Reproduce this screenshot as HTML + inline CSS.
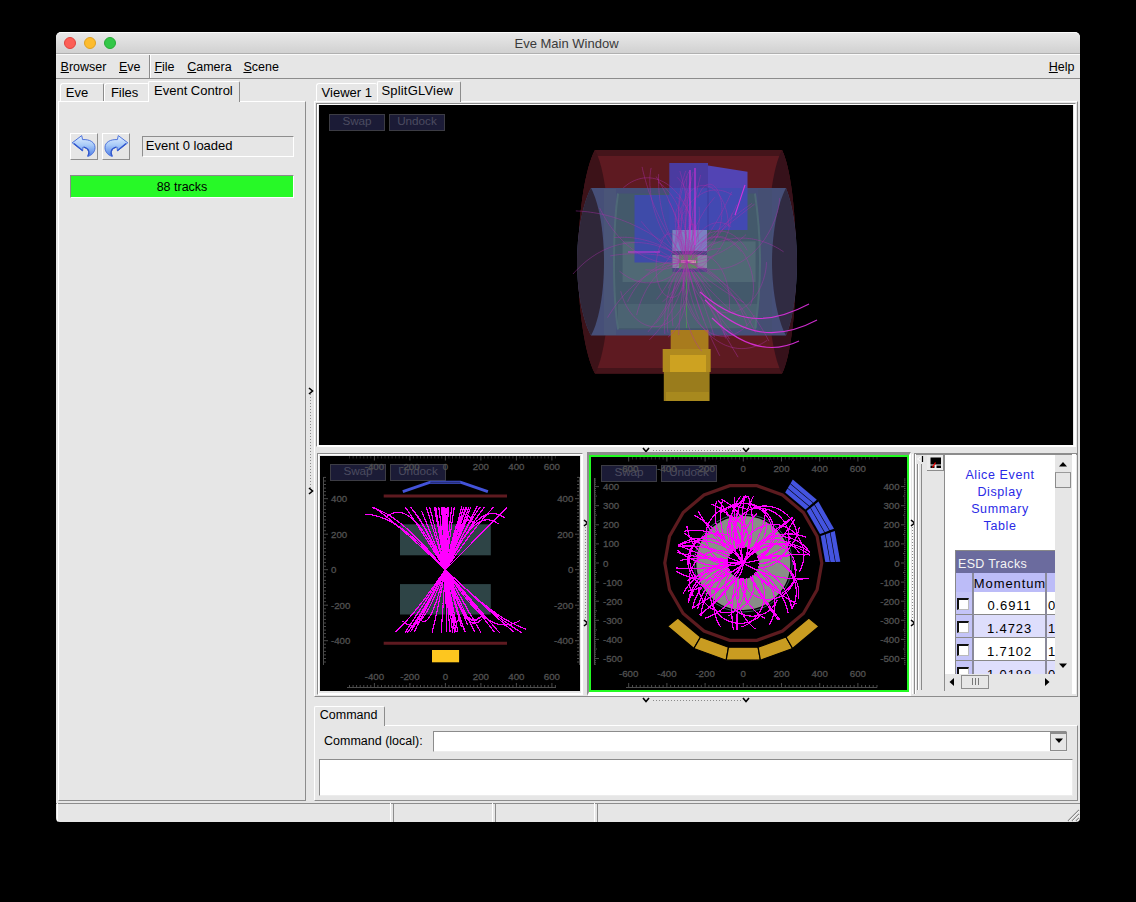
<!DOCTYPE html>
<html><head><meta charset="utf-8">
<style>
*{margin:0;padding:0;box-sizing:border-box}
html,body{width:1136px;height:902px;background:#000;overflow:hidden}
body{position:relative;font-family:"Liberation Sans",sans-serif;font-size:12.5px;color:#000}
.a{position:absolute}
#win{left:56px;top:32px;width:1024px;height:790px;background:#e6e6e6;border-radius:5px 5px 4px 4px;overflow:hidden}
#title{left:0;top:0;width:1024px;height:22px;background:linear-gradient(#e8e8e8,#d1d1d1);border-top:1px solid #fbfbfb;border-bottom:1px solid #b0b0b0;border-radius:5px 5px 0 0}
.dot{width:12px;height:12px;border-radius:50%;top:5px}
.t{white-space:pre;line-height:1}
.u{text-decoration:underline;text-decoration-thickness:1px;text-underline-offset:1px}
.tab{background:#e6e6e6;border-top:1px solid #fff;border-left:1px solid #fff;border-right:1px solid #8c8c8c}
.sunk{border-top:1px solid #8e8e8e;border-left:1px solid #8e8e8e;border-bottom:1px solid #fff;border-right:1px solid #fff}
.raised{border-top:1px solid #fff;border-left:1px solid #fff;border-bottom:1px solid #8e8e8e;border-right:1px solid #8e8e8e}
.blk{background:#000}
.btn{background:#1b1b36;border:1px solid #3c3c44;color:#4b4b60;font-size:11.7px;text-align:center;line-height:12px}
</style></head><body>
<div id="win" class="a">
  <div id="title" class="a"></div>
  <div class="a dot" style="left:8px;background:#fc5f57;border:1px solid #e0443e"></div>
  <div class="a dot" style="left:28px;background:#fdbc2e;border:1px solid #dea123"></div>
  <div class="a dot" style="left:48px;background:#33c748;border:1px solid #27aa35"></div>
  <div class="a t" style="left:458.5px;top:5.3px;font-size:13px;color:#3a3a3a">Eve Main Window</div>

  <!-- menubar -->
  <div class="a" style="left:0;top:22px;width:1024px;height:1px;background:#fafafa"></div>
  <div class="a" style="left:0;top:46px;width:1024px;height:1px;background:#8c8c8c"></div>
  <div class="a" style="left:93px;top:23px;width:1px;height:23px;background:#8c8c8c"></div>
  <div class="a" style="left:94px;top:23px;width:1px;height:23px;background:#fff"></div>
  <div class="a t" style="left:4.6px;top:28.8px"><span class="u">B</span>rowser</div>
  <div class="a t" style="left:63px;top:28.8px"><span class="u">E</span>ve</div>
  <div class="a t" style="left:98.4px;top:28.8px"><span class="u">F</span>ile</div>
  <div class="a t" style="left:131.2px;top:28.8px"><span class="u">C</span>amera</div>
  <div class="a t" style="left:187.4px;top:28.8px"><span class="u">S</span>cene</div>
  <div class="a t" style="left:992.8px;top:29px"><span class="u">H</span>elp</div>

  <!-- left panel -->
  <div class="a" style="left:2px;top:69px;width:248px;height:700px;border-top:1px solid #fff;border-left:1px solid #fff;border-right:1px solid #8c8c8c;border-bottom:1px solid #8c8c8c"></div>
  <div class="a tab" style="left:4px;top:51px;width:44px;height:18px;border-radius:3px 2px 0 0"></div>
  <div class="a tab" style="left:48px;top:51px;width:45px;height:18px;border-radius:3px 2px 0 0;border-right:0"></div>
  <div class="a tab" style="left:92px;top:49px;width:92px;height:21px;border-radius:2px 2px 0 0;border-right:1px solid #8c8c8c"></div>
  <div class="a t" style="left:9.8px;top:54px;font-size:13px">Eve</div>
  <div class="a t" style="left:54.9px;top:54px;font-size:13px">Files</div>
  <div class="a t" style="left:98px;top:52.2px;font-size:13px">Event Control</div>
  <!-- undo/redo -->
  <div class="a raised" style="left:14px;top:101px;width:28px;height:27px"></div>
  <div class="a raised" style="left:46px;top:101px;width:28px;height:27px"></div>
  <svg class="a" style="left:14px;top:101px" width="60" height="27" viewBox="0 0 60 27">
    <defs><linearGradient id="ag" x1="0" y1="0" x2="0" y2="1"><stop offset="0" stop-color="#e4f0ff"/><stop offset="0.45" stop-color="#a9cbf8"/><stop offset="1" stop-color="#4d7ee6"/></linearGradient></defs>
    <g id="undo"><path d="M2.2,9.8 L11.7,2.6 L12.6,6.6 C19.5,6.2 25,9 25,14.6 C25,19.2 21.5,22.6 17.6,23.4 C19.6,20.6 19.6,15.6 13,14 L12.6,18 Z" fill="url(#ag)" stroke="#3f66d8" stroke-width="0.9" stroke-linejoin="round"/>
    <path d="M4,10.5 L12.6,17.6 M14,14.2 C19.6,15.6 19.8,20.5 17.8,23" fill="none" stroke="#2f55cc" stroke-width="1.2"/></g>
    <g transform="translate(60,0) scale(-1,1)"><path d="M2.2,9.8 L11.7,2.6 L12.6,6.6 C19.5,6.2 25,9 25,14.6 C25,19.2 21.5,22.6 17.6,23.4 C19.6,20.6 19.6,15.6 13,14 L12.6,18 Z" fill="url(#ag)" stroke="#3f66d8" stroke-width="0.9" stroke-linejoin="round"/>
    <path d="M4,10.5 L12.6,17.6 M14,14.2 C19.6,15.6 19.8,20.5 17.8,23" fill="none" stroke="#2f55cc" stroke-width="1.2"/></g>
  </svg>
  <div class="a sunk" style="left:86px;top:104px;width:152px;height:21px;background:#e6e6e6"></div>
  <div class="a t" style="left:89.8px;top:107.2px;font-size:13px">Event 0 loaded</div>
  <div class="a" style="left:14px;top:143px;width:224px;height:23px;background:#27f927;border-top:1px solid #8a8a8a;border-left:1px solid #8a8a8a;border-bottom:1px solid #fff;border-right:1px solid #fff"></div>
  <div class="a t" style="left:14px;top:148.6px;width:224px;text-align:center">88 tracks</div>
  <!-- dotted splitter -->
  <!-- right tabs -->
  <div class="a" style="left:258px;top:69px;width:764px;height:596px;border-top:1px solid #fff;border-left:1px solid #fff;border-right:1px solid #8c8c8c;border-bottom:1px solid #8c8c8c"></div>
  <div class="a tab" style="left:260px;top:51px;width:61px;height:18px;border-radius:3px 2px 0 0;border-right:0"></div>
  <div class="a tab" style="left:321px;top:49px;width:84px;height:21px;border-radius:2px 2px 0 0"></div>
  <div class="a t" style="left:265.6px;top:54.2px;font-size:13px">Viewer 1</div>
  <div class="a t" style="left:325.4px;top:52.2px;font-size:13px;letter-spacing:0.2px">SplitGLView</div>

  <!-- splitters (page coords via window offset) -->
  <div class="a" style="left:254px;top:362px;width:1px;height:94px;background:repeating-linear-gradient(#8c8c8c 0 1px,transparent 1px 3px)"></div>
  <svg class="a" style="left:251px;top:355px" width="8" height="8" viewBox="0 0 8 8"><path d="M2,1 L5.5,4 L2,7" fill="none" stroke="#000" stroke-width="1.6"/></svg>
  <svg class="a" style="left:251px;top:455px" width="8" height="8" viewBox="0 0 8 8"><path d="M2,1 L5.5,4 L2,7" fill="none" stroke="#000" stroke-width="1.6"/></svg>
  <!-- upper GL frame -->
  <div class="a" style="left:260px;top:71px;width:760px;height:344px;border-top:1px solid #8c8c8c;border-left:1px solid #8c8c8c;border-bottom:1px solid #fff;border-right:1px solid #fff"></div>
  <div class="a" style="left:261px;top:72px;width:758px;height:342px;border:1px solid #fff"></div>
  <div class="a blk" id="gl1" style="left:263px;top:73px;width:754px;height:340px;overflow:hidden"><div class="a btn" style="left:10px;top:9px;width:56px;height:17px">Swap</div><div class="a btn" style="left:70px;top:9px;width:56px;height:17px">Undock</div><svg width="754" height="340" viewBox="319 105 754 340" style="position:absolute;left:0;top:0">
<path d="M595,150 L782,150 C791,168 796,215 796,262 C796,309 791,356 782,373.5 L595,373.5 C585,356 578,309 578,262 C578,215 585,168 595,150 Z" fill="#5e1a21"/>
<path d="M595,150 L782,150 L784,156 L593,156 Z" fill="#44141a"/>
<path d="M593,368 L784,368 L782,373.5 L595,373.5 Z" fill="#44141a"/>
<path d="M595,150 C585,168 578,215 578,262 C578,309 585,356 595,373.5 C605,356 610,309 610,262 C610,215 605,168 595,150 Z" fill="#3c1218"/>
<path d="M782,150 C772,168 767,215 767,262 C767,309 772,356 782,373.5 C791,356 796,309 796,262 C796,215 791,168 782,150 Z" fill="#36111a"/>
<path d="M591,188 L786,188 C793,205 797,235 797,262 C797,289 793,319 786,335.5 L591,335.5 C582,319 577,289 577,262 C577,235 582,205 591,188 Z" fill="#464f78"/>
<path d="M591,188 C582,205 577,235 577,262 C577,289 582,319 591,335.5 C600,319 604,289 604,262 C604,235 600,205 591,188 Z" fill="#2f2739"/>
<path d="M786,188 C777,205 772,235 772,262 C772,289 777,319 786,335.5 C793,319 797,289 797,262 C797,235 793,205 786,188 Z" fill="#302b42"/>
<rect x="604" y="189" width="12" height="146" fill="#4a5578"/>
<rect x="758" y="189" width="14" height="146" fill="#454f73"/>
<path d="M618,193.5 L755,193.5 C759,210 761,240 761,262 C761,284 759,314 755,329.5 L618,329.5 C615,314 613,284 613,262 C613,240 615,210 618,193.5 Z" fill="#43596b"/>
<rect x="622.6" y="241.4" width="133" height="40.6" fill="#506975"/>
<rect x="618" y="304" width="139" height="24" fill="#4b6372"/>
<path d="M618,193.5 C615,214 614,240 614,262 C614,284 615,310 618,329.5" fill="none" stroke="#52707a" stroke-width="2" opacity="0.7"/>
<path d="M755,193.5 C758,214 760,240 760,262 C760,284 758,310 755,329.5" fill="none" stroke="#52707a" stroke-width="2" opacity="0.7"/>
<path d="M634.5,195 H746 V230 H672.4 V262.5 H634.5 Z" fill="#3e4ba9"/>
<path d="M669.3,163 L708,163 L708,188 L669.3,188 Z" fill="#4a3ba0"/>
<path d="M708,165.6 L747.5,171.8 L747.5,188 L708,188 Z" fill="#5244b4"/>
<path d="M669.3,188 H747.5 V230 H669.3 Z" fill="#4249b2"/>
<path d="M708,188 V230" stroke="#3a3a9a" stroke-width="1"/>
<rect x="672.4" y="230" width="34.6" height="21" fill="#7a80c2"/>
<rect x="672.4" y="251" width="34.6" height="21" fill="#4a4a82"/>
<rect x="672.4" y="255" width="34.6" height="13" fill="#8484a4"/>
<rect x="679" y="254.6" width="18.4" height="14" fill="#5b8c5e"/>
<rect x="681" y="260" width="15" height="3" fill="#c8a0a0"/>
<rect x="670.7" y="330" width="37.8" height="19" fill="#a87b1d"/>
<rect x="662.7" y="349" width="48" height="23" fill="#b08a1e"/>
<rect x="670" y="355" width="36" height="17" fill="#cda221"/>
<rect x="663.8" y="372" width="45.8" height="29" fill="#9a7c1c"/>
<rect x="666" y="392" width="43" height="9" fill="#a8891e"/>
<path d="M686.5,266 V328" stroke="#4c8a5a" stroke-width="1"/>
<path d="M687,262 L687.2,260.3 L687.5,258.6 L687.6,256.9 L687.8,255.2 L687.9,253.6 L688,252.1 L688,250.6 L688,249.1 L688,247.7 L688,246.3 L687.9,245 L687.8,243.7 L687.7,242.5 L687.5,241.3 L687.3,240.2 L687.1,239.2 L686.9,238.2 L686.7,237.3 L686.4,236.4 L686.2,235.6 L685.9,234.8 L685.6,234.2 L685.2,233.5 L684.9,233 L684.6,232.5 L684.2,232.1 L683.8,231.7 L683.5,231.5 L683.1,231.2 L682.7,231.1 L682.3,231 L681.9,231 L681.5,231.1 L681.1,231.2 L680.7,231.4 L680.3,231.7 L680,232 L679.6,232.4 L679.2,232.9 L678.9,233.5 L678.5,234.1 L678.2,234.8 L677.8,235.5 L677.5,236.3 L677.2,237.2 L676.9,238.1 L676.7,239.1 L676.4,240.2 L676.2,241.3 L676,242.5 M695.7,266.1 L697.9,266.9 L700.1,267.6 L702.4,268.2 L704.7,268.6 L707,269 L709.3,269.3 L711.6,269.5 L713.9,269.5 L716.1,269.5 L718.4,269.3 L720.7,269.1 L723,268.7 L725.2,268.2 L727.4,267.7 L729.7,267 L731.8,266.3 L734,265.4 L736.1,264.5 L738.2,263.4 L740.3,262.3 L742.3,261.1 L744.3,259.8 L746.2,258.5 L748.1,257 L750,255.5 L751.8,254 L753.5,252.4 L755.2,250.7 L756.8,249 L758.4,247.2 L760,245.4 L761.4,243.5 L762.8,241.7 L764.2,239.8 L765.5,237.9 L766.7,235.9 L767.9,234 L769,232 L770,230.1 L771,228.2 L772,226.3 L772.8,224.4 L773.6,222.5 L774.4,220.6 L775.1,218.8 L775.7,217 L776.3,215.3 L776.8,213.6 L777.3,212 L777.7,210.4 L778.1,208.9 L778.4,207.5 L778.7,206.1 L778.9,204.8 L779.1,203.6 L779.3,202.5 L779.4,201.5 L779.5,200.5 L779.6,199.7 L779.6,198.9 L779.6,198.2 M685.6,257.7 L685.3,256.8 L685,256 L684.8,255.3 L684.5,254.6 L684.3,254.1 L684.1,253.7 L683.8,253.3 L683.6,253.1 L683.4,252.9 L683.2,252.8 L683,252.8 L682.7,252.9 L682.5,253.1 L682.3,253.4 L682,253.8 L681.8,254.2 L681.5,254.8 L681.2,255.4 L680.9,256.1 L680.5,256.9 L680.1,257.8 L679.7,258.8 L679.3,259.8 L678.9,260.9 L678.4,262.1 L677.8,263.3 L677.3,264.6 L676.7,266 L676,267.4 L675.4,268.9 L674.6,270.5 L673.9,272.1 L673.1,273.7 L672.2,275.4 L671.3,277.1 L670.3,278.9 L669.3,280.7 L668.3,282.5 L667.2,284.3 L666,286.2 L664.8,288.1 L663.6,290 L662.3,291.9 L660.9,293.8 L659.5,295.7 L658,297.6 L656.5,299.5 M687,262 L686.9,260.8 L686.7,259.6 L686.6,258.5 L686.5,257.2 L686.4,256 L686.3,254.8 L686.2,253.5 L686.1,252.2 L686,251 L685.9,249.7 L685.8,248.4 L685.8,247 L685.7,245.7 L685.7,244.3 L685.6,243 L685.6,241.6 L685.6,240.2 L685.6,238.8 L685.6,237.4 L685.6,235.9 L685.6,234.5 L685.6,233 L685.6,231.6 L685.6,230.1 L685.7,228.6 L685.7,227.1 L685.8,225.6 L685.8,224.1 L685.9,222.5 L686,221 L686.1,219.4 L686.2,217.8 L686.3,216.3 L686.4,214.7 L686.5,213.1 L686.7,211.4 L686.8,209.8 L687,208.2 L687.1,206.5 L687.3,204.9 L687.5,203.2 L687.7,201.5 L687.9,199.8 L688.1,198.2 L688.3,196.4 M692.4,255.9 L693.8,254.3 L695.2,252.8 L696.5,251.3 L697.9,249.9 L699.3,248.4 L700.7,246.9 L702.1,245.5 L703.6,244 L705,242.6 L706.4,241.2 L707.8,239.7 L709.3,238.3 L710.7,236.9 L712.2,235.6 L713.6,234.2 L715.1,232.8 L716.6,231.5 L718.1,230.1 L719.5,228.8 L721,227.5 L722.5,226.2 L724,224.9 L725.5,223.6 L727,222.3 L728.6,221.1 L730.1,219.8 L731.6,218.6 L733.1,217.3 L734.7,216.1 L736.2,214.9 L737.8,213.7 L739.3,212.5 L740.9,211.4 L742.4,210.2 L744,209.1 L745.6,207.9 L747.2,206.8 L748.8,205.7 L750.3,204.6 L751.9,203.5 M684.6,263.8 L684,264 L683.3,264.1 L682.7,264 L682.1,263.9 L681.5,263.6 L680.9,263.3 L680.3,262.8 L679.7,262.2 L679.2,261.5 L678.6,260.8 L678.1,259.9 L677.7,258.9 L677.2,257.9 L676.8,256.7 L676.5,255.5 L676.2,254.2 L675.9,252.8 L675.6,251.3 L675.5,249.7 L675.3,248.1 L675.3,246.5 L675.2,244.7 L675.3,242.9 L675.3,241.1 L675.5,239.3 L675.7,237.4 L676,235.4 L676.3,233.5 L676.7,231.5 L677.1,229.5 L677.6,227.5 L678.2,225.5 L678.8,223.5 L679.6,221.5 L680.3,219.6 L681.1,217.6 L682,215.7 L683,213.8 L684,212 L685.1,210.2 L686.2,208.4 L687.3,206.7 L688.6,205.1 L689.9,203.5 L691.2,202 L692.6,200.6 L694,199.2 L695.4,197.9 L696.9,196.7 L698.5,195.6 L700.1,194.6 L701.7,193.7 L703.3,192.9 L705,192.1 L706.6,191.5 L708.3,191 L710.1,190.6 L711.8,190.3 L713.5,190.1 L715.3,190 L717,190 L718.8,190.1 L720.5,190.4 L722.3,190.7 L724,191.2 L725.7,191.7 L727.4,192.4 L729.1,193.1 L730.7,194 L732.3,195 M687,262 L686.1,262.4 L685.1,262.8 L684.2,263.2 L683.3,263.6 L682.3,264 L681.4,264.4 L680.5,264.7 L679.5,265.1 L678.6,265.4 L677.7,265.7 L676.7,266 L675.8,266.3 L674.8,266.6 L673.9,266.9 L672.9,267.2 L672,267.4 L671.1,267.7 L670.1,267.9 L669.2,268.1 L668.2,268.3 L667.3,268.5 L666.3,268.7 L665.4,268.9 L664.4,269 L663.5,269.2 L662.5,269.3 L661.6,269.4 L660.6,269.5 L659.7,269.6 L658.7,269.7 L657.8,269.8 L656.8,269.9 L655.9,269.9 L654.9,270 L654,270 L653,270 L652.1,270 L651.1,270 L650.2,270 L649.2,270 L648.3,269.9 L647.3,269.9 L646.4,269.8 L645.4,269.8 M682.4,269.6 L681.4,271.5 L680.4,273.5 L679.4,275.4 L678.4,277.4 L677.5,279.4 L676.7,281.3 L675.9,283.3 L675.1,285.3 L674.4,287.2 L673.7,289.2 L673,291.1 L672.4,293.1 L671.8,295 L671.2,296.9 L670.7,298.8 L670.3,300.6 L669.8,302.5 L669.4,304.3 L669.1,306.1 L668.7,307.8 L668.4,309.6 L668.2,311.3 L667.9,312.9 L667.8,314.6 L667.6,316.2 L667.5,317.7 L667.4,319.2 L667.3,320.7 L667.3,322.1 L667.2,323.5 L667.3,324.8 L667.3,326.1 L667.4,327.3 L667.5,328.5 L667.6,329.6 L667.7,330.7 L667.9,331.7 L668.1,332.6 M688.1,254.1 L688.5,252.1 L688.9,250.1 L689.3,248.1 L689.8,246.1 L690.3,244.1 L690.8,242.1 L691.4,240.1 L692,238.1 L692.6,236.1 L693.3,234.2 L694,232.2 L694.7,230.2 L695.5,228.3 L696.3,226.4 L697.1,224.4 L698,222.6 L698.9,220.7 L699.9,218.8 L700.8,217 L701.8,215.2 L702.9,213.4 L703.9,211.7 L705,209.9 L706.1,208.2 L707.3,206.6 L708.5,205 L709.7,203.4 L710.9,201.8 L712.2,200.3 L713.4,198.8 L714.7,197.4 M687,262 L688.2,262.5 L689.4,262.8 L690.6,263.2 L691.8,263.4 L693,263.6 L694.2,263.7 L695.4,263.8 L696.7,263.7 L697.9,263.7 L699.1,263.5 L700.3,263.3 L701.5,263 L702.7,262.6 L703.9,262.2 L705.1,261.7 L706.3,261.2 L707.4,260.5 L708.6,259.8 L709.7,259.1 L710.8,258.3 L711.9,257.4 L713,256.5 L714.1,255.5 L715.1,254.4 L716.2,253.3 L717.2,252.1 L718.1,250.9 L719.1,249.6 L720,248.3 L720.9,246.9 L721.8,245.5 L722.7,244 L723.5,242.4 L724.3,240.9 L725,239.3 L725.8,237.6 L726.5,235.9 L727.1,234.2 L727.8,232.4 L728.4,230.6 L728.9,228.8 L729.4,226.9 L729.9,225 L730.4,223.1 L730.8,221.2 L731.2,219.2 L731.5,217.2 L731.8,215.2 L732.1,213.2 M677.7,255.3 L675.3,253.8 L672.8,252.4 L670.3,251.1 L667.8,249.8 L665.2,248.7 L662.6,247.6 L660,246.7 L657.3,245.8 L654.7,245 L652,244.4 L649.3,243.8 L646.6,243.3 L643.9,243 L641.1,242.7 L638.4,242.6 L635.7,242.6 L633,242.6 L630.3,242.8 L627.6,243 L624.9,243.4 L622.2,243.9 L619.6,244.5 L617,245.1 L614.4,245.9 L611.8,246.7 L609.3,247.7 L606.8,248.7 L604.3,249.8 L601.9,251 L599.5,252.3 L597.1,253.6 L594.8,255.1 L592.6,256.5 L590.4,258.1 L588.2,259.7 L586.1,261.3 L584.1,263 L582.1,264.8 L580.2,266.6 L578.3,268.4 L576.5,270.2 L574.7,272.1 L573,274 M685.3,269.3 L684.9,271.2 L684.6,273.1 L684.3,275.1 L684,277 L683.8,279 L683.6,281 L683.5,283 L683.4,285.1 L683.3,287.1 L683.2,289.1 L683.2,291.2 L683.2,293.2 L683.3,295.3 L683.4,297.4 L683.5,299.4 L683.7,301.5 L683.9,303.6 L684.1,305.6 L684.4,307.6 L684.7,309.7 L685.1,311.7 L685.4,313.7 L685.8,315.7 L686.3,317.7 L686.8,319.7 L687.3,321.6 L687.8,323.5 L688.4,325.4 L689,327.3 L689.7,329.1 L690.4,330.9 L691.1,332.7 L691.8,334.5 L692.6,336.2 L693.4,337.9 L694.2,339.5 L695.1,341.1 L695.9,342.7 L696.8,344.2 L697.8,345.7 L698.7,347.2 L699.7,348.6 L700.7,349.9 L701.8,351.2 M687,262 L686.1,260.6 L685.3,259.2 L684.5,257.6 L683.7,256.1 L683,254.4 L682.3,252.7 L681.7,251 L681.1,249.2 L680.6,247.3 L680.1,245.4 L679.7,243.5 L679.3,241.6 L679,239.6 L678.8,237.6 L678.6,235.5 L678.4,233.5 L678.3,231.5 L678.3,229.4 L678.3,227.4 L678.4,225.3 L678.5,223.3 L678.7,221.2 L678.9,219.2 L679.2,217.3 L679.5,215.3 L679.9,213.4 L680.4,211.5 L680.9,209.6 L681.4,207.8 L682,206 L682.7,204.3 L683.4,202.6 L684.1,201 L684.9,199.5 L685.7,198 L686.6,196.6 L687.5,195.3 L688.4,194 L689.4,192.8 L690.4,191.7 L691.4,190.7 L692.5,189.8 L693.5,188.9 L694.6,188.2 L695.8,187.5 L696.9,186.9 L698,186.4 L699.2,186 L700.4,185.7 L701.6,185.5 L702.7,185.4 L703.9,185.4 L705.1,185.5 L706.3,185.7 L707.5,186 L708.6,186.3 L709.8,186.8 L710.9,187.4 L712,188 L713.1,188.8 L714.2,189.6 L715.3,190.5 L716.3,191.5 L717.3,192.6 L718.3,193.8 L719.2,195 L720.1,196.4 L721,197.8 L721.8,199.2 L722.6,200.8 L723.4,202.4 L724.1,204 L724.7,205.7 L725.3,207.5 L725.9,209.3 L726.4,211.1 L726.9,213 L727.3,214.9 L727.6,216.9 L727.9,218.9 L728.2,220.9 L728.4,222.9 L728.5,224.9 L728.6,227 M687.4,253.9 L687.4,251.8 L687.4,249.7 L687.3,247.7 L687.2,245.6 L687.1,243.6 L686.9,241.5 L686.7,239.5 L686.5,237.4 L686.2,235.4 L685.9,233.4 L685.6,231.4 L685.2,229.4 L684.8,227.4 L684.4,225.4 L683.9,223.5 L683.4,221.6 L682.9,219.7 L682.3,217.8 L681.7,216 L681.1,214.2 L680.4,212.4 L679.7,210.6 L679,208.9 L678.3,207.2 L677.5,205.5 L676.7,203.9 L675.9,202.3 L675,200.8 L674.1,199.3 L673.2,197.8 L672.3,196.4 L671.3,195 L670.4,193.7 L669.4,192.4 L668.3,191.2 L667.3,190 L666.2,188.8 L665.2,187.8 L664.1,186.7 L662.9,185.7 L661.8,184.8 L660.7,183.9 L659.5,183.1 L658.3,182.4 M693.9,268.2 L695.7,269.7 L697.5,271.1 L699.2,272.6 L701,274.1 L702.8,275.5 L704.6,276.9 L706.4,278.3 L708.2,279.7 L710,281.1 L711.9,282.4 L713.7,283.8 L715.6,285.1 L717.4,286.4 L719.3,287.7 L721.2,288.9 L723,290.2 L724.9,291.4 L726.8,292.6 L728.7,293.8 L730.6,295 L732.5,296.1 L734.4,297.2 L736.4,298.4 L738.3,299.4 L740.2,300.5 L742.2,301.6 L744.1,302.6 M687,262 L686.5,261 L686,259.9 L685.6,258.8 L685.1,257.7 L684.7,256.5 L684.3,255.2 L683.9,254 L683.5,252.6 L683.2,251.3 L682.9,249.9 L682.6,248.4 L682.3,247 L682,245.4 L681.8,243.9 L681.6,242.3 L681.4,240.7 L681.3,239.1 L681.2,237.4 L681.1,235.7 L681,233.9 L681,232.2 L681,230.4 L681,228.6 L681,226.8 L681.1,224.9 L681.2,223 L681.3,221.1 L681.5,219.2 L681.7,217.3 L681.9,215.4 L682.2,213.4 L682.4,211.5 L682.8,209.5 L683.1,207.5 L683.5,205.5 L683.9,203.5 L684.4,201.5 L684.8,199.5 L685.3,197.5 L685.9,195.5 L686.4,193.5 L687.1,191.5 L687.7,189.6 L688.4,187.6 L689.1,185.6 L689.8,183.6 L690.5,181.7 M689.4,254.5 L690,252.6 L690.4,250.6 L690.9,248.6 L691.3,246.6 L691.7,244.6 L692,242.6 L692.3,240.6 L692.5,238.6 L692.7,236.6 L692.9,234.5 L693.1,232.5 L693.2,230.4 L693.2,228.4 L693.3,226.4 L693.2,224.4 L693.2,222.4 L693.1,220.4 L693,218.4 L692.8,216.4 L692.6,214.5 L692.4,212.5 L692.1,210.6 L691.8,208.8 L691.4,206.9 L691,205.1 L690.6,203.3 L690.2,201.5 L689.7,199.8 L689.2,198.1 L688.6,196.5 L688,194.9 L687.4,193.3 L686.8,191.8 L686.1,190.3 L685.4,188.9 L684.7,187.5 L684,186.2 L683.2,184.9 L682.4,183.6 L681.6,182.5 L680.7,181.3 L679.9,180.3 L679,179.3 L678.1,178.3 L677.2,177.4 M692.5,255.6 L693.9,254 L695.2,252.4 L696.6,250.7 L697.9,249 L699.2,247.3 L700.5,245.6 L701.7,243.9 L703,242.2 L704.3,240.5 L705.5,238.7 L706.7,236.9 L707.9,235.2 L709.1,233.4 L710.3,231.6 L711.5,229.8 L712.6,227.9 L713.7,226.1 L714.9,224.3 L716,222.4 L717.1,220.6 L718.1,218.7 L719.2,216.8 L720.3,214.9 L721.3,213 L722.3,211.1 L723.3,209.2 L724.3,207.3 L725.3,205.4 L726.2,203.4 L727.2,201.5 L728.1,199.6 L729,197.6 L729.9,195.7 L730.8,193.7 L731.7,191.8 M687,262 L685,262.1 L682.9,262.3 L680.9,262.6 L678.9,262.9 L676.9,263.2 L674.9,263.7 L672.9,264.1 L670.9,264.6 L668.9,265.2 L666.9,265.8 L665,266.5 L663,267.2 L661.1,268 L659.2,268.8 L657.3,269.7 L655.4,270.6 L653.5,271.5 L651.6,272.5 L649.8,273.6 L648,274.7 L646.2,275.8 L644.4,277 L642.6,278.2 L640.9,279.5 L639.1,280.8 L637.4,282.2 L635.8,283.6 L634.1,285 L632.5,286.4 L630.9,287.9 L629.3,289.5 L627.7,291 L626.2,292.6 L624.7,294.3 L623.2,295.9 L621.7,297.6 L620.3,299.3 L618.9,301 L617.5,302.8 L616.2,304.6 L614.8,306.4 L613.6,308.2 L612.3,310.1 L611.1,311.9 L609.9,313.8 L608.7,315.7 L607.6,317.6 M680.4,256.2 L678.9,254.6 L677.4,252.9 L675.9,251.2 L674.4,249.5 L673,247.7 L671.6,245.9 L670.3,244 L669,242.1 L667.7,240.2 L666.5,238.2 L665.3,236.2 L664.1,234.2 L663.1,232.1 L662,230.1 L661,228 L660,225.9 L659.1,223.8 L658.2,221.7 L657.4,219.5 L656.6,217.4 L655.9,215.3 L655.2,213.2 L654.5,211 L653.9,208.9 L653.3,206.8 L652.8,204.7 L652.4,202.7 L651.9,200.6 L651.5,198.6 L651.2,196.6 L650.9,194.6 L650.6,192.7 L650.4,190.8 L650.2,188.9 L650.1,187.1 L649.9,185.3 L649.9,183.6 L649.8,181.9 L649.8,180.2 L649.9,178.6 L649.9,177.1 L650,175.6 L650.2,174.2 L650.3,172.8 L650.5,171.5 L650.7,170.2 L650.9,169 L651.2,167.9 M690.6,254.6 L691.7,252.8 L692.8,251.1 L694,249.5 L695.2,248 L696.5,246.5 L697.8,245.2 L699.2,243.9 L700.6,242.7 L702.1,241.6 L703.6,240.5 L705.1,239.6 L706.6,238.8 L708.2,238.1 L709.8,237.6 L711.4,237.1 L713.1,236.7 L714.7,236.5 L716.4,236.4 L718.1,236.4 L719.7,236.5 L721.4,236.7 L723,237 L724.7,237.5 L726.3,238.1 L727.9,238.8 L729.5,239.6 L731,240.5 L732.5,241.5 L734,242.6 L735.5,243.8 L736.9,245.1 L738.3,246.5 L739.6,248 L740.9,249.5 L742.1,251.2 L743.3,252.9 L744.4,254.6 L745.4,256.5 L746.4,258.4 L747.4,260.3 L748.2,262.3 L749,264.3 L749.8,266.4 L750.5,268.4 L751.1,270.5 L751.6,272.6 L752.1,274.7 L752.5,276.8 L752.8,278.9 L753.1,280.9 L753.3,283 L753.4,285 L753.5,287 L753.5,288.9 L753.4,290.8 L753.3,292.6 L753.2,294.4 L752.9,296.1 L752.7,297.7 L752.3,299.3 L751.9,300.8 L751.5,302.2 L751.1,303.5 L750.5,304.7 L750,305.8 M687,262 L688.9,262.7 L690.7,263.5 L692.5,264.4 L694.4,265.2 L696.2,266.1 L698,267.1 L699.8,268.1 L701.6,269.1 L703.3,270.2 L705.1,271.3 L706.8,272.5 L708.6,273.7 L710.3,274.9 L712,276.2 L713.6,277.5 L715.3,278.9 L717,280.2 L718.6,281.7 L720.2,283.1 L721.8,284.6 L723.4,286.1 L724.9,287.7 L726.4,289.3 L728,290.9 L729.5,292.5 L730.9,294.2 L732.4,295.9 L733.8,297.7 L735.2,299.4 L736.6,301.2 L738,303 L739.3,304.8 L740.6,306.7 L741.9,308.6 L743.2,310.5 L744.4,312.4 L745.7,314.3 L746.9,316.3 L748,318.3 L749.2,320.3 L750.3,322.3 L751.4,324.3 L752.5,326.4 L753.5,328.4 L754.5,330.5 L755.5,332.5 M689.7,255 L690.3,253.1 L690.8,251.2 L691.2,249.3 L691.6,247.3 L691.9,245.3 L692.2,243.3 L692.4,241.3 L692.5,239.2 L692.6,237.2 L692.7,235.1 L692.7,233.1 L692.6,231.1 L692.4,229 L692.2,227.1 L692,225.1 L691.7,223.2 L691.3,221.2 L690.9,219.4 L690.4,217.6 L689.9,215.8 L689.3,214.1 L688.7,212.4 L688,210.8 L687.3,209.3 L686.6,207.8 L685.8,206.4 L684.9,205.1 L684.1,203.9 L683.2,202.7 L682.2,201.6 L681.3,200.6 L680.3,199.7 L679.2,198.9 L678.2,198.2 L677.1,197.6 L676.1,197.1 M685.7,262.3 L685.4,262.7 L685.1,263.1 L684.8,263.7 L684.5,264.3 L684.3,265.1 L684,265.9 L683.8,266.8 L683.6,267.9 L683.5,269 L683.4,270.2 L683.3,271.5 L683.2,272.9 L683.2,274.3 L683.2,275.9 L683.3,277.5 L683.4,279.1 L683.5,280.9 L683.8,282.7 L684,284.5 L684.3,286.4 L684.7,288.4 L685.1,290.4 L685.6,292.4 L686.1,294.4 L686.7,296.5 L687.4,298.6 L688.1,300.7 L688.8,302.9 L689.7,305 L690.6,307.1 L691.5,309.3 L692.5,311.4 L693.6,313.5 L694.7,315.6 L695.9,317.7 L697.1,319.7 L698.4,321.7 L699.8,323.6 L701.2,325.6 L702.7,327.4 L704.2,329.2 L705.7,331 L707.3,332.7 L709,334.3 L710.7,335.8 L712.4,337.3 L714.2,338.7 L716,340 L717.9,341.2 L719.8,342.4 L721.7,343.4 L723.6,344.4 L725.6,345.3 L727.6,346 L729.6,346.7 L731.6,347.3 L733.6,347.7 L735.7,348.1 L737.7,348.4 L739.8,348.5 L741.8,348.6 L743.9,348.5 L745.9,348.4 L748,348.1 L750,347.8 L752,347.3 L754,346.8 L756,346.1 L757.9,345.4 L759.9,344.5 L761.8,343.6 L763.6,342.6 L765.5,341.4 L767.2,340.3 M687,262 L685.6,261.7 L684.1,261.5 L682.6,261.3 L681.2,261.2 L679.7,261.1 L678.3,261.1 L676.8,261.2 L675.4,261.3 L673.9,261.4 L672.5,261.6 L671,261.9 L669.6,262.2 L668.2,262.5 L666.7,262.9 L665.3,263.4 L663.9,263.9 L662.5,264.5 L661.1,265.1 L659.7,265.7 L658.3,266.4 L657,267.2 L655.6,268 L654.3,268.9 L652.9,269.8 L651.6,270.7 L650.3,271.7 L649,272.7 L647.8,273.8 L646.5,275 L645.3,276.1 L644.1,277.3 L642.9,278.6 L641.7,279.9 L640.5,281.2 L639.4,282.6 L638.3,284 L637.2,285.5 L636.1,287 L635.1,288.5 L634.1,290 L633.1,291.6 L632.1,293.2 L631.1,294.9 L630.2,296.6 L629.3,298.3 L628.4,300 L627.6,301.8 M678.9,263.3 L676.8,263.5 L674.8,263.6 L672.7,263.6 L670.7,263.5 L668.6,263.4 L666.6,263.2 L664.5,262.9 L662.5,262.6 L660.4,262.2 L658.4,261.7 L656.4,261.2 L654.3,260.6 L652.3,259.9 L650.3,259.2 L648.4,258.4 L646.4,257.5 L644.4,256.6 L642.5,255.6 L640.6,254.5 L638.7,253.4 L636.8,252.2 L635,251 L633.1,249.7 L631.3,248.3 L629.6,246.9 L627.8,245.5 L626.1,244 L624.4,242.4 L622.7,240.8 L621.1,239.1 L619.5,237.4 L617.9,235.7 L616.4,233.9 L614.9,232.1 L613.4,230.2 L612,228.4 L610.6,226.4 L609.2,224.5 L607.9,222.5 L606.6,220.5 L605.3,218.5 L604.1,216.4 L603,214.4 L601.8,212.3 L600.7,210.2 L599.7,208.1 M685.5,253.7 L685.1,251.7 L684.7,249.6 L684.3,247.6 L683.8,245.5 L683.4,243.5 L682.9,241.5 L682.4,239.4 L681.9,237.4 L681.3,235.4 L680.8,233.4 L680.2,231.4 L679.6,229.4 L679,227.4 L678.4,225.4 L677.8,223.4 L677.1,221.5 L676.5,219.5 L675.8,217.6 L675.1,215.7 L674.4,213.8 L673.7,211.9 L672.9,210 L672.2,208.1 L671.4,206.2 L670.6,204.3 L669.8,202.5 L669,200.7 L668.2,198.9 L667.4,197 L666.5,195.3 L665.7,193.5 L664.8,191.7 L663.9,190 L663,188.3 L662,186.5 L661.1,184.8 L660.2,183.2 L659.2,181.5 L658.2,179.9 L657.2,178.2 L656.2,176.6 M687,262 L686.5,263.4 L686.1,264.7 L685.6,266.1 L685.1,267.4 L684.6,268.7 L684.1,270 L683.6,271.2 L683.1,272.5 L682.6,273.7 L682.1,274.9 L681.5,276.1 L681,277.3 L680.4,278.4 L679.9,279.5 L679.3,280.6 L678.7,281.7 L678.2,282.8 L677.6,283.8 L677,284.8 L676.4,285.8 L675.8,286.8 L675.1,287.8 L674.5,288.7 L673.9,289.6 L673.3,290.5 L672.6,291.4 L672,292.2 L671.3,293 L670.7,293.8 L670,294.6 L669.4,295.4 L668.7,296.1 L668,296.8 L667.3,297.5 L666.7,298.2 L666,298.8 L665.3,299.4 L664.6,300 L663.9,300.6 L663.2,301.2 L662.5,301.7 M687.1,270.2 L686.9,272.1 L686.7,274.1 L686.5,276 L686.2,277.8 L685.8,279.6 L685.3,281.3 L684.9,283 L684.3,284.6 L683.7,286.1 L683.1,287.6 L682.4,288.9 L681.7,290.2 L680.9,291.4 L680.1,292.4 L679.3,293.4 L678.5,294.3 L677.6,295.1 L676.7,295.8 L675.8,296.3 L674.8,296.8 L673.9,297.1 L672.9,297.4 L672,297.5 L671,297.5 L670,297.4 L669.1,297.1 L668.1,296.8 L667.2,296.4 L666.3,295.8 L665.4,295.2 L664.5,294.4 L663.7,293.5 L662.8,292.6 L662.1,291.5 L661.3,290.3 L660.6,289.1 L659.9,287.8 L659.3,286.3 L658.8,284.8 L658.2,283.3 L657.8,281.6 L657.3,279.9 L657,278.2 L656.7,276.3 L656.4,274.5 L656.2,272.6 L656.1,270.6 L656.1,268.7 L656.1,266.7 L656.1,264.7 L656.3,262.6 L656.5,260.6 L656.7,258.6 L657.1,256.6 L657.5,254.5 L657.9,252.6 L658.4,250.6 L659,248.7 L659.7,246.8 L660.4,244.9 L661.2,243.1 L662,241.4 L662.9,239.7 L663.8,238.1 L664.8,236.5 L665.8,235 L666.9,233.6 L668,232.3 M686.8,261.5 L686.7,261.6 L686.6,261.7 L686.6,261.9 L686.5,262.1 L686.5,262.5 L686.4,262.8 L686.4,263.3 L686.3,263.8 L686.3,264.4 L686.3,265 L686.2,265.7 L686.2,266.5 L686.3,267.3 L686.3,268.2 L686.3,269.1 L686.4,270.1 L686.4,271.2 L686.5,272.3 L686.6,273.5 L686.8,274.7 L686.9,276 L687.1,277.4 L687.3,278.8 L687.5,280.2 L687.8,281.7 L688,283.3 L688.3,284.8 L688.7,286.5 L689,288.2 L689.4,289.9 L689.8,291.6 L690.3,293.4 L690.8,295.3 L691.3,297.2 L691.8,299.1 L692.4,301 L693,303 L693.7,304.9 L694.3,307 L695.1,309 L695.8,311.1 L696.6,313.1 L697.4,315.2 L698.3,317.4 L699.2,319.5 M687,262 L689.8,263 L692.6,264.1 L695.3,265.3 L698,266.5 L700.7,267.8 L703.4,269.2 L706,270.7 L708.6,272.2 L711.2,273.8 L713.7,275.5 L716.2,277.2 L718.6,279 L721,280.8 L723.4,282.7 L725.7,284.7 L727.9,286.7 L730.2,288.7 L732.3,290.7 L734.5,292.8 L736.5,295 L738.5,297.1 L740.5,299.3 L742.4,301.5 L744.3,303.7 L746.1,305.9 L747.8,308.1 L749.6,310.3 L751.2,312.6 L752.8,314.8 L754.3,317 L755.8,319.1 L757.3,321.3 L758.7,323.5 L760,325.6 L761.3,327.7 L762.5,329.7 L763.7,331.7 L764.9,333.7 L766,335.6 L767,337.5 L768,339.4 L769,341.1 M684.4,254.8 L683.9,252.9 L683.3,251 L682.8,249.1 L682.3,247.2 L681.8,245.2 L681.4,243.3 L681,241.3 L680.6,239.3 L680.3,237.3 L680,235.3 L679.7,233.3 L679.4,231.3 L679.2,229.2 L679,227.2 L678.8,225.1 L678.7,223.1 L678.5,221 L678.5,218.9 L678.4,216.9 L678.4,214.8 L678.4,212.8 L678.4,210.7 L678.5,208.7 L678.6,206.6 L678.7,204.6 L678.9,202.6 L679.1,200.6 L679.3,198.6 L679.5,196.6 L679.8,194.6 L680.1,192.7 L680.4,190.7 L680.8,188.8 L681.2,186.9 L681.6,185 L682,183.2 L682.5,181.3 L683,179.5 L683.5,177.7 L684.1,176 L684.6,174.2 L685.2,172.5 L685.9,170.8 M684.9,268.7 L684.4,270.3 L683.9,272 L683.3,273.6 L682.7,275.2 L682.1,276.8 L681.6,278.4 L681,279.9 L680.4,281.5 L679.7,283 L679.1,284.5 L678.5,286 L677.8,287.5 L677.2,289 L676.5,290.4 L675.8,291.9 L675.2,293.3 L674.5,294.7 L673.8,296.1 L673.1,297.5 L672.4,298.8 L671.6,300.2 L670.9,301.5 L670.2,302.8 L669.4,304.1 L668.7,305.4 L667.9,306.6 L667.2,307.9 L666.4,309.1 L665.6,310.3 L664.8,311.5 L664,312.7 L663.2,313.8 L662.4,315 L661.6,316.1 L660.8,317.2 L659.9,318.3 L659.1,319.3 L658.2,320.4 L657.4,321.4 L656.5,322.4 L655.7,323.4 M687,262 L687.3,260.1 L687.5,258.2 L687.7,256.3 L687.9,254.4 L688.1,252.5 L688.3,250.5 L688.5,248.6 L688.6,246.6 L688.7,244.6 L688.8,242.6 L688.9,240.6 L688.9,238.6 L689,236.6 L689,234.6 L689,232.5 L689,230.5 L688.9,228.5 L688.9,226.4 L688.8,224.3 L688.7,222.3 L688.6,220.2 L688.4,218.2 L688.3,216.1 L688.1,214 L687.9,211.9 L687.7,209.9 L687.5,207.8 L687.2,205.7 L686.9,203.6 L686.6,201.6 L686.3,199.5 L686,197.4 L685.6,195.3 L685.3,193.3 L684.9,191.2 L684.4,189.2 L684,187.1 L683.6,185.1 L683.1,183 L682.6,181 L682.1,179 L681.6,177 L681,175 L680.4,173 L679.9,171 M688.9,270.4 L689.4,272.5 L689.9,274.6 L690.4,276.7 L691,278.8 L691.5,280.9 L692.1,283 L692.6,285.1 L693.2,287.2 L693.8,289.3 L694.4,291.4 L695,293.5 L695.6,295.6 L696.3,297.7 L696.9,299.7 L697.6,301.8 L698.2,303.9 L698.9,306 L699.6,308.1 L700.3,310.1 L701,312.2 L701.7,314.3 L702.5,316.3 L703.2,318.4 L704,320.4 M690.5,269.4 L691.4,271.2 L692.3,273 L693.2,274.9 L694.1,276.7 L695.1,278.5 L696,280.3 L696.9,282.1 L697.8,283.9 L698.7,285.7 L699.7,287.5 L700.6,289.3 L701.6,291.1 L702.5,292.9 L703.4,294.7 L704.4,296.4 L705.4,298.2 L706.3,300 L707.3,301.7 L708.3,303.5 L709.2,305.2 L710.2,307 L711.2,308.7 L712.2,310.4 L713.2,312.2 L714.2,313.9 L715.2,315.6 L716.2,317.3 L717.2,319.1 L718.2,320.8 L719.2,322.5 L720.2,324.2 L721.3,325.8 L722.3,327.5 L723.3,329.2 L724.4,330.9 L725.4,332.6 L726.4,334.2 L727.5,335.9 L728.5,337.5 L729.6,339.2 M687,262 L687.6,262.8 L688.1,263.5 L688.7,264.2 L689.2,264.8 L689.8,265.4 L690.3,265.9 L690.9,266.4 L691.4,266.9 L691.9,267.3 L692.5,267.7 L693,268 L693.5,268.3 L694,268.5 L694.6,268.7 L695.1,268.8 L695.6,268.9 L696.1,269 L696.7,269 L697.2,269 L697.7,268.9 L698.2,268.8 L698.8,268.6 L699.3,268.4 L699.9,268.2 L700.4,267.9 L701,267.5 L701.5,267.2 L702.1,266.7 L702.7,266.3 L703.3,265.8 L703.9,265.2 L704.5,264.6 L705.1,264 L705.7,263.3 L706.4,262.6 L707,261.9 L707.7,261.1 L708.3,260.2 L709,259.4 L709.7,258.5 L710.4,257.5 L711.2,256.5 M691.4,268 L692.6,269.4 L693.7,270.9 L694.8,272.3 L696,273.7 L697.1,275.2 L698.3,276.6 L699.4,278 L700.6,279.4 L701.8,280.7 L703,282.1 L704.1,283.5 L705.3,284.8 L706.5,286.2 L707.7,287.5 L708.9,288.8 L710.1,290.1 L711.3,291.4 L712.6,292.7 L713.8,293.9 L715,295.2 L716.2,296.5 L717.5,297.7 L718.7,298.9 L720,300.1 L721.2,301.3 L722.5,302.5 L723.7,303.7 L725,304.9 L726.3,306 L727.5,307.2 L728.8,308.3 L730.1,309.4 L731.4,310.5 L732.7,311.6 L734,312.7 L735.3,313.8 L736.6,314.8 L737.9,315.9 L739.2,316.9 L740.5,317.9 M682.8,261.9 L681.8,261.9 L680.7,261.8 L679.7,261.6 L678.6,261.5 L677.6,261.3 L676.6,261.2 L675.5,260.9 L674.5,260.7 L673.5,260.5 L672.4,260.2 L671.4,259.9 L670.4,259.6 L669.3,259.2 L668.3,258.8 L667.3,258.5 L666.3,258 L665.3,257.6 L664.2,257.2 L663.2,256.7 L662.2,256.2 L661.2,255.6 L660.2,255.1 L659.2,254.5 L658.2,253.9 L657.2,253.3 L656.3,252.7 L655.3,252.1 L654.3,251.4 M687,262 L685.2,261.4 L683.4,260.8 L681.6,260.3 L679.8,259.8 L678,259.3 L676.1,258.8 L674.3,258.3 L672.5,257.9 L670.7,257.5 L668.9,257.1 L667,256.7 L665.2,256.4 L663.4,256 L661.5,255.7 L659.7,255.4 L657.9,255.2 L656,254.9 L654.2,254.7 L652.4,254.5 L650.5,254.3 L648.7,254.2 L646.9,254 L645,253.9 L643.2,253.8 L641.3,253.7 L639.5,253.7 L637.7,253.7 L635.8,253.7 L634,253.7 L632.1,253.7 L630.3,253.8 L628.5,253.9 L626.6,254 L624.8,254.1 L623,254.2 L621.1,254.4 L619.3,254.6 L617.5,254.8 L615.6,255 L613.8,255.3 L612,255.6 L610.2,255.9 M692.9,256.3 L694.4,254.9 L695.9,253.5 L697.3,252.1 L698.8,250.7 L700.3,249.3 L701.8,247.9 L703.3,246.5 L704.8,245.1 L706.3,243.8 L707.9,242.4 L709.4,241 L710.9,239.7 L712.4,238.3 L713.9,237 L715.5,235.7 L717,234.3 L718.5,233 L720,231.7 L721.6,230.4 L723.1,229.1 L724.7,227.8 L726.2,226.5 L727.8,225.2 L729.3,223.9 L730.9,222.6 L732.4,221.3 L734,220.1 L735.6,218.8 L737.1,217.6 L738.7,216.3 L740.3,215.1 L741.8,213.8 L743.4,212.6 L745,211.4 L746.6,210.1 L748.2,208.9 L749.8,207.7 L751.4,206.5 L753,205.3 L754.6,204.1 M693.7,256.1 L695.4,254.7 L697.2,253.3 L699,252.1 L700.8,250.8 L702.7,249.6 L704.5,248.5 L706.4,247.4 L708.3,246.4 L710.3,245.4 L712.2,244.5 L714.2,243.7 L716.2,242.9 L718.2,242.1 L720.2,241.4 L722.2,240.8 L724.2,240.3 L726.3,239.8 L728.4,239.3 L730.4,239 L732.5,238.7 L734.6,238.4 L736.7,238.2 L738.8,238.1 L740.9,238.1 L743,238.1 L745.1,238.2 L747.2,238.3 L749.3,238.6 L751.4,238.8 L753.5,239.2 L755.6,239.6 L757.6,240.1 L759.7,240.6 L761.8,241.2 L763.8,241.9 L765.9,242.6 L767.9,243.4 L769.9,244.2 L771.9,245.1 L773.9,246.1 L775.9,247.1 L777.8,248.2 L779.8,249.4 L781.7,250.6 L783.6,251.8 M687,262 L685.5,260.1 L684,258.1 L682.5,256.1 L681,254.2 L679.6,252.2 L678.2,250.1 L676.8,248.1 L675.4,246.1 L674.1,244 L672.7,241.9 L671.4,239.8 L670.2,237.7 L668.9,235.6 L667.7,233.5 L666.5,231.4 L665.4,229.3 L664.2,227.1 L663.1,225 L662,222.8 L660.9,220.7 L659.9,218.5 L658.9,216.4 L657.9,214.2 L656.9,212.1 L656,209.9 L655.1,207.8 L654.2,205.7 L653.3,203.5 L652.5,201.4 L651.7,199.3 L650.9,197.1 L650.2,195 L649.4,192.9 L648.7,190.9 L648,188.8 L647.4,186.7 L646.7,184.7 L646.1,182.6 L645.5,180.6 L645,178.6 L644.4,176.6 L643.9,174.6 L643.4,172.7 L642.9,170.7 L642.5,168.8 L642.1,166.9 M686.2,253.9 L686,251.8 L685.9,249.8 L685.7,247.7 L685.6,245.7 L685.5,243.6 L685.5,241.6 L685.4,239.5 L685.4,237.4 L685.3,235.4 L685.3,233.3 L685.3,231.3 L685.3,229.2 L685.4,227.2 L685.4,225.1 L685.5,223.1 L685.6,221 L685.7,219 L685.8,217 L686,214.9 L686.1,212.9 L686.3,210.9 L686.5,208.9 L686.7,206.8 L686.9,204.8 L687.2,202.8 L687.4,200.9 L687.7,198.9 L688,196.9 L688.3,194.9 L688.6,193 L688.9,191 L689.3,189.1 L689.7,187.1 L690,185.2 L690.4,183.3 L690.9,181.4 L691.3,179.5 L691.7,177.6 L692.2,175.8 L692.7,173.9 L693.2,172.1 M687,265.7 L687.1,266.5 L687.1,267.4 L687.1,268.2 L687.2,269 L687.2,269.7 L687.3,270.4 L687.4,271.1 L687.5,271.8 L687.5,272.5 L687.6,273.1 L687.7,273.7 L687.8,274.2 L687.9,274.8 L688.1,275.3 L688.2,275.8 L688.3,276.2 L688.4,276.7 L688.5,277.1 L688.7,277.4 L688.8,277.8 L689,278.1 L689.1,278.4 L689.3,278.6 L689.4,278.8 L689.6,279 L689.7,279.2 L689.9,279.4 L690,279.5 L690.2,279.6 L690.3,279.6 L690.5,279.6 L690.7,279.6 L690.8,279.6 L691,279.5 L691.2,279.5 L691.3,279.3 L691.5,279.2 L691.7,279 L691.8,278.8 L692,278.6 L692.2,278.3 M687,262 L686.3,262.5 L685.6,263 L685,263.7 L684.3,264.3 L683.7,265 L683,265.8 L682.4,266.6 L681.8,267.4 L681.2,268.3 L680.6,269.3 L680,270.3 L679.5,271.3 L678.9,272.4 L678.4,273.5 L677.9,274.7 L677.4,275.9 L676.9,277.2 L676.4,278.5 L676,279.8 L675.6,281.2 L675.2,282.7 L674.8,284.1 L674.4,285.6 L674.1,287.2 L673.8,288.8 L673.5,290.4 L673.2,292 L673,293.7 L672.8,295.4 L672.6,297.2 L672.4,298.9 L672.3,300.7 L672.1,302.6 L672.1,304.4 L672,306.3 L672,308.2 L672,310.1 L672,312 L672,314 L672.1,316 L672.2,318 L672.4,320 L672.5,322 L672.7,324.1 L673,326.1 M685.8,254.1 L685.6,252.2 L685.5,250.3 L685.4,248.5 L685.3,246.8 L685.3,245.1 L685.3,243.4 L685.3,241.8 L685.4,240.2 L685.5,238.7 L685.7,237.3 L685.9,235.9 L686.1,234.6 L686.3,233.4 L686.6,232.2 L686.9,231.1 L687.2,230.1 L687.5,229.2 L687.9,228.3 L688.3,227.5 L688.7,226.8 L689.1,226.2 L689.5,225.6 L689.9,225.1 L690.3,224.7 L690.8,224.4 L691.2,224.2 L691.7,224.1 L692.1,224 L692.6,224 L693,224.1 L693.5,224.3 L693.9,224.6 L694.3,225 L694.7,225.4 L695.1,225.9 L695.5,226.5 L695.9,227.2 L696.2,227.9 L696.6,228.8 L696.9,229.7 L697.2,230.6 L697.4,231.7 L697.6,232.8 L697.8,234 L698,235.2 L698.2,236.5 L698.3,237.9 L698.3,239.3 L698.4,240.8 L698.4,242.3 M690,254.4 L690.9,252.6 L691.8,250.8 L692.8,249.1 L693.8,247.5 L694.9,245.9 L696,244.3 L697.2,242.9 L698.4,241.5 L699.6,240.2 L700.9,238.9 L702.2,237.8 L703.6,236.7 L705,235.7 L706.4,234.8 L707.8,234 L709.3,233.3 L710.8,232.7 L712.3,232.2 L713.8,231.7 L715.3,231.4 L716.9,231.2 L718.4,231.1 L719.9,231 L721.5,231.1 L723,231.3 L724.6,231.6 L726.1,232 L727.6,232.4 L729.1,233 L730.6,233.7 L732.1,234.5 L733.5,235.3 L734.9,236.3 L736.3,237.3 L737.7,238.5 L739,239.7 L740.3,241 L741.5,242.4 L742.7,243.8 L743.9,245.3 L745.1,246.9 L746.1,248.6 L747.2,250.3 M687,262 L686.3,260.5 L685.6,258.9 L685,257.3 L684.3,255.6 L683.7,253.9 L683.2,252.2 L682.6,250.4 L682.1,248.7 L681.6,246.9 L681.2,245 L680.8,243.2 L680.4,241.3 L680,239.4 L679.7,237.4 L679.4,235.5 L679.2,233.5 L679,231.5 L678.8,229.5 L678.6,227.5 L678.5,225.5 L678.4,223.5 L678.4,221.4 L678.4,219.4 L678.4,217.4 L678.4,215.3 L678.5,213.3 L678.6,211.2 L678.8,209.2 L679,207.2 L679.2,205.1 L679.5,203.1 L679.8,201.1 L680.1,199.1 L680.5,197.1 L680.9,195.2 L681.3,193.2 L681.7,191.3 L682.2,189.4 L682.8,187.5 L683.3,185.6 L683.9,183.8 L684.5,182 L685.2,180.2 L685.9,178.4 L686.6,176.7 L687.3,175 L688.1,173.4 L688.9,171.7 M684.4,261.5 L683.7,261.3 L683.1,261.2 L682.4,261 L681.8,260.9 L681.1,260.7 L680.5,260.5 L679.8,260.3 L679.2,260.1 L678.5,259.9 L677.9,259.7 L677.2,259.5 L676.6,259.3 L675.9,259 L675.3,258.8 L674.7,258.5 L674,258.3 L673.4,258 L672.7,257.8 L672.1,257.5 L671.4,257.2 L670.8,256.9 L670.2,256.6 L669.5,256.3 L668.9,256 L668.2,255.7 L667.6,255.3 L667,255 L666.3,254.7 L665.7,254.3 L665.1,254 L664.4,253.6 L663.8,253.2 L663.2,252.8 L662.5,252.4 L661.9,252.1 L661.3,251.7 L660.6,251.2 L660,250.8 L659.4,250.4 L658.8,250 M689.2,261.2 L689.7,260.8 L690.3,260.2 L690.8,259.5 L691.3,258.8 L691.7,257.9 L692.2,257 L692.6,255.9 L693,254.8 L693.3,253.6 L693.6,252.3 L693.9,250.9 L694.1,249.4 L694.3,247.9 L694.5,246.3 L694.6,244.6 L694.6,242.8 L694.6,241 L694.6,239.2 L694.5,237.3 L694.3,235.3 L694.1,233.4 L693.8,231.3 L693.5,229.3 L693.1,227.2 L692.6,225.1 L692.1,223 L691.6,220.9 L690.9,218.8 L690.2,216.7 L689.5,214.6 L688.7,212.5 L687.8,210.4 L686.9,208.4 L685.9,206.4 L684.8,204.4 L683.7,202.4 L682.5,200.5 L681.3,198.7 L680.1,196.9 L678.8,195.1 L677.4,193.5 L676,191.9 L674.5,190.3 L673,188.8 L671.5,187.5 L669.9,186.2 L668.3,184.9 L666.7,183.8 L665,182.8 L663.3,181.8 L661.5,181 L659.8,180.2 L658,179.6 L656.2,179 L654.4,178.6 L652.6,178.2 L650.8,178 L649,177.8 L647.2,177.8 L645.4,177.9 L643.6,178 L641.8,178.3 L640,178.7 L638.2,179.2 L636.4,179.8 L634.7,180.5 L633,181.2 L631.3,182.1 L629.6,183.1 L628,184.1 L626.4,185.3 L624.9,186.5 L623.3,187.8 M687,262 L686.5,262.8 L686,263.7 L685.5,264.7 L685,265.8 L684.6,267 L684.2,268.3 L683.9,269.7 L683.6,271.1 L683.4,272.7 L683.2,274.3 L683,276 L683,277.8 L682.9,279.6 L683,281.5 L683,283.4 L683.2,285.4 L683.4,287.4 L683.7,289.4 L684,291.5 L684.4,293.6 L684.9,295.7 L685.4,297.8 L686,299.9 L686.7,302 L687.4,304.1 L688.2,306.2 L689.1,308.2 L690,310.2 L691,312.2 L692.1,314.1 L693.2,316 L694.4,317.8 L695.6,319.6 L696.9,321.3 L698.2,323 L699.6,324.5 L701,326 L702.5,327.4 L704,328.7 L705.6,329.9 L707.2,331 L708.8,332 L710.5,332.9 L712.1,333.7 L713.8,334.4 L715.6,335 L717.3,335.5 L719.1,335.8 L720.8,336.1 L722.6,336.2 L724.3,336.2 L726.1,336.1 L727.8,335.9 L729.6,335.6 L731.3,335.2 L733,334.6 L734.7,334 L736.4,333.2 L738,332.4 L739.6,331.4 L741.2,330.3 L742.7,329.2 L744.2,327.9 L745.6,326.6 L747,325.2 L748.4,323.7 L749.7,322.1 L751,320.5 L752.1,318.8 L753.3,317 L754.4,315.2 M687.6,254.3 L687.8,252.3 L688,250.4 L688.1,248.5 L688.3,246.5 L688.5,244.6 L688.8,242.6 L689,240.6 L689.2,238.7 L689.4,236.7 L689.7,234.7 L689.9,232.8 L690.2,230.8 L690.5,228.8 L690.7,226.9 L691,224.9 L691.3,222.9 L691.6,220.9 L691.9,218.9 L692.2,216.9 L692.5,215 L692.9,213 L693.2,211 L693.5,209 L693.9,207 L694.3,205 L694.6,203 L695,201 L695.4,199 L695.8,197 L696.2,195 L696.6,193 L697,191 L697.4,189 L697.9,187 L698.3,185 L698.7,183 L699.2,181 L699.7,179 L700.1,176.9 L700.6,174.9 M686.4,253.8 L686.2,251.8 L686.1,249.8 L686,247.7 L685.8,245.7 L685.7,243.6 L685.6,241.6 L685.5,239.5 L685.5,237.5 L685.4,235.4 L685.3,233.4 L685.3,231.3 L685.2,229.3 L685.2,227.2 L685.2,225.2 L685.1,223.1 L685.1,221.1 L685.1,219 L685.1,216.9 L685.1,214.9 L685.2,212.8 L685.2,210.8 L685.2,208.7 L685.3,206.7 L685.3,204.6 L685.4,202.6 L685.5,200.5 L685.6,198.5 L685.7,196.4 L685.8,194.4 L685.9,192.4 L686,190.3 L686.1,188.3 L686.2,186.2 L686.4,184.2 L686.5,182.2 L686.7,180.1 L686.9,178.1 L687,176.1 M687,262 L687.4,263.9 L687.8,265.9 L688.2,267.8 L688.6,269.8 L689,271.8 L689.5,273.8 L690,275.8 L690.4,277.8 L690.9,279.8 L691.5,281.8 L692,283.9 L692.5,285.9 L693.1,288 L693.7,290 L694.3,292.1 L694.9,294.2 L695.5,296.3 L696.2,298.4 L696.8,300.5 L697.5,302.6 L698.2,304.7 L698.9,306.8 L699.6,308.9 L700.4,311 L701.1,313.1 L701.9,315.3 L702.7,317.4 L703.5,319.5 L704.3,321.7 L705.2,323.8 L706,326 L706.9,328.1 L707.8,330.2 L708.7,332.4 L709.6,334.5 L710.6,336.7 L711.5,338.8 L712.5,340.9 L713.5,343.1 L714.5,345.2 L715.6,347.3 L716.6,349.5 L717.7,351.6 L718.7,353.7 L719.8,355.8 M690.1,257.1 L690.8,255.8 L691.5,254.4 L692.2,253 L692.8,251.5 L693.4,250 L694,248.4 L694.6,246.8 L695.1,245.2 L695.6,243.5 L696.1,241.8 L696.5,240 L696.9,238.3 L697.3,236.5 L697.7,234.6 L698,232.7 L698.3,230.8 L698.5,228.9 L698.8,227 L698.9,225 L699.1,223 L699.2,221 L699.3,219 L699.3,217 L699.4,215 L699.3,212.9 L699.3,210.9 L699.2,208.8 L699,206.7 M694.2,261.1 L696,260.8 L697.8,260.4 L699.6,260 L701.4,259.5 L703.2,259.1 L704.9,258.6 L706.7,258 L708.5,257.4 L710.2,256.8 L711.9,256.1 L713.7,255.5 L715.4,254.7 L717.1,254 L718.8,253.2 L720.5,252.3 L722.2,251.5 L723.9,250.5 L725.6,249.6 L727.2,248.6 L728.9,247.6 L730.5,246.6 L732.1,245.5 L733.7,244.4 L735.3,243.3 L736.9,242.1 L738.5,240.9 L740,239.7 L741.6,238.5 L743.1,237.2 L744.6,235.9 L746.1,234.5 M687,262 L686.8,260.3 L686.6,258.6 L686.3,257 L686.1,255.3 L685.8,253.7 L685.5,252 L685.3,250.4 L685,248.8 L684.7,247.2 L684.4,245.6 L684,244.1 L683.7,242.5 L683.4,241 L683,239.4 L682.7,237.9 L682.3,236.4 L681.9,234.9 L681.5,233.5 L681.1,232 L680.7,230.6 L680.3,229.2 L679.9,227.7 L679.5,226.4 L679,225 L678.6,223.6 L678.1,222.3 L677.7,220.9 L677.2,219.6 L676.7,218.3 L676.2,217 L675.7,215.8 L675.2,214.5 L674.7,213.3 L674.2,212.1 L673.6,210.9 L673.1,209.7 L672.6,208.5 L672,207.4 L671.5,206.2 L670.9,205.1 L670.3,204 L669.7,202.9 L669.2,201.9 L668.6,200.8 L668,199.8 M690,259.7 L690.7,259.2 L691.5,258.7 L692.2,258.2 L693,257.7 L693.7,257.2 L694.5,256.7 L695.3,256.3 L696,255.8 L696.8,255.4 L697.6,255 L698.3,254.6 L699.1,254.2 L699.9,253.8 L700.6,253.5 L701.4,253.1 L702.2,252.8 L702.9,252.4 L703.7,252.1 L704.5,251.8 L705.3,251.5 L706,251.3 L706.8,251 L707.6,250.8 L708.4,250.5 L709.2,250.3 L709.9,250.1 L710.7,249.9 L711.5,249.7 L712.3,249.6 L713.1,249.4 L713.8,249.3 L714.6,249.1 L715.4,249 L716.2,248.9 L717,248.8 L717.8,248.7 L718.5,248.7 L719.3,248.6 L720.1,248.6 L720.9,248.6 M678.1,253.9 L675.8,252 L673.5,250.1 L671.1,248.2 L668.7,246.3 L666.3,244.5 L663.9,242.7 L661.4,241 L658.9,239.3 L656.4,237.6 L653.8,236 L651.3,234.4 L648.7,232.8 L646.1,231.3 L643.4,229.9 L640.8,228.5 L638.1,227.1 L635.4,225.8 L632.7,224.6 L629.9,223.3 L627.2,222.2 L624.4,221.1 L621.6,220 L618.9,219 L616,218.1 L613.2,217.2 L610.4,216.4 L607.5,215.6 L604.7,214.9 L601.8,214.2 L599,213.6 L596.1,213.1 L593.2,212.6 L590.3,212.2 L587.4,211.8 L584.5,211.5 L581.6,211.2 L578.7,211.1 L575.8,210.9 M687,262 L686.3,263.8 L685.7,265.6 L685,267.4 L684.3,269.1 L683.6,270.9 L682.8,272.6 L682.1,274.4 L681.4,276.1 L680.6,277.8 L679.9,279.5 L679.1,281.2 L678.3,282.9 L677.5,284.6 L676.8,286.3 L676,287.9 L675.1,289.6 L674.3,291.2 L673.5,292.8 L672.7,294.4 L671.8,296 L671,297.6 L670.1,299.2 L669.2,300.7 L668.4,302.3 L667.5,303.8 L666.6,305.4 L665.7,306.9 L664.8,308.4 L663.8,309.9 L662.9,311.3 L662,312.8 L661,314.2 L660.1,315.7 L659.1,317.1 L658.2,318.5 L657.2,319.9 L656.2,321.3 L655.2,322.6 L654.2,324 L653.2,325.3 L652.2,326.6 L651.2,327.9 L650.2,329.2 L649.1,330.5 L648.1,331.8 M689.5,265.8 L690.1,266.9 L690.8,268.1 L691.5,269.3 L692.2,270.7 L692.9,272 L693.7,273.4 L694.5,274.9 L695.3,276.5 L696.2,278 L697.1,279.7 L698,281.4 L698.9,283.1 L699.9,284.9 L700.9,286.7 L702,288.6 L703,290.5 L704.2,292.5 L705.3,294.4 L706.5,296.5 L707.7,298.5 L709,300.6 L710.3,302.7 L711.7,304.8 L713,306.9 L714.5,309.1 L715.9,311.3 L717.5,313.5 L719,315.7 L720.6,317.9 L722.2,320.1 L723.9,322.3 L725.6,324.5 L727.4,326.8 L729.2,329 L731.1,331.2 L732.9,333.4 L734.9,335.6 L736.8,337.7 M685.8,269.1 L685.5,270.9 L685.2,272.6 L685,274.4 L684.7,276.1 L684.4,277.8 L684.2,279.6 L683.9,281.3 L683.7,283 L683.4,284.8 L683.2,286.5 L683,288.2 L682.7,289.9 L682.5,291.6 L682.3,293.3 L682.1,295 L681.9,296.6 L681.7,298.3 L681.5,300 L681.3,301.6 L681.1,303.3 L681,305 L680.8,306.6 L680.6,308.2 L680.5,309.9 L680.3,311.5 L680.2,313.1 L680,314.7 L679.9,316.3 L679.8,317.9 L679.6,319.5 L679.5,321.1 L679.4,322.7 L679.3,324.3 L679.2,325.9 L679.1,327.4 L679,329 L678.9,330.5 L678.8,332.1 L678.7,333.6 L678.7,335.1 M687,262 L688.7,262.3 L690.3,262.7 L692,263.1 L693.6,263.5 L695.2,264.1 L696.9,264.6 L698.5,265.3 L700.1,266 L701.7,266.7 L703.3,267.5 L704.8,268.3 L706.4,269.2 L707.9,270.2 L709.5,271.2 L711,272.2 L712.5,273.3 L714,274.5 L715.4,275.7 L716.9,276.9 L718.3,278.2 L719.7,279.5 L721.1,280.9 L722.5,282.3 L723.8,283.8 L725.1,285.3 L726.4,286.8 L727.7,288.4 L728.9,290 L730.2,291.7 L731.4,293.4 L732.5,295.1 L733.7,296.8 L734.8,298.6 L735.9,300.4 L736.9,302.3 L737.9,304.1 L738.9,306 L739.9,307.9 L740.9,309.9 L741.8,311.8 L742.6,313.8 L743.5,315.8 L744.3,317.8 L745.1,319.9 L745.8,321.9 L746.6,324 L747.2,326 M686,255.8 L685.7,254.3 L685.4,252.9 L685,251.5 L684.6,250.2 L684.2,248.9 L683.8,247.7 L683.3,246.5 L682.8,245.3 L682.3,244.2 L681.8,243.2 L681.3,242.2 L680.7,241.2 L680.2,240.3 L679.6,239.5 L679,238.7 L678.4,238 L677.8,237.3 L677.1,236.7 L676.5,236.2 L675.8,235.7 L675.2,235.2 L674.5,234.8 L673.8,234.5 L673.1,234.2 L672.4,234 L671.8,233.9 L671.1,233.8 L670.4,233.8 L669.7,233.8 L669,233.9 L668.3,234.1 L667.6,234.3 L666.9,234.6 L666.2,234.9 L665.5,235.3 L664.9,235.7 L664.2,236.2 L663.5,236.8 L662.9,237.4 L662.2,238.1 L661.6,238.9 L661,239.7 L660.4,240.5 L659.8,241.4 M692.3,259 L693.6,258.2 L694.9,257.4 L696.2,256.5 L697.5,255.6 L698.8,254.7 L700,253.7 L701.3,252.7 L702.6,251.7 L703.8,250.7 L705,249.6 L706.2,248.5 L707.5,247.4 L708.7,246.2 L709.8,245 L711,243.8 L712.2,242.6 L713.3,241.3 L714.5,240.1 L715.6,238.7 L716.7,237.4 L717.8,236 L718.9,234.7 L720,233.3 L721.1,231.8 L722.1,230.4 L723.1,228.9 L724.2,227.4 L725.2,225.9 L726.2,224.4 L727.2,222.8 L728.1,221.2 L729.1,219.6 L730,218 L730.9,216.3 L731.8,214.7 L732.7,213 L733.6,211.3 L734.5,209.6 L735.3,207.9 L736.1,206.1 L736.9,204.4 M687,262 L687.2,264 L687.5,266 L687.8,268.1 L688.2,270.2 L688.7,272.3 L689.2,274.4 L689.8,276.5 L690.5,278.6 L691.2,280.7 L692,282.8 L692.9,284.8 L693.8,286.8 L694.8,288.8 L695.9,290.8 L697,292.7 L698.2,294.5 L699.4,296.3 L700.7,298 L702.1,299.6 L703.5,301.2 L704.9,302.7 L706.4,304.1 L708,305.4 L709.5,306.6 L711.2,307.7 L712.8,308.7 L714.5,309.6 L716.2,310.4 L717.9,311.1 L719.6,311.6 L721.4,312.1 L723.2,312.4 L724.9,312.7 L726.7,312.8 L728.5,312.8 L730.3,312.6 L732,312.4 L733.8,312.1 L735.5,311.6 L737.2,311 L738.9,310.3 L740.6,309.5 L742.3,308.6 L743.9,307.6 L745.4,306.5 L747,305.3 L748.5,304 L749.9,302.7 L751.3,301.2 L752.6,299.7 L753.9,298.1 L755.2,296.4 L756.3,294.7 L757.5,292.9 L758.5,291.1 L759.5,289.2 L760.4,287.3 L761.3,285.4 L762.1,283.4 L762.8,281.4 L763.5,279.4 L764.1,277.4 L764.6,275.5 L765.1,273.5 L765.5,271.5 L765.8,269.6 L766.1,267.7 L766.3,265.8 L766.4,263.9 L766.5,262.1 M683.4,264.9 L682.6,265.7 L681.7,266.6 L680.9,267.5 L680.1,268.5 L679.3,269.6 L678.5,270.6 L677.7,271.7 L676.9,272.9 L676.2,274.1 L675.5,275.4 L674.8,276.7 L674.1,278 L673.4,279.4 L672.7,280.8 L672.1,282.2 L671.5,283.7 L670.9,285.2 L670.4,286.8 L669.8,288.4 L669.3,290 L668.8,291.6 L668.4,293.3 L667.9,295 L667.5,296.8 L667.1,298.6 L666.7,300.4 L666.4,302.2 L666.1,304 L665.8,305.9 L665.5,307.8 L665.3,309.7 L665.1,311.7 L664.9,313.6 L664.8,315.6 L664.7,317.6 L664.6,319.6 L664.5,321.6 L664.5,323.6 L664.5,325.6 L664.5,327.7 L664.6,329.7 L664.7,331.8 L664.8,333.9 M688.8,254.7 L689.4,253 L689.9,251.2 L690.5,249.6 L691.2,247.9 L691.8,246.3 L692.5,244.8 L693.2,243.3 L694,241.8 L694.7,240.4 L695.5,239 L696.4,237.6 L697.2,236.4 L698.1,235.1 L698.9,234 L699.8,232.8 L700.8,231.8 L701.7,230.7 L702.7,229.8 L703.6,228.9 L704.6,228 L705.6,227.2 L706.7,226.5 L707.7,225.8 L708.7,225.2 L709.8,224.7 L710.9,224.2 L711.9,223.8 L713,223.4 L714.1,223.1 L715.2,222.9 L716.3,222.7 L717.4,222.6 L718.5,222.5 L719.6,222.5 L720.7,222.6 L721.7,222.8 L722.8,223 L723.9,223.3 L725,223.6 L726.1,224 L727.1,224.4 L728.2,225 L729.2,225.5 L730.3,226.2 L731.3,226.9 M687,262 L688.6,261.9 L690.1,261.7 L691.7,261.4 L693.2,261.1 L694.7,260.6 L696.2,260 L697.7,259.3 L699.2,258.5 L700.6,257.6 L702,256.6 L703.4,255.6 L704.7,254.4 L706.1,253.2 L707.3,251.8 L708.5,250.4 L709.7,249 L710.9,247.4 L711.9,245.8 L713,244.2 L714,242.4 L714.9,240.7 L715.8,238.8 L716.6,237 L717.4,235.1 L718.1,233.1 L718.7,231.2 L719.3,229.2 L719.9,227.2 L720.3,225.2 L720.7,223.2 L721.1,221.2 L721.4,219.2 L721.6,217.2 L721.8,215.2 L721.9,213.2 L721.9,211.3 L721.9,209.4 L721.9,207.5 L721.7,205.7 L721.6,203.9 L721.3,202.2 L721,200.5 L720.7,198.9 L720.3,197.4 L719.9,195.9 L719.4,194.5 L718.9,193.1 L718.4,191.9 L717.8,190.7 L717.2,189.7 L716.5,188.7 L715.8,187.8 L715.1,187 L714.4,186.3 L713.6,185.7 L712.9,185.2 L712.1,184.8 L711.3,184.5 L710.5,184.3 L709.7,184.2 L708.9,184.2 L708.1,184.3 L707.2,184.5 L706.4,184.9 L705.7,185.3 L704.9,185.8 L704.1,186.5 L703.4,187.2 L702.7,188 L702,189 L701.3,190 L700.7,191.1 L700.1,192.3 L699.5,193.6 L699,195 L698.5,196.4 L698,197.9 M682.3,256.5 L681.2,255 L680.1,253.5 L679.1,252 L678,250.4 L677,248.8 L676,247.1 L675,245.5 L674.1,243.7 L673.1,242 L672.2,240.2 L671.4,238.5 L670.5,236.6 L669.7,234.8 L668.9,232.9 L668.1,231 L667.4,229.1 L666.7,227.2 L666,225.2 L665.3,223.3 L664.7,221.3 L664.1,219.3 L663.6,217.3 L663,215.2 L662.5,213.2 L662,211.2 L661.6,209.1 L661.2,207 L660.8,205 L660.4,202.9 L660.1,200.8 L659.8,198.7 L659.5,196.7 L659.3,194.6 L659.1,192.5 L658.9,190.4 L658.8,188.4 L658.7,186.3 L658.6,184.2 L658.5,182.2 L658.5,180.2 L658.5,178.1 L658.6,176.1 L658.6,174.1 M691.1,270.5 L692.2,272.7 L693.2,274.8 L694.3,277 L695.4,279.1 L696.4,281.3 L697.5,283.4 L698.6,285.6 L699.7,287.7 L700.8,289.9 L701.9,292 L703,294.2 L704.1,296.4 L705.3,298.5 L706.4,300.7 L707.5,302.8 L708.7,305 L709.8,307.2 L711,309.3 L712.1,311.5 L713.3,313.7 L714.5,315.9 L715.7,318 L716.9,320.2 L718.1,322.4 L719.3,324.6 L720.5,326.7 L721.7,328.9 L722.9,331.1 L724.1,333.3 L725.4,335.4 L726.6,337.6 L727.9,339.8 L729.1,342 L730.4,344.1 L731.6,346.3 L732.9,348.5 L734.2,350.7 L735.5,352.8 L736.8,355 L738.1,357.2 M687,262 L685.7,261.9 L684.3,261.9 L683,262 L681.6,262.1 L680.3,262.3 L678.9,262.5 L677.6,262.8 L676.3,263.1 L674.9,263.5 L673.6,263.9 L672.3,264.4 L671,265 L669.7,265.6 L668.5,266.3 L667.2,267 L665.9,267.8 L664.7,268.6 L663.5,269.4 L662.2,270.4 L661,271.3 L659.9,272.4 L658.7,273.4 L657.5,274.6 L656.4,275.7 L655.3,277 L654.2,278.2 L653.1,279.5 L652.1,280.9 L651.1,282.3 L650.1,283.7 L649.1,285.2 L648.1,286.7 L647.2,288.2 L646.3,289.8 L645.4,291.4 L644.6,293.1 L643.8,294.7 L643,296.5 L642.2,298.2 L641.4,300 L640.7,301.8 L640,303.6 L639.4,305.4 L638.8,307.3 L638.2,309.2 L637.6,311.1 L637.1,313.1 L636.6,315 M693.7,270.3 L695.2,272.4 L696.7,274.5 L698.2,276.7 L699.7,278.9 L701.1,281 L702.5,283.2 L703.8,285.4 L705.1,287.6 L706.3,289.7 L707.5,291.9 L708.7,294.1 L709.8,296.2 L710.9,298.4 L711.9,300.5 L712.9,302.6 L713.9,304.7 L714.8,306.8 L715.7,308.9 L716.6,310.9 L717.4,312.9 L718.1,314.9 L718.9,316.8 L719.6,318.8 L720.3,320.6 L720.9,322.5 L721.5,324.3 L722.1,326 L722.6,327.8 L723.1,329.4 L723.6,331.1 L724,332.6 L724.4,334.2 L724.8,335.6 L725.2,337 L725.5,338.4 M688.6,267.6 L688.9,269.2 L689.1,270.9 L689.3,272.6 L689.4,274.3 L689.5,276.2 L689.5,278 L689.4,279.9 L689.3,281.9 L689.1,283.8 L688.9,285.8 L688.6,287.8 L688.2,289.8 L687.8,291.8 L687.2,293.8 L686.7,295.8 L686,297.8 L685.3,299.8 L684.6,301.7 L683.7,303.6 L682.8,305.4 L681.9,307.2 L680.9,309 L679.8,310.7 L678.7,312.3 L677.5,313.9 L676.3,315.4 L675,316.8 L673.7,318.1 L672.4,319.4 L671,320.6 L669.6,321.6 L668.1,322.6 L666.6,323.5 L665.1,324.2 L663.5,324.9 L661.9,325.5 L660.4,325.9 L658.8,326.3 L657.1,326.5 L655.5,326.6 L653.9,326.6 L652.3,326.5 L650.7,326.3 L649.1,326 L647.5,325.5 L645.9,325 L644.3,324.3 L642.8,323.5 L641.2,322.7 L639.8,321.7 L638.3,320.6 L636.9,319.4 L635.5,318.2 L634.1,316.8 L632.8,315.4 L631.6,313.9 L630.4,312.3 L629.2,310.6 L628.1,308.9 L627,307.1 L626,305.3 L625.1,303.4 L624.2,301.4 L623.4,299.4 L622.6,297.4 L621.9,295.4 L621.3,293.3 L620.7,291.2 M687,262 L687,262.4 L687,263 L687,263.5 L687,264.2 L686.9,264.9 L686.9,265.7 L686.8,266.5 L686.7,267.5 L686.5,268.4 L686.4,269.5 L686.2,270.6 L686,271.8 L685.8,273 L685.5,274.2 L685.3,275.6 L684.9,277 L684.6,278.4 L684.2,279.9 L683.8,281.4 L683.3,283 L682.9,284.6 L682.3,286.2 L681.8,287.9 L681.2,289.6 L680.5,291.4 L679.9,293.2 L679.2,295 L678.4,296.8 L677.6,298.7 L676.8,300.5 L675.9,302.4 L675,304.3 L674,306.3 L673,308.2 L671.9,310.1 L670.8,312.1 L669.7,314 L668.5,315.9 L667.3,317.9 L666,319.8 L664.7,321.7 L663.4,323.6 L662,325.5 L660.6,327.4 L659.1,329.2 L657.6,331.1 L656,332.9 L654.4,334.7 L652.8,336.4 L651.1,338.1 L649.4,339.8 M682.2,267.4 L681,268.6 L679.7,269.8 L678.4,271 L677.1,272.1 L675.8,273.1 L674.4,274.1 L673.1,275 L671.7,275.9 L670.3,276.8 L668.9,277.6 L667.5,278.3 L666,279 L664.6,279.6 L663.1,280.2 L661.7,280.7 L660.2,281.2 L658.7,281.6 L657.2,281.9 L655.8,282.2 L654.3,282.5 L652.8,282.6 L651.3,282.8 L649.8,282.8 L648.2,282.8 L646.7,282.8 L645.2,282.7 L643.7,282.5 L642.2,282.3 L640.7,282 L639.2,281.6 L637.8,281.2 L636.3,280.8 L634.8,280.3 L633.3,279.7 L631.9,279.1 L630.4,278.4 L629,277.7 L627.6,276.9 L626.2,276 L624.8,275.1 L623.4,274.2 L622,273.2 L620.7,272.1 L619.4,271.1 M688.2,258.6 L688.5,257.9 L688.9,257.2 L689.2,256.5 L689.5,255.9 L689.9,255.3 L690.2,254.7 L690.6,254.1 L691,253.6 L691.3,253.2 L691.7,252.8 L692.1,252.4 L692.5,252 L692.8,251.7 L693.2,251.4 L693.6,251.2 L694,251 L694.4,250.8 L694.8,250.7 L695.2,250.6 L695.5,250.5 L695.9,250.5 L696.3,250.5 L696.7,250.6 L697.1,250.7 L697.5,250.8 L697.9,251 M687,262 L687.3,264.1 L687.5,266.1 L687.7,268.2 L687.8,270.3 L688,272.4 L688,274.4 L688.1,276.5 L688.1,278.5 L688.1,280.6 L688.1,282.6 L688,284.6 L687.9,286.6 L687.8,288.6 L687.6,290.5 L687.4,292.5 L687.2,294.4 L687,296.3 L686.7,298.2 L686.4,300 L686,301.9 L685.7,303.7 L685.3,305.4 L684.9,307.2 L684.4,308.9 L683.9,310.6 L683.4,312.2 L682.9,313.8 L682.3,315.4 L681.8,317 L681.2,318.5 L680.5,319.9 L679.9,321.3 L679.2,322.7 L678.5,324 L677.8,325.3 L677.1,326.6 L676.3,327.8 L675.6,328.9 L674.8,330 L674,331.1 L673.2,332.1 L672.3,333.1 L671.5,334 L670.6,334.8 L669.8,335.6 L668.9,336.4 L668,337.1 M690.5,270 L691.3,271.9 L692.1,273.9 L692.9,275.8 L693.7,277.7 L694.5,279.6 L695.2,281.5 L696,283.4 L696.7,285.3 L697.4,287.1 L698.1,289 L698.8,290.8 L699.5,292.6 L700.2,294.4 L700.9,296.2 L701.5,297.9 L702.1,299.7 L702.8,301.4 L703.4,303.1 L704,304.8 L704.6,306.5 L705.1,308.1 L705.7,309.8 L706.3,311.4 L706.8,313 L707.3,314.6 L707.8,316.2 L708.4,317.7 L708.9,319.2 L709.3,320.7 L709.8,322.2 L710.3,323.7 L710.8,325.1 L711.2,326.6 L711.6,328 L712.1,329.4 L712.5,330.7 L712.9,332.1 L713.3,333.4 L713.7,334.7 L714.1,336 L714.5,337.2 M690.3,255.8 L691.2,254.4 L692.1,253 L693.1,251.6 L694,250.4 L695,249.1 L696,248 L697.1,246.8 L698.1,245.8 L699.2,244.8 L700.3,243.8 L701.5,242.9 L702.6,242.1 L703.7,241.4 L704.9,240.7 L706.1,240 L707.3,239.5 L708.5,239 L709.7,238.5 L710.9,238.2 L712.1,237.9 L713.3,237.6 L714.6,237.5 L715.8,237.4 L717,237.3 L718.3,237.4 L719.5,237.5 L720.7,237.6 L722,237.9 L723.2,238.2 L724.4,238.6 L725.6,239 L726.8,239.5 L728,240.1 L729.2,240.7 L730.4,241.4 L731.5,242.2 L732.6,243 L733.8,243.9 L734.9,244.8 L736,245.8 L737,246.9 L738.1,248 L739.1,249.2 L740.1,250.4 L741.1,251.7 M687,262 L687.4,262 L687.8,261.9 L688.3,261.9 L688.7,261.8 L689.1,261.7 L689.5,261.5 L690,261.4 L690.4,261.3 L690.8,261.1 L691.3,260.9 L691.7,260.7 L692.1,260.5 L692.6,260.3 L693,260 L693.4,259.7 L693.9,259.5 L694.3,259.2 L694.8,258.8 L695.2,258.5 L695.7,258.2 L696.1,257.8 L696.6,257.4 L697.1,257 L697.5,256.6 L698,256.2 L698.5,255.7 L698.9,255.3 L699.4,254.8 L699.9,254.3 L700.4,253.8 L700.8,253.2 L701.3,252.7 L701.8,252.1 L702.3,251.6 L702.8,251 L703.3,250.4 L703.8,249.7 L704.3,249.1 L704.8,248.4 L705.4,247.8 L705.9,247.1 L706.4,246.4 L706.9,245.7 L707.5,244.9 M682.8,253.6 L681.9,251.4 L681.1,249.3 L680.3,247.2 L679.6,245 L678.9,242.9 L678.3,240.8 L677.8,238.8 L677.3,236.7 L676.9,234.7 L676.5,232.8 L676.2,230.9 L675.9,229 L675.7,227.2 L675.5,225.4 L675.4,223.7 L675.3,222.1 L675.3,220.5 L675.3,219 L675.3,217.6 L675.4,216.2 L675.5,214.9 L675.7,213.8 L675.8,212.7 L676,211.7 L676.3,210.8 L676.5,209.9 L676.8,209.2 L677.1,208.6 L677.4,208.1 L677.7,207.7 L678,207.3 L678.4,207.1 L678.7,207 L679,207 L679.4,207.1 L679.7,207.2 L680,207.5 L680.3,207.9 L680.6,208.4 L680.9,209 L681.1,209.6 L681.3,210.4 L681.5,211.3 L681.7,212.2 L681.8,213.3 L682,214.4 L682,215.6 L682.1,216.9 L682.1,218.2 L682,219.6 L681.9,221.1 L681.8,222.7 L681.6,224.3 L681.3,226 L681.1,227.7 L680.7,229.4 L680.3,231.2 L679.9,233.1 L679.4,235 L678.8,236.9 L678.2,238.8 L677.5,240.7 L676.8,242.7 L676,244.7 L675.1,246.6 L674.2,248.6 L673.2,250.6 L672.2,252.5 L671.1,254.4 L670,256.3 L668.8,258.2 L667.5,260.1 L666.2,261.9 L664.8,263.6 L663.4,265.4 L662,267 M691.2,258.4 L692.3,257.7 L693.4,257 L694.6,256.5 L695.7,256 L696.9,255.7 L698,255.4 L699.2,255.2 L700.4,255 L701.5,255 L702.7,255 L703.9,255.2 L705.1,255.4 L706.2,255.7 L707.4,256.1 L708.5,256.5 L709.6,257.1 L710.8,257.7 L711.9,258.4 L712.9,259.2 L714,260.1 L715,261 L716.1,262.1 L717.1,263.2 L718,264.3 L719,265.6 L719.9,266.9 L720.7,268.2 L721.6,269.7 L722.4,271.2 L723.1,272.7 L723.9,274.3 L724.6,276 L725.2,277.7 L725.8,279.4 L726.4,281.2 L726.9,283 L727.4,284.9 L727.8,286.8 L728.2,288.7 L728.5,290.7 L728.8,292.7 L729.1,294.7 L729.2,296.7 L729.4,298.7 L729.5,300.8 L729.5,302.8 L729.5,304.9 L729.5,306.9 L729.4,309 L729.2,311 M687,262 L685.9,261.4 L684.8,260.7 L683.7,260 L682.6,259.3 L681.5,258.6 L680.4,257.9 L679.3,257.2 L678.2,256.5 L677.1,255.7 L676,254.9 L674.9,254.2 L673.8,253.4 L672.8,252.6 L671.7,251.7 L670.6,250.9 L669.6,250.1 L668.5,249.2 L667.4,248.3 L666.4,247.5 L665.3,246.6 L664.3,245.7 L663.2,244.7 L662.2,243.8 L661.2,242.9 L660.1,241.9 L659.1,240.9 L658.1,239.9 L657,239 L656,237.9 L655,236.9 L654,235.9 L653,234.8 L652,233.8 L651,232.7 L650,231.6 L649,230.5 L648,229.4 L647.1,228.3 L646.1,227.2 L645.1,226.1 L644.1,224.9 L643.2,223.7 L642.2,222.6 L641.3,221.4 M684.9,263.6 L684.4,264.1 L683.9,264.5 L683.4,265 L682.8,265.5 L682.3,266 L681.8,266.5 L681.3,267.1 L680.8,267.6 L680.3,268.2 L679.8,268.8 L679.3,269.4 L678.8,270 L678.3,270.6 L677.8,271.3 L677.4,271.9 L676.9,272.6 L676.4,273.3 L675.9,274 L675.4,274.7 L675,275.5 L674.5,276.2 L674,277 L673.6,277.8 L673.1,278.6 L672.6,279.4 L672.2,280.2 L671.7,281 L671.3,281.9 L670.9,282.8 L670.4,283.7 L670,284.6 L669.5,285.5 L669.1,286.4 L668.7,287.4 L668.3,288.3 M690.5,254.2 L691.2,252.2 L691.8,250.3 L692.4,248.4 L692.9,246.5 L693.3,244.7 L693.7,242.9 L694,241.2 L694.3,239.5 L694.5,237.9 L694.6,236.3 L694.7,234.8 L694.8,233.5 L694.8,232.1 L694.7,230.9 L694.6,229.8 L694.5,228.7 L694.3,227.8 L694.1,227 L693.9,226.2 L693.7,225.6 L693.4,225.1 L693.1,224.7 L692.8,224.4 L692.5,224.3 L692.2,224.2 L691.8,224.3 L691.5,224.5 L691.2,224.8 L690.9,225.2 L690.6,225.7 L690.3,226.4 L690.1,227.1 L689.8,228 L689.6,228.9 L689.5,230 L689.3,231.2 L689.2,232.5 L689.1,233.8 L689.1,235.3 L689.2,236.8 L689.2,238.4 L689.4,240.1 L689.5,241.9 L689.8,243.7 L690.1,245.6 L690.4,247.5 L690.9,249.5 L691.3,251.5 L691.9,253.6 L692.5,255.7 L693.2,257.8 L693.9,259.9 L694.7,262.1 L695.6,264.2 L696.6,266.3 L697.6,268.5 L698.7,270.6 L699.8,272.6 L701,274.7 L702.3,276.7 L703.6,278.7 L705,280.6 L706.5,282.5 L708,284.3 L709.6,286 L711.2,287.6 M687,262 L685.5,260.8 L684,259.7 L682.5,258.5 L681,257.4 L679.5,256.3 L678,255.3 L676.5,254.3 L674.9,253.3 L673.4,252.3 L671.8,251.4 L670.3,250.5 L668.7,249.6 L667.1,248.7 L665.5,247.9 L663.9,247.1 L662.3,246.4 L660.7,245.6 L659.1,244.9 L657.5,244.3 L655.9,243.6 L654.2,243 L652.6,242.4 L651,241.9 L649.3,241.3 L647.7,240.9 L646,240.4 L644.4,240 L642.7,239.6 L641.1,239.2 L639.4,238.9 L637.7,238.6 L636.1,238.3 L634.4,238.1 L632.7,237.8 L631.1,237.7 L629.4,237.5 L627.7,237.4 L626,237.3 L624.4,237.3 L622.7,237.3 L621,237.3 L619.3,237.3 L617.7,237.4 L616,237.5 L614.3,237.6" fill="none" stroke="#b030b0" stroke-width="1" opacity="0.42"/>
<path d="M700,292 C730,318 760,330 809,304 M705,300 C735,330 770,345 817,320 M712,318 C740,345 770,355 799,341 M690,170 V240 M695,168 V245 M745,185 L735,215 M628,252 H660" fill="none" stroke="#e030e0" stroke-width="1.1" opacity="0.9"/>
</svg></div><!--/gl1-->
  <!-- horizontal splitter 1 -->
  <div class="a" style="left:597px;top:418px;width:88px;height:1px;background:repeating-linear-gradient(90deg,#8a8a8a 0 1px,transparent 1px 3px)"></div>
  <svg class="a" style="left:586px;top:415px" width="8" height="6" viewBox="0 0 8 6"><path d="M1,1 L4,4.5 L7,1" fill="none" stroke="#000" stroke-width="1.6"/></svg>
  <svg class="a" style="left:686px;top:415px" width="8" height="6" viewBox="0 0 8 6"><path d="M1,1 L4,4.5 L7,1" fill="none" stroke="#000" stroke-width="1.6"/></svg>
  <!-- lower-left GL frame -->
  <div class="a" style="left:261px;top:421px;width:266px;height:242px;border-top:1px solid #8c8c8c;border-left:1px solid #8c8c8c;border-bottom:1px solid #fff;border-right:1px solid #fff"></div>
  <div class="a" style="left:262px;top:422px;width:264px;height:240px;border:1px solid #fff"></div>
  <div class="a blk" id="gl2" style="left:264px;top:424px;width:260px;height:235px;overflow:hidden"><div class="a btn" style="left:10px;top:8px;width:56px;height:17px">Swap</div><div class="a btn" style="left:70px;top:8px;width:56px;height:17px">Undock</div><svg width="260" height="235" viewBox="320 456 260 235" style="position:absolute;left:0;top:0">
<g stroke="#4c4c4c" stroke-width="1" fill="none">
<path d="M323.5,662 h2.5 M579.5,662 h-2.5 M323.5,658.5 h2.5 M579.5,658.5 h-2.5 M323.5,654.9 h2.5 M579.5,654.9 h-2.5 M323.5,651.4 h2.5 M579.5,651.4 h-2.5 M323.5,647.8 h2.5 M579.5,647.8 h-2.5 M323.5,644.2 h2.5 M579.5,644.2 h-2.5 M323.5,640.7 h4.5 M579.5,640.7 h-4.5 M323.5,637.2 h2.5 M579.5,637.2 h-2.5 M323.5,633.6 h2.5 M579.5,633.6 h-2.5 M323.5,630.1 h2.5 M579.5,630.1 h-2.5 M323.5,626.5 h2.5 M579.5,626.5 h-2.5 M323.5,623 h2.5 M579.5,623 h-2.5 M323.5,619.4 h2.5 M579.5,619.4 h-2.5 M323.5,615.9 h2.5 M579.5,615.9 h-2.5 M323.5,612.3 h2.5 M579.5,612.3 h-2.5 M323.5,608.8 h2.5 M579.5,608.8 h-2.5 M323.5,605.2 h4.5 M579.5,605.2 h-4.5 M323.5,601.7 h2.5 M579.5,601.7 h-2.5 M323.5,598.1 h2.5 M579.5,598.1 h-2.5 M323.5,594.6 h2.5 M579.5,594.6 h-2.5 M323.5,591 h2.5 M579.5,591 h-2.5 M323.5,587.5 h2.5 M579.5,587.5 h-2.5 M323.5,583.9 h2.5 M579.5,583.9 h-2.5 M323.5,580.4 h2.5 M579.5,580.4 h-2.5 M323.5,576.8 h2.5 M579.5,576.8 h-2.5 M323.5,573.2 h2.5 M579.5,573.2 h-2.5 M323.5,569.7 h4.5 M579.5,569.7 h-4.5 M323.5,566.2 h2.5 M579.5,566.2 h-2.5 M323.5,562.6 h2.5 M579.5,562.6 h-2.5 M323.5,559.1 h2.5 M579.5,559.1 h-2.5 M323.5,555.5 h2.5 M579.5,555.5 h-2.5 M323.5,552 h2.5 M579.5,552 h-2.5 M323.5,548.4 h2.5 M579.5,548.4 h-2.5 M323.5,544.9 h2.5 M579.5,544.9 h-2.5 M323.5,541.3 h2.5 M579.5,541.3 h-2.5 M323.5,537.8 h2.5 M579.5,537.8 h-2.5 M323.5,534.2 h4.5 M579.5,534.2 h-4.5 M323.5,530.7 h2.5 M579.5,530.7 h-2.5 M323.5,527.1 h2.5 M579.5,527.1 h-2.5 M323.5,523.6 h2.5 M579.5,523.6 h-2.5 M323.5,520 h2.5 M579.5,520 h-2.5 M323.5,516.5 h2.5 M579.5,516.5 h-2.5 M323.5,512.9 h2.5 M579.5,512.9 h-2.5 M323.5,509.4 h2.5 M579.5,509.4 h-2.5 M323.5,505.8 h2.5 M579.5,505.8 h-2.5 M323.5,502.3 h2.5 M579.5,502.3 h-2.5 M323.5,498.7 h4.5 M579.5,498.7 h-4.5 M323.5,495.2 h2.5 M579.5,495.2 h-2.5 M323.5,491.6 h2.5 M579.5,491.6 h-2.5 M323.5,488.1 h2.5 M579.5,488.1 h-2.5 M323.5,484.5 h2.5 M579.5,484.5 h-2.5 M323.5,481 h2.5 M579.5,481 h-2.5 M323.5,477.4 h2.5 M579.5,477.4 h-2.5 M349.5,687.5 v-2.5 M353.1,687.5 v-2.5 M356.6,687.5 v-2.5 M360.2,687.5 v-2.5 M363.8,687.5 v-2.5 M367.3,687.5 v-2.5 M370.8,687.5 v-2.5 M374.4,687.5 v-4.5 M374.4,456 v4.5 M377.9,687.5 v-2.5 M381.5,687.5 v-2.5 M385,687.5 v-2.5 M388.6,687.5 v-2.5 M392.1,687.5 v-2.5 M395.7,687.5 v-2.5 M399.2,687.5 v-2.5 M402.8,687.5 v-2.5 M406.3,687.5 v-2.5 M409.9,687.5 v-4.5 M409.9,456 v4.5 M413.4,687.5 v-2.5 M417,687.5 v-2.5 M420.5,687.5 v-2.5 M424.1,687.5 v-2.5 M427.6,687.5 v-2.5 M431.2,687.5 v-2.5 M434.8,687.5 v-2.5 M438.3,687.5 v-2.5 M441.8,687.5 v-2.5 M445.4,687.5 v-4.5 M445.4,456 v4.5 M448.9,687.5 v-2.5 M452.5,687.5 v-2.5 M456,687.5 v-2.5 M459.6,687.5 v-2.5 M463.1,687.5 v-2.5 M466.7,687.5 v-2.5 M470.2,687.5 v-2.5 M473.8,687.5 v-2.5 M477.3,687.5 v-2.5 M480.9,687.5 v-4.5 M480.9,456 v4.5 M484.4,687.5 v-2.5 M488,687.5 v-2.5 M491.5,687.5 v-2.5 M495.1,687.5 v-2.5 M498.6,687.5 v-2.5 M502.2,687.5 v-2.5 M505.8,687.5 v-2.5 M509.3,687.5 v-2.5 M512.9,687.5 v-2.5 M516.4,687.5 v-4.5 M516.4,456 v4.5 M519.9,687.5 v-2.5 M523.5,687.5 v-2.5 M527,687.5 v-2.5 M530.6,687.5 v-2.5 M534.1,687.5 v-2.5 M537.7,687.5 v-2.5 M541.2,687.5 v-2.5 M544.8,687.5 v-2.5 M548.3,687.5 v-2.5 M551.9,687.5 v-4.5 M551.9,456 v4.5 M555.4,687.5 v-2.5"/>
<path d="M349.5,456 v2.5 M353.1,456 v2.5 M356.6,456 v2.5 M360.2,456 v2.5 M363.8,456 v2.5 M367.3,456 v2.5 M370.8,456 v2.5 M377.9,456 v2.5 M381.5,456 v2.5 M385,456 v2.5 M388.6,456 v2.5 M392.1,456 v2.5 M395.7,456 v2.5 M399.2,456 v2.5 M402.8,456 v2.5 M406.3,456 v2.5 M413.4,456 v2.5 M417,456 v2.5 M420.5,456 v2.5 M424.1,456 v2.5 M427.6,456 v2.5 M431.2,456 v2.5 M434.8,456 v2.5 M438.3,456 v2.5 M441.8,456 v2.5 M448.9,456 v2.5 M452.5,456 v2.5 M456,456 v2.5 M459.6,456 v2.5 M463.1,456 v2.5 M466.7,456 v2.5 M470.2,456 v2.5 M473.8,456 v2.5 M477.3,456 v2.5 M484.4,456 v2.5 M488,456 v2.5 M491.5,456 v2.5 M495.1,456 v2.5 M498.6,456 v2.5 M502.2,456 v2.5 M505.8,456 v2.5 M509.3,456 v2.5 M512.9,456 v2.5 M519.9,456 v2.5 M523.5,456 v2.5 M527,456 v2.5 M530.6,456 v2.5 M534.1,456 v2.5 M537.7,456 v2.5 M541.2,456 v2.5 M544.8,456 v2.5 M548.3,456 v2.5 M555.4,456 v2.5" stroke="#2e2e2e"/>
<path d="M323.5,477 V665 M347,687.5 H556 M579.5,477 V665"/>
</g>
<g font-family="Liberation Sans" font-size="9.7" fill="#525252" stroke="#525252" stroke-width="0.3">
<text x="374.4" y="469.5" text-anchor="middle">-400</text>
<text x="374.4" y="679.7" text-anchor="middle">-400</text>
<text x="409.9" y="469.5" text-anchor="middle">-200</text>
<text x="409.9" y="679.7" text-anchor="middle">-200</text>
<text x="445.4" y="469.5" text-anchor="middle">0</text>
<text x="445.4" y="679.7" text-anchor="middle">0</text>
<text x="480.9" y="469.5" text-anchor="middle">200</text>
<text x="480.9" y="679.7" text-anchor="middle">200</text>
<text x="516.4" y="469.5" text-anchor="middle">400</text>
<text x="516.4" y="679.7" text-anchor="middle">400</text>
<text x="551.9" y="469.5" text-anchor="middle">600</text>
<text x="551.9" y="679.7" text-anchor="middle">600</text>
<text x="331" y="644.2">-400</text>
<text x="573.4" y="644.2" text-anchor="end">-400</text>
<text x="331" y="608.7">-200</text>
<text x="573.4" y="608.7" text-anchor="end">-200</text>
<text x="331" y="573.2">0</text>
<text x="573.4" y="573.2" text-anchor="end">0</text>
<text x="331" y="537.7">200</text>
<text x="573.4" y="537.7" text-anchor="end">200</text>
<text x="331" y="502.2">400</text>
<text x="573.4" y="502.2" text-anchor="end">400</text>
</g>
<rect x="400" y="524.3" width="90.8" height="31" fill="#2e4446"/>
<rect x="400" y="584.1" width="90.8" height="30.4" fill="#2e4446"/>
<path d="M445.3,584 V615" stroke="#000" stroke-width="1"/>
<path d="M383.7,496.1 H507 M383.7,643.3 H507" stroke="#5e1a20" stroke-width="3"/>
<path d="M402.8,491.7 L430.3,482.2 H460.4 L487.9,491.7" fill="none" stroke="#4353d9" stroke-width="3"/>
<path d="M430.3,482.2 H460.4" stroke="#000" stroke-width="0.6"/>
<rect x="432" y="650" width="27.1" height="12.3" fill="#fdc61f"/>
<path d="M445.4,569.7 L446.1,568.3 L446.8,566.9 L447.5,565.4 L448.2,564 L448.9,562.6 L449.6,561.2 L450.3,559.8 L451,558.4 L451.7,557 L452.4,555.6 L453.1,554.2 L453.8,552.8 L454.5,551.4 L455.2,550 L455.9,548.6 L456.6,547.3 L457.3,545.9 L458,544.5 L458.7,543.2 L459.3,541.8 L460,540.5 L460.7,539.2 L461.4,537.9 L462.1,536.5 L462.8,535.2 L463.5,534 L464.2,532.7 L464.9,531.4 L465.6,530.2 L466.3,528.9 L467,527.7 L467.7,526.4 L468.4,525.2 L469.1,524 L469.8,522.9 L470.5,521.7 L471.2,520.5 L471.9,519.4 L472.6,518.3 L473.3,517.1 L474,516 L474.7,515 L475.4,513.9 L476.1,512.8 L476.8,511.8 L477.5,510.8 L478.2,509.8 L478.9,508.8 L479.6,507.8 L480.3,506.9 M445.4,569.7 L446.4,571.1 L447.3,572.5 L448.3,574 L449.3,575.4 L450.3,576.8 L451.2,578.2 L452.2,579.6 L453.2,581 L454.1,582.4 L455.1,583.7 L456.1,585.1 L457,586.5 L458,587.8 L459,589.2 L460,590.5 L460.9,591.8 L461.9,593.1 L462.9,594.4 L463.8,595.6 L464.8,596.9 L465.8,598.1 L466.8,599.3 L467.7,600.5 L468.7,601.7 L469.7,602.8 L470.6,603.9 L471.6,605 L472.6,606.1 L473.5,607.2 L474.5,608.2 L475.5,609.2 L476.5,610.2 L477.4,611.1 L478.4,612.1 L479.4,613 L480.3,613.8 L481.3,614.7 L482.3,615.5 L483.3,616.2 L484.2,617 L485.2,617.7 L486.2,618.4 L487.1,619 L488.1,619.7 L489.1,620.3 L490.1,620.8 L491,621.3 L492,621.8 L493,622.3 L493.9,622.7 L494.9,623.1 L495.9,623.4 L496.8,623.7 L497.8,624 L498.8,624.2 L499.8,624.4 L500.7,624.6 L501.7,624.7 L502.7,624.8 L503.6,624.9 L504.6,624.9 L505.6,624.9 L506.6,624.8 L507.5,624.7 L508.5,624.6 L509.5,624.4 L510.4,624.2 L511.4,624 L512.4,623.7 L513.3,623.4 L514.3,623.1 L515.3,622.7 L516.3,622.3 L517.2,621.9 L518.2,621.4 L519.2,620.9 L520.1,620.3 M445.4,569.7 L444.2,568.3 L442.9,566.9 L441.7,565.4 L440.5,564 L439.3,562.6 L438,561.2 L436.8,559.8 L435.6,558.4 L434.3,557 L433.1,555.6 L431.9,554.2 L430.7,552.9 L429.4,551.5 L428.2,550.1 L427,548.8 L425.7,547.5 L424.5,546.1 L423.3,544.8 L422,543.5 L420.8,542.2 L419.6,540.9 L418.4,539.7 L417.1,538.4 L415.9,537.2 L414.7,536 L413.4,534.8 L412.2,533.6 L411,532.5 L409.8,531.3 L408.5,530.2 L407.3,529.1 L406.1,528 L404.8,526.9 L403.6,525.9 L402.4,524.9 L401.2,523.9 L399.9,522.9 L398.7,521.9 L397.5,521 L396.2,520.1 L395,519.2 L393.8,518.3 L392.6,517.5 L391.3,516.7 L390.1,515.9 L388.9,515.2 L387.6,514.4 L386.4,513.7 L385.2,513.1 L383.9,512.4 L382.7,511.8 L381.5,511.2 L380.3,510.6 L379,510.1 L377.8,509.6 L376.6,509.1 L375.3,508.7 L374.1,508.3 L372.9,507.9 L371.7,507.6 M445.4,569.7 L446.1,568.3 L446.8,566.9 L447.5,565.4 L448.2,564 L448.9,562.6 L449.6,561.2 L450.3,559.8 L451,558.3 L451.7,556.9 L452.4,555.5 L453.1,554.1 L453.9,552.7 L454.6,551.3 L455.3,549.8 L456,548.4 L456.7,547 L457.4,545.6 L458.1,544.2 L458.8,542.8 L459.5,541.3 L460.2,539.9 L460.9,538.5 L461.6,537.1 L462.3,535.7 L463,534.3 L463.7,532.9 L464.4,531.5 L465.1,530 L465.8,528.6 L466.5,527.2 L467.2,525.8 L467.9,524.4 L468.6,523 L469.3,521.6 L470.1,520.2 L470.8,518.8 L471.5,517.4 L472.2,516 L472.9,514.6 L473.6,513.2 L474.3,511.8 L475,510.4 L475.7,509 L476.4,507.6 L477.1,506.2 M445.4,569.7 L445.9,568.3 L446.5,566.9 L447,565.4 L447.5,564 L448.1,562.6 L448.6,561.2 L449.1,559.8 L449.7,558.3 L450.2,556.9 L450.7,555.5 L451.3,554.1 L451.8,552.7 L452.3,551.2 L452.9,549.8 L453.4,548.4 L453.9,547 L454.5,545.6 L455,544.2 L455.5,542.7 L456.1,541.3 L456.6,539.9 L457.1,538.5 L457.7,537.1 L458.2,535.7 L458.7,534.2 L459.3,532.8 L459.8,531.4 L460.3,530 L460.9,528.6 L461.4,527.2 L461.9,525.8 L462.5,524.4 L463,523 L463.5,521.5 L464.1,520.1 L464.6,518.7 L465.1,517.3 L465.7,515.9 L466.2,514.5 L466.7,513.1 L467.3,511.7 L467.8,510.3 L468.3,508.9 L468.9,507.5 M445.4,569.7 L445.9,571.1 L446.4,572.5 L446.9,574 L447.4,575.4 L447.9,576.8 L448.3,578.2 L448.8,579.6 L449.3,581 L449.8,582.4 L450.3,583.7 L450.8,585.1 L451.3,586.5 L451.8,587.8 L452.3,589.1 L452.8,590.4 L453.3,591.7 L453.8,593 L454.2,594.3 L454.7,595.6 L455.2,596.8 L455.7,598 L456.2,599.2 L456.7,600.4 L457.2,601.5 L457.7,602.7 L458.2,603.8 L458.7,604.8 L459.2,605.9 L459.7,606.9 L460.1,607.9 L460.6,608.9 L461.1,609.9 L461.6,610.8 L462.1,611.7 L462.6,612.6 L463.1,613.4 L463.6,614.2 L464.1,615 L464.6,615.7 L465.1,616.4 L465.6,617.1 L466,617.7 L466.5,618.3 L467,618.9 L467.5,619.5 L468,620 L468.5,620.4 L469,620.9 L469.5,621.3 L470,621.6 L470.5,621.9 L471,622.2 L471.5,622.5 L471.9,622.7 L472.4,622.9 L472.9,623 L473.4,623.1 L473.9,623.2 L474.4,623.2 L474.9,623.2 L475.4,623.1 L475.9,623.1 L476.4,622.9 L476.9,622.8 L477.4,622.6 L477.8,622.3 L478.3,622.1 L478.8,621.8 L479.3,621.4 L479.8,621 L480.3,620.6 L480.8,620.1 L481.3,619.7 L481.8,619.1 M445.4,569.7 L445.6,571.1 L445.8,572.5 L446,574 L446.2,575.4 L446.4,576.8 L446.6,578.2 L446.8,579.6 L447.1,581.1 L447.3,582.5 L447.5,583.9 L447.7,585.3 L447.9,586.7 L448.1,588.2 L448.3,589.6 L448.5,591 L448.7,592.4 L448.9,593.8 L449.1,595.2 L449.3,596.7 L449.5,598.1 L449.7,599.5 L450,600.9 L450.2,602.3 L450.4,603.8 L450.6,605.2 L450.8,606.6 L451,608 L451.2,609.4 L451.4,610.8 L451.6,612.2 L451.8,613.7 L452,615.1 L452.2,616.5 L452.4,617.9 L452.6,619.3 L452.9,620.7 L453.1,622.1 L453.3,623.6 L453.5,625 L453.7,626.4 L453.9,627.8 L454.1,629.2 L454.3,630.6 L454.5,632 M445.4,569.7 L444.7,571.1 L443.9,572.5 L443.2,574 L442.4,575.4 L441.7,576.8 L440.9,578.2 L440.2,579.6 L439.5,581 L438.7,582.4 L438,583.8 L437.2,585.2 L436.5,586.6 L435.7,588 L435,589.4 L434.3,590.8 L433.5,592.2 L432.8,593.5 L432,594.9 L431.3,596.2 L430.6,597.6 L429.8,598.9 L429.1,600.3 L428.3,601.6 L427.6,602.9 L426.8,604.2 L426.1,605.5 L425.4,606.8 L424.6,608.1 L423.9,609.3 L423.1,610.6 L422.4,611.8 L421.6,613.1 L420.9,614.3 L420.2,615.5 L419.4,616.7 L418.7,617.9 L417.9,619.1 L417.2,620.2 L416.4,621.4 L415.7,622.5 L415,623.6 L414.2,624.7 M445.4,569.7 L445.8,568.3 L446.3,566.9 L446.7,565.4 L447.1,564 L447.6,562.6 L448,561.2 L448.4,559.8 L448.8,558.4 L449.3,557 L449.7,555.5 L450.1,554.1 L450.6,552.7 L451,551.3 L451.4,550 L451.9,548.6 L452.3,547.2 L452.7,545.8 L453.1,544.4 L453.6,543.1 L454,541.7 L454.4,540.3 L454.9,539 L455.3,537.6 L455.7,536.3 L456.2,535 L456.6,533.6 L457,532.3 L457.5,531 L457.9,529.7 L458.3,528.4 L458.7,527.1 L459.2,525.9 L459.6,524.6 L460,523.3 L460.5,522.1 M445.4,569.7 L445.4,571.1 L445.5,572.5 L445.5,574 L445.5,575.4 L445.5,576.8 L445.6,578.2 L445.6,579.6 L445.6,581 L445.6,582.4 L445.7,583.8 L445.7,585.2 L445.7,586.6 L445.7,588 L445.8,589.4 L445.8,590.8 L445.8,592.2 L445.9,593.5 L445.9,594.9 L445.9,596.2 L445.9,597.6 L446,598.9 L446,600.2 L446,601.6 L446,602.9 L446.1,604.2 L446.1,605.5 L446.1,606.8 L446.1,608 L446.2,609.3 L446.2,610.6 L446.2,611.8 L446.3,613 L446.3,614.2 L446.3,615.4 L446.3,616.6 L446.4,617.8 L446.4,619 L446.4,620.1 L446.4,621.3 L446.5,622.4 L446.5,623.5 L446.5,624.6 L446.6,625.7 L446.6,626.7 L446.6,627.8 L446.6,628.8 L446.7,629.8 L446.7,630.8 L446.7,631.8 M445.4,569.7 L444.1,568.3 L442.7,566.9 L441.4,565.4 L440,564 L438.7,562.6 L437.3,561.2 L436,559.8 L434.7,558.4 L433.3,557 L432,555.7 L430.6,554.3 L429.3,552.9 L427.9,551.6 L426.6,550.2 L425.3,548.9 L423.9,547.6 L422.6,546.3 L421.2,545 L419.9,543.8 L418.5,542.5 L417.2,541.3 L415.9,540.1 L414.5,538.9 L413.2,537.7 L411.8,536.6 L410.5,535.4 L409.1,534.3 L407.8,533.2 L406.5,532.2 L405.1,531.1 L403.8,530.1 L402.4,529.1 L401.1,528.2 L399.7,527.2 L398.4,526.3 L397,525.5 L395.7,524.6 L394.4,523.8 L393,523 L391.7,522.3 L390.3,521.5 L389,520.8 L387.6,520.2 L386.3,519.5 L385,518.9 L383.6,518.4 L382.3,517.8 L380.9,517.3 L379.6,516.9 L378.2,516.4 L376.9,516 L375.6,515.7 L374.2,515.4 L372.9,515.1 L371.5,514.8 L370.2,514.6 L368.8,514.4 L367.5,514.3 L366.2,514.1 L364.8,514.1 M445.4,569.7 L445.5,571.1 L445.6,572.5 L445.7,574 L445.8,575.4 L445.9,576.8 L446,578.2 L446.1,579.6 L446.2,581 L446.3,582.4 L446.4,583.8 L446.5,585.2 L446.6,586.6 L446.7,588 L446.8,589.4 L446.9,590.8 L447,592.2 L447.1,593.6 L447.2,594.9 L447.3,596.3 L447.4,597.7 L447.4,599 L447.5,600.4 L447.6,601.7 L447.7,603 L447.8,604.4 L447.9,605.7 L448,607 L448.1,608.3 L448.2,609.6 L448.3,610.9 L448.4,612.1 L448.5,613.4 L448.6,614.7 L448.7,615.9 L448.8,617.1 L448.9,618.4 L449,619.6 L449.1,620.8 L449.2,622 L449.3,623.1 L449.4,624.3 L449.5,625.5 L449.6,626.6 L449.7,627.7 L449.8,628.8 L449.9,629.9 L450,631 L450.1,632.1 M445.4,569.7 L445.4,568.3 L445.4,566.9 L445.4,565.4 L445.4,564 L445.4,562.6 L445.4,561.2 L445.4,559.8 L445.4,558.4 L445.4,557 L445.4,555.6 L445.4,554.3 L445.4,552.9 L445.4,551.5 L445.4,550.2 L445.4,548.8 L445.3,547.5 L445.3,546.2 L445.3,544.9 L445.3,543.6 L445.3,542.3 L445.3,541.1 L445.3,539.8 L445.3,538.6 L445.3,537.4 L445.3,536.2 L445.3,535 L445.3,533.9 L445.3,532.7 L445.3,531.6 L445.3,530.5 L445.3,529.5 L445.3,528.4 L445.3,527.4 L445.3,526.4 L445.3,525.4 L445.3,524.5 L445.3,523.5 L445.3,522.6 L445.3,521.8 L445.3,520.9 L445.3,520.1 L445.3,519.3 L445.3,518.5 L445.3,517.8 L445.3,517.1 L445.3,516.4 L445.2,515.7 L445.2,515.1 L445.2,514.5 L445.2,513.9 L445.2,513.4 L445.2,512.9 L445.2,512.4 L445.2,512 L445.2,511.6 L445.2,511.2 L445.2,510.9 L445.2,510.6 L445.2,510.3 L445.2,510 L445.2,509.8 L445.2,509.7 L445.2,509.5 L445.2,509.4 L445.2,509.3 L445.2,509.3 L445.2,509.3 L445.2,509.3 L445.2,509.3 L445.2,509.4 L445.2,509.5 L445.2,509.7 L445.2,509.9 L445.2,510.1 L445.2,510.4 L445.2,510.7 L445.2,511 L445.2,511.3 L445.1,511.7 L445.1,512.1 L445.1,512.6 L445.1,513 L445.1,513.6 L445.1,514.1 M445.4,569.7 L445.3,568.3 L445.3,566.9 L445.2,565.4 L445.2,564 L445.1,562.6 L445,561.2 L445,559.8 L444.9,558.4 L444.8,557 L444.8,555.6 L444.7,554.1 L444.7,552.7 L444.6,551.4 L444.5,550 L444.5,548.6 L444.4,547.2 L444.4,545.8 L444.3,544.4 L444.2,543.1 L444.2,541.7 L444.1,540.3 L444.1,539 L444,537.7 L443.9,536.3 L443.9,535 L443.8,533.7 L443.7,532.4 L443.7,531 L443.6,529.7 L443.6,528.5 L443.5,527.2 L443.4,525.9 L443.4,524.6 L443.3,523.4 L443.3,522.2 L443.2,520.9 L443.1,519.7 L443.1,518.5 L443,517.3 L442.9,516.1 L442.9,514.9 L442.8,513.8 L442.8,512.6 L442.7,511.5 L442.6,510.3 L442.6,509.2 L442.5,508.1 L442.5,507 M445.4,569.7 L446.2,571.1 L447,572.5 L447.8,574 L448.5,575.4 L449.3,576.8 L450.1,578.2 L450.9,579.6 L451.7,581.1 L452.5,582.5 L453.2,583.9 L454,585.3 L454.8,586.7 L455.6,588.1 L456.4,589.6 L457.2,591 L457.9,592.4 L458.7,593.8 L459.5,595.2 L460.3,596.6 L461.1,598 L461.9,599.5 L462.7,600.9 L463.4,602.3 L464.2,603.7 L465,605.1 L465.8,606.5 L466.6,607.9 L467.4,609.3 L468.1,610.7 L468.9,612.1 L469.7,613.5 M445.4,569.7 L445.9,568.3 L446.3,566.9 L446.8,565.4 L447.2,564 L447.7,562.6 L448.1,561.2 L448.6,559.8 L449,558.4 L449.5,557 L449.9,555.5 L450.4,554.1 L450.9,552.7 L451.3,551.3 L451.8,549.9 L452.2,548.5 L452.7,547.2 L453.1,545.8 L453.6,544.4 L454,543 L454.5,541.6 L454.9,540.3 L455.4,538.9 L455.9,537.6 L456.3,536.2 L456.8,534.9 L457.2,533.5 L457.7,532.2 L458.1,530.9 L458.6,529.5 L459,528.2 L459.5,526.9 L459.9,525.6 L460.4,524.3 L460.9,523.1 L461.3,521.8 L461.8,520.5 L462.2,519.3 L462.7,518 L463.1,516.8 L463.6,515.6 L464,514.4 L464.5,513.1 L464.9,511.9 L465.4,510.8 L465.9,509.6 L466.3,508.4 L466.8,507.3 M445.4,569.7 L445.5,568.3 L445.7,566.9 L445.8,565.4 L445.9,564 L446,562.6 L446.2,561.2 L446.3,559.8 L446.4,558.4 L446.6,557 L446.7,555.6 L446.8,554.2 L447,552.8 L447.1,551.4 L447.2,550 L447.3,548.6 L447.5,547.2 L447.6,545.9 L447.7,544.5 L447.9,543.1 L448,541.8 L448.1,540.5 L448.3,539.1 L448.4,537.8 L448.5,536.5 L448.6,535.2 L448.8,533.9 L448.9,532.6 L449,531.3 L449.2,530 L449.3,528.8 L449.4,527.5 L449.6,526.3 L449.7,525.1 L449.8,523.8 L449.9,522.6 L450.1,521.4 L450.2,520.3 L450.3,519.1 L450.5,518 L450.6,516.8 L450.7,515.7 L450.8,514.6 L451,513.5 L451.1,512.4 L451.2,511.3 L451.4,510.3 L451.5,509.3 L451.6,508.3 L451.8,507.2 M445.4,569.7 L446,568.3 L446.6,566.9 L447.2,565.4 L447.8,564 L448.4,562.6 L449,561.2 L449.6,559.8 L450.2,558.3 L450.8,556.9 L451.4,555.5 L452,554.1 L452.6,552.7 L453.2,551.3 L453.8,549.8 L454.4,548.4 L455,547 L455.6,545.6 L456.2,544.2 L456.8,542.8 L457.4,541.4 L458,540 L458.6,538.6 L459.2,537.2 L459.8,535.8 L460.4,534.4 L461.1,533 L461.7,531.6 L462.3,530.2 L462.9,528.8 L463.5,527.4 L464.1,526 L464.7,524.6 L465.3,523.2 L465.9,521.8 L466.5,520.4 L467.1,519 L467.7,517.7 L468.3,516.3 L468.9,514.9 M445.4,569.7 L444.7,571.1 L443.9,572.5 L443.2,574 L442.4,575.4 L441.7,576.8 L440.9,578.2 L440.2,579.6 L439.4,581 L438.7,582.4 L437.9,583.9 L437.2,585.3 L436.4,586.7 L435.7,588.1 L434.9,589.5 L434.2,590.9 L433.4,592.3 L432.7,593.6 L431.9,595 L431.2,596.4 L430.4,597.8 L429.7,599.1 L428.9,600.5 L428.2,601.9 L427.4,603.2 L426.7,604.6 L425.9,605.9 L425.2,607.2 L424.5,608.6 L423.7,609.9 L423,611.2 L422.2,612.5 L421.5,613.8 L420.7,615.1 L420,616.4 L419.2,617.6 L418.5,618.9 L417.7,620.2 L417,621.4 L416.2,622.6 L415.5,623.9 L414.7,625.1 L414,626.3 L413.2,627.5 L412.5,628.7 L411.7,629.9 L411,631.1 L410.2,632.2 M445.4,569.7 L444.7,568.3 L444.1,566.9 L443.4,565.4 L442.7,564 L442.1,562.6 L441.4,561.2 L440.7,559.8 L440,558.4 L439.4,557 L438.7,555.6 L438,554.2 L437.4,552.8 L436.7,551.4 L436,550.1 L435.4,548.7 L434.7,547.3 L434,546 L433.3,544.6 L432.7,543.3 L432,542 L431.3,540.7 L430.7,539.3 L430,538.1 L429.3,536.8 L428.7,535.5 L428,534.2 L427.3,533 L426.6,531.8 L426,530.5 L425.3,529.3 L424.6,528.1 L424,527 L423.3,525.8 L422.6,524.7 L422,523.5 L421.3,522.4 L420.6,521.3 L420,520.2 L419.3,519.2 L418.6,518.1 L417.9,517.1 L417.3,516.1 L416.6,515.1 L415.9,514.1 L415.3,513.2 L414.6,512.3 L413.9,511.4 L413.3,510.5 L412.6,509.6 L411.9,508.8 L411.2,507.9 L410.6,507.1 M445.4,569.7 L445.8,568.3 L446.2,566.9 L446.6,565.4 L447.1,564 L447.5,562.6 L447.9,561.2 L448.3,559.8 L448.7,558.4 L449.1,557.1 L449.6,555.7 L450,554.3 L450.4,553 L450.8,551.7 L451.2,550.3 L451.6,549 L452,547.8 L452.5,546.5 L452.9,545.3 L453.3,544 L453.7,542.8 L454.1,541.6 L454.5,540.5 L455,539.3 L455.4,538.2 L455.8,537.1 L456.2,536.1 L456.6,535 L457,534 L457.5,533.1 L457.9,532.1 L458.3,531.2 L458.7,530.3 L459.1,529.5 L459.5,528.7 L459.9,527.9 L460.4,527.1 L460.8,526.4 L461.2,525.7 L461.6,525.1 L462,524.5 L462.4,523.9 L462.9,523.4 L463.3,522.9 L463.7,522.4 L464.1,522 L464.5,521.6 L464.9,521.3 L465.3,521 L465.8,520.7 L466.2,520.5 L466.6,520.3 L467,520.2 L467.4,520.1 L467.8,520 L468.3,520 L468.7,520 L469.1,520.1 L469.5,520.2 L469.9,520.3 L470.3,520.5 L470.8,520.7 L471.2,521 L471.6,521.3 L472,521.6 L472.4,522 L472.8,522.4 L473.2,522.9 L473.7,523.4 L474.1,523.9 M445.4,569.7 L446,571.1 L446.7,572.5 L447.3,574 L448,575.4 L448.6,576.8 L449.3,578.2 L449.9,579.6 L450.5,581 L451.2,582.5 L451.8,583.9 L452.5,585.3 L453.1,586.7 L453.8,588.1 L454.4,589.5 L455,590.9 L455.7,592.3 L456.3,593.7 L457,595.1 L457.6,596.5 L458.3,597.9 L458.9,599.2 L459.5,600.6 L460.2,602 L460.8,603.4 L461.5,604.7 L462.1,606.1 L462.8,607.4 L463.4,608.8 L464,610.1 L464.7,611.5 L465.3,612.8 L466,614.2 L466.6,615.5 L467.2,616.8 L467.9,618.1 L468.5,619.4 L469.2,620.7 L469.8,622 L470.5,623.3 L471.1,624.6 L471.7,625.9 L472.4,627.1 L473,628.4 L473.7,629.6 L474.3,630.9 L475,632.1 M445.4,569.7 L445.5,568.3 L445.5,566.9 L445.6,565.4 L445.6,564 L445.7,562.6 L445.8,561.2 L445.8,559.8 L445.9,558.4 L446,557 L446,555.6 L446.1,554.3 L446.1,552.9 L446.2,551.6 L446.3,550.2 L446.3,548.9 L446.4,547.6 L446.4,546.3 L446.5,545 L446.6,543.7 L446.6,542.4 L446.7,541.2 L446.8,540 L446.8,538.8 L446.9,537.6 L446.9,536.4 L447,535.3 L447.1,534.1 L447.1,533 L447.2,531.9 L447.3,530.9 L447.3,529.8 L447.4,528.8 L447.4,527.8 L447.5,526.9 L447.6,526 L447.6,525 L447.7,524.2 L447.7,523.3 L447.8,522.5 L447.9,521.7 M445.4,569.7 L446.2,568.3 L446.9,566.9 L447.7,565.4 L448.4,564 L449.2,562.6 L450,561.2 L450.7,559.8 L451.5,558.4 L452.2,557 L453,555.7 L453.7,554.3 L454.5,552.9 L455.3,551.6 L456,550.2 L456.8,548.9 L457.5,547.6 L458.3,546.3 L459.1,545 L459.8,543.7 L460.6,542.5 L461.3,541.3 L462.1,540 L462.9,538.8 L463.6,537.7 L464.4,536.5 L465.1,535.4 L465.9,534.3 L466.7,533.2 L467.4,532.1 L468.2,531.1 L468.9,530 L469.7,529 L470.4,528.1 L471.2,527.1 L472,526.2 L472.7,525.3 L473.5,524.5 L474.2,523.6 L475,522.8 L475.8,522.1 L476.5,521.3 L477.3,520.6 L478,520 L478.8,519.3 L479.6,518.7 L480.3,518.1 L481.1,517.6 L481.8,517 L482.6,516.6 L483.4,516.1 L484.1,515.7 L484.9,515.3 L485.6,515 L486.4,514.7 L487.1,514.4 L487.9,514.2 L488.7,514 L489.4,513.8 L490.2,513.7 L490.9,513.6 L491.7,513.5 L492.5,513.5 L493.2,513.5 L494,513.5 L494.7,513.6 L495.5,513.7 L496.3,513.9 L497,514.1 L497.8,514.3 L498.5,514.6 L499.3,514.9 L500.1,515.2 L500.8,515.5 L501.6,515.9 L502.3,516.4 L503.1,516.8 L503.8,517.4 L504.6,517.9 M445.4,569.7 L445.2,568.3 L444.9,566.9 L444.7,565.4 L444.5,564 L444.2,562.6 L444,561.2 L443.8,559.8 L443.5,558.4 L443.3,556.9 L443.1,555.5 L442.8,554.1 L442.6,552.7 L442.3,551.3 L442.1,549.9 L441.9,548.5 L441.6,547.1 L441.4,545.8 L441.2,544.4 L440.9,543 L440.7,541.6 L440.5,540.2 L440.2,538.9 L440,537.5 L439.8,536.2 L439.5,534.8 L439.3,533.5 L439.1,532.1 L438.8,530.8 L438.6,529.5 L438.4,528.1 L438.1,526.8 L437.9,525.5 L437.7,524.2 L437.4,522.9 L437.2,521.7 L436.9,520.4 L436.7,519.1 L436.5,517.9 L436.2,516.6 L436,515.4 L435.8,514.1 L435.5,512.9 L435.3,511.7 L435.1,510.5 L434.8,509.3 L434.6,508.1 L434.4,506.9 M445.4,569.7 L444.6,571.1 L443.9,572.5 L443.1,574 L442.4,575.4 L441.6,576.8 L440.8,578.2 L440.1,579.6 L439.3,581 L438.6,582.4 L437.8,583.8 L437,585.2 L436.3,586.6 L435.5,588 L434.7,589.4 L434,590.8 L433.2,592.1 L432.5,593.5 L431.7,594.9 L430.9,596.2 L430.2,597.6 L429.4,598.9 L428.7,600.2 L427.9,601.5 L427.1,602.8 L426.4,604.1 L425.6,605.4 L424.9,606.7 L424.1,608 L423.3,609.2 L422.6,610.5 L421.8,611.7 L421,612.9 L420.3,614.1 L419.5,615.3 L418.8,616.5 L418,617.7 L417.2,618.8 L416.5,620 L415.7,621.1 L415,622.2 L414.2,623.3 L413.4,624.4 L412.7,625.5 L411.9,626.5 L411.2,627.5 L410.4,628.6 L409.6,629.5 L408.9,630.5 L408.1,631.5 L407.3,632.4 M445.4,569.7 L445.2,568.3 L445,566.9 L444.7,565.4 L444.5,564 L444.3,562.6 L444.1,561.2 L443.9,559.8 L443.7,558.3 L443.4,556.9 L443.2,555.5 L443,554.1 L442.8,552.7 L442.6,551.3 L442.4,549.9 L442.1,548.4 L441.9,547 L441.7,545.6 L441.5,544.2 L441.3,542.8 L441.1,541.4 L440.8,540 L440.6,538.6 L440.4,537.2 L440.2,535.8 L440,534.4 L439.8,533 L439.5,531.6 L439.3,530.2 L439.1,528.8 L438.9,527.4 L438.7,526 L438.5,524.6 L438.2,523.2 L438,521.9 L437.8,520.5 L437.6,519.1 L437.4,517.7 L437.1,516.4 L436.9,515 L436.7,513.6 L436.5,512.3 L436.3,510.9 L436.1,509.5 L435.8,508.2 L435.6,506.8 M445.4,569.7 L445.8,571.1 L446.2,572.5 L446.6,574 L447,575.4 L447.4,576.8 L447.8,578.2 L448.2,579.6 L448.6,581.1 L449,582.5 L449.3,583.9 L449.7,585.3 L450.1,586.7 L450.5,588.1 L450.9,589.6 L451.3,591 L451.7,592.4 L452.1,593.8 L452.5,595.2 L452.9,596.6 L453.3,598 L453.7,599.4 L454.1,600.9 L454.5,602.3 L454.9,603.7 L455.3,605.1 L455.7,606.5 L456.1,607.9 L456.5,609.3 L456.9,610.7 L457.2,612.1 L457.6,613.5 L458,614.9 L458.4,616.3 L458.8,617.7 L459.2,619.1 L459.6,620.4 L460,621.8 L460.4,623.2 L460.8,624.6 L461.2,626 L461.6,627.4 M445.4,569.7 L445.6,571.1 L445.8,572.5 L446,574 L446.2,575.4 L446.4,576.8 L446.6,578.2 L446.8,579.6 L447,581 L447.2,582.3 L447.4,583.7 L447.6,585.1 L447.8,586.4 L448,587.8 L448.2,589.1 L448.3,590.4 L448.5,591.7 L448.7,593 L448.9,594.2 L449.1,595.5 L449.3,596.7 L449.5,597.9 L449.7,599.1 L449.9,600.2 L450.1,601.4 L450.3,602.5 L450.5,603.5 L450.7,604.6 L450.9,605.6 L451.1,606.6 L451.3,607.6 L451.5,608.6 L451.7,609.5 L451.9,610.4 L452.1,611.2 L452.3,612.1 L452.5,612.8 L452.7,613.6 L452.9,614.3 L453.1,615 L453.3,615.7 L453.5,616.3 L453.7,616.9 L453.8,617.5 L454,618 L454.2,618.4 L454.4,618.9 L454.6,619.3 L454.8,619.7 L455,620 L455.2,620.3 L455.4,620.5 L455.6,620.8 L455.8,620.9 L456,621.1 L456.2,621.2 L456.4,621.2 L456.6,621.3 L456.8,621.2 L457,621.2 L457.2,621.1 L457.4,620.9 L457.6,620.8 L457.8,620.6 L458,620.3 L458.2,620 L458.4,619.7 L458.6,619.3 L458.8,618.9 L459,618.5 L459.2,618 L459.3,617.5 L459.5,616.9 M445.4,569.7 L446.4,568.3 L447.4,566.9 L448.4,565.4 L449.3,564 L450.3,562.6 L451.3,561.2 L452.3,559.8 L453.3,558.4 L454.3,557 L455.2,555.6 L456.2,554.2 L457.2,552.8 L458.2,551.4 L459.2,550 L460.2,548.6 L461.2,547.2 L462.1,545.9 L463.1,544.5 L464.1,543.1 L465.1,541.8 L466.1,540.4 L467.1,539.1 L468,537.8 L469,536.5 L470,535.1 L471,533.8 L472,532.6 L473,531.3 L474,530 L474.9,528.7 L475.9,527.5 L476.9,526.2 L477.9,525 L478.9,523.8 L479.9,522.6 L480.9,521.4 L481.8,520.2 L482.8,519 L483.8,517.9 L484.8,516.7 L485.8,515.6 L486.8,514.5 L487.7,513.4 L488.7,512.3 L489.7,511.2 L490.7,510.2 L491.7,509.1 L492.7,508.1 L493.7,507.1 M445.4,569.7 L446.9,571.1 L448.4,572.5 L449.9,574 L451.4,575.4 L452.9,576.8 L454.4,578.2 L455.9,579.6 L457.4,581 L458.9,582.4 L460.4,583.8 L461.9,585.2 L463.4,586.5 L464.9,587.9 L466.4,589.3 L467.9,590.6 L469.4,591.9 L470.9,593.3 L472.4,594.6 L473.9,595.9 L475.4,597.2 L476.9,598.4 L478.4,599.7 L479.9,601 L481.4,602.2 L482.9,603.4 L484.4,604.6 L485.9,605.8 L487.4,606.9 L488.9,608.1 L490.4,609.2 L491.9,610.3 L493.4,611.4 L494.9,612.5 L496.4,613.5 L497.9,614.5 L499.4,615.5 L500.8,616.5 L502.3,617.5 L503.8,618.4 L505.3,619.3 L506.8,620.2 L508.3,621 L509.8,621.9 L511.3,622.7 L512.8,623.4 L514.3,624.2 L515.8,624.9 L517.3,625.6 L518.8,626.3 L520.3,626.9 L521.8,627.5 L523.3,628.1 L524.8,628.7 L526.3,629.2 M445.4,569.7 L445.3,568.3 L445.3,566.9 L445.2,565.4 L445.2,564 L445.1,562.6 L445,561.2 L445,559.8 L444.9,558.4 L444.8,556.9 L444.8,555.5 L444.7,554.1 L444.7,552.7 L444.6,551.3 L444.5,549.9 L444.5,548.5 L444.4,547.1 L444.3,545.7 L444.3,544.4 L444.2,543 L444.2,541.6 L444.1,540.2 L444,538.9 L444,537.5 L443.9,536.1 L443.9,534.8 L443.8,533.4 L443.7,532.1 L443.7,530.8 L443.6,529.4 L443.5,528.1 L443.5,526.8 L443.4,525.5 L443.4,524.2 L443.3,522.9 L443.2,521.6 L443.2,520.3 L443.1,519 L443.1,517.8 L443,516.5 L442.9,515.3 L442.9,514 L442.8,512.8 L442.7,511.6 L442.7,510.4 L442.6,509.2 L442.6,508 L442.5,506.8 M445.4,569.7 L445.6,571.1 L445.7,572.5 L445.9,574 L446.1,575.4 L446.2,576.8 L446.4,578.2 L446.5,579.6 L446.7,581.1 L446.9,582.5 L447,583.9 L447.2,585.3 L447.4,586.7 L447.5,588.1 L447.7,589.6 L447.8,591 L448,592.4 L448.2,593.8 L448.3,595.2 L448.5,596.6 L448.7,598 L448.8,599.5 L449,600.9 L449.2,602.3 L449.3,603.7 L449.5,605.1 L449.6,606.5 L449.8,607.9 L450,609.3 L450.1,610.7 L450.3,612.1 L450.5,613.5 L450.6,614.9 L450.8,616.3 L450.9,617.7 L451.1,619.1 L451.3,620.5 L451.4,621.9 L451.6,623.3 L451.8,624.7 L451.9,626.1 L452.1,627.5 L452.2,628.9 L452.4,630.2 L452.6,631.6 L452.7,633 M445.4,569.7 L445.2,568.3 L445,566.9 L444.8,565.4 L444.5,564 L444.3,562.6 L444.1,561.2 L443.9,559.8 L443.7,558.3 L443.5,556.9 L443.3,555.5 L443,554.1 L442.8,552.7 L442.6,551.3 L442.4,549.9 L442.2,548.5 L442,547 L441.8,545.6 L441.5,544.2 L441.3,542.8 L441.1,541.4 L440.9,540 L440.7,538.6 L440.5,537.2 L440.3,535.8 L440,534.5 L439.8,533.1 L439.6,531.7 L439.4,530.3 L439.2,528.9 L439,527.5 L438.8,526.2 L438.5,524.8 L438.3,523.4 L438.1,522.1 L437.9,520.7 L437.7,519.3 L437.5,518 L437.3,516.6 L437,515.3 L436.8,513.9 L436.6,512.6 L436.4,511.3 L436.2,509.9 L436,508.6 L435.8,507.3 M445.4,569.7 L445.8,571.1 L446.3,572.5 L446.7,574 L447.1,575.4 L447.6,576.8 L448,578.2 L448.5,579.6 L448.9,581.1 L449.3,582.5 L449.8,583.9 L450.2,585.3 L450.6,586.7 L451.1,588.1 L451.5,589.6 L452,591 L452.4,592.4 L452.8,593.8 L453.3,595.2 L453.7,596.6 L454.1,598.1 L454.6,599.5 L455,600.9 L455.5,602.3 L455.9,603.7 L456.3,605.1 L456.8,606.5 L457.2,607.9 L457.6,609.3 M445.4,569.7 L445.7,571.1 L446,572.5 L446.3,574 L446.5,575.4 L446.8,576.8 L447.1,578.2 L447.4,579.6 L447.7,581.1 L448,582.5 L448.3,583.9 L448.5,585.3 L448.8,586.7 L449.1,588.2 L449.4,589.6 L449.7,591 L450,592.4 L450.2,593.8 L450.5,595.3 L450.8,596.7 L451.1,598.1 L451.4,599.5 L451.7,600.9 L452,602.3 L452.2,603.8 L452.5,605.2 L452.8,606.6 L453.1,608 L453.4,609.4 L453.7,610.9 L454,612.3 L454.2,613.7 L454.5,615.1 L454.8,616.5 L455.1,617.9 L455.4,619.4 L455.7,620.8 L456,622.2 L456.2,623.6 L456.5,625 L456.8,626.4 L457.1,627.8 L457.4,629.3 L457.7,630.7 L458,632.1 M445.4,569.7 L446.9,571.1 L448.4,572.5 L449.9,574 L451.4,575.4 L452.9,576.8 L454.4,578.2 L455.9,579.6 L457.4,581 L458.9,582.5 L460.4,583.9 L461.9,585.3 L463.4,586.7 L464.9,588.1 L466.4,589.5 L467.9,590.9 L469.4,592.3 L470.9,593.7 L472.4,595.1 L473.9,596.5 L475.4,597.9 L476.9,599.3 L478.4,600.6 L479.9,602 L481.4,603.4 L482.9,604.8 L484.4,606.1 L485.9,607.5 L487.4,608.9 L488.9,610.2 L490.4,611.6 L491.9,612.9 L493.4,614.2 L494.9,615.6 L496.4,616.9 L497.9,618.2 L499.4,619.5 L500.8,620.8 L502.3,622.1 L503.8,623.4 L505.3,624.7 L506.8,626 L508.3,627.3 L509.8,628.6 L511.3,629.8 L512.8,631.1 L514.3,632.4 M445.4,569.7 L445.6,571.1 L445.9,572.5 L446.1,574 L446.4,575.4 L446.6,576.8 L446.9,578.2 L447.1,579.6 L447.3,581.1 L447.6,582.5 L447.8,583.9 L448.1,585.3 L448.3,586.7 L448.6,588.2 L448.8,589.6 L449,591 L449.3,592.4 L449.5,593.8 L449.8,595.2 L450,596.7 L450.3,598.1 L450.5,599.5 L450.7,600.9 L451,602.3 L451.2,603.7 L451.5,605.2 L451.7,606.6 L452,608 L452.2,609.4 L452.4,610.8 L452.7,612.2 L452.9,613.6 L453.2,615 L453.4,616.5 L453.7,617.9 L453.9,619.3 L454.1,620.7 L454.4,622.1 L454.6,623.5 L454.9,624.9 L455.1,626.3 L455.4,627.7 L455.6,629.1 L455.8,630.5 L456.1,631.9 M445.4,569.7 L445.5,571.1 L445.7,572.5 L445.8,574 L445.9,575.4 L446,576.8 L446.2,578.2 L446.3,579.6 L446.4,581.1 L446.5,582.5 L446.7,583.9 L446.8,585.3 L446.9,586.7 L447,588.1 L447.2,589.6 L447.3,591 L447.4,592.4 L447.5,593.8 L447.7,595.2 L447.8,596.6 L447.9,598 L448,599.5 L448.2,600.9 L448.3,602.3 L448.4,603.7 L448.5,605.1 L448.7,606.5 L448.8,607.9 L448.9,609.3 L449,610.7 L449.2,612.1 L449.3,613.5 L449.4,614.9 M445.4,569.7 L444.8,568.3 L444.3,566.9 L443.7,565.4 L443.1,564 L442.5,562.6 L442,561.2 L441.4,559.8 L440.8,558.3 L440.3,556.9 L439.7,555.5 L439.1,554.1 L438.5,552.7 L438,551.3 L437.4,549.8 L436.8,548.4 L436.3,547 L435.7,545.6 L435.1,544.2 L434.5,542.8 L434,541.4 L433.4,539.9 L432.8,538.5 L432.2,537.1 L431.7,535.7 L431.1,534.3 L430.5,532.9 L430,531.5 L429.4,530.1 L428.8,528.7 L428.2,527.3 L427.7,525.9 L427.1,524.5 L426.5,523.1 L426,521.7 L425.4,520.3 L424.8,518.9 L424.2,517.5 L423.7,516.1 L423.1,514.7 L422.5,513.3 L422,511.9 L421.4,510.6 M445.4,569.7 L446,568.3 L446.6,566.9 L447.1,565.4 L447.7,564 L448.3,562.6 L448.9,561.2 L449.4,559.8 L450,558.3 L450.6,556.9 L451.2,555.5 L451.7,554.1 L452.3,552.7 L452.9,551.2 L453.5,549.8 L454.1,548.4 L454.6,547 L455.2,545.6 L455.8,544.1 L456.4,542.7 L456.9,541.3 L457.5,539.9 L458.1,538.5 L458.7,537.1 L459.2,535.6 L459.8,534.2 L460.4,532.8 L461,531.4 L461.5,530 L462.1,528.5 L462.7,527.1 L463.3,525.7 L463.9,524.3 L464.4,522.9 L465,521.5 L465.6,520 L466.2,518.6 L466.7,517.2 L467.3,515.8 L467.9,514.4 L468.5,513 L469,511.5 L469.6,510.1 L470.2,508.7 L470.8,507.3 M445.4,569.7 L446.2,568.3 L447,566.9 L447.8,565.4 L448.6,564 L449.4,562.6 L450.2,561.2 L451,559.8 L451.8,558.4 L452.6,557 L453.4,555.6 L454.2,554.2 L455,552.8 L455.8,551.4 L456.6,550 L457.4,548.6 L458.2,547.2 L459,545.9 L459.8,544.5 L460.6,543.1 L461.4,541.8 L462.2,540.4 L463,539.1 L463.8,537.8 L464.6,536.4 L465.4,535.1 L466.2,533.8 L467,532.5 L467.8,531.2 L468.6,530 L469.4,528.7 L470.2,527.4 L471,526.2 L471.8,525 L472.6,523.7 L473.4,522.5 L474.2,521.3 L475,520.1 L475.8,519 L476.6,517.8 L477.4,516.7 L478.2,515.5 L479,514.4 L479.8,513.3 L480.6,512.2 L481.4,511.1 L482.2,510.1 L483,509 L483.8,508 L484.6,507 M445.4,569.7 L444.5,568.3 L443.7,566.9 L442.8,565.4 L441.9,564 L441,562.6 L440.2,561.2 L439.3,559.8 L438.4,558.4 L437.5,556.9 L436.7,555.5 L435.8,554.1 L434.9,552.7 L434,551.3 L433.2,549.9 L432.3,548.5 L431.4,547.1 L430.5,545.7 L429.7,544.3 L428.8,542.9 L427.9,541.5 L427,540.1 L426.2,538.8 L425.3,537.4 L424.4,536 L423.5,534.6 L422.7,533.3 L421.8,531.9 L420.9,530.5 L420,529.2 L419.2,527.8 L418.3,526.5 L417.4,525.2 L416.5,523.8 L415.7,522.5 L414.8,521.2 L413.9,519.9 L413,518.5 L412.2,517.2 L411.3,515.9 L410.4,514.6 L409.5,513.4 L408.7,512.1 L407.8,510.8 L406.9,509.5 L406,508.3 L405.2,507 M445.4,569.7 L445.4,568.3 L445.3,566.9 L445.3,565.4 L445.3,564 L445.2,562.6 L445.2,561.2 L445.2,559.8 L445.1,558.3 L445.1,556.9 L445.1,555.5 L445,554.1 L445,552.7 L445,551.3 L444.9,549.9 L444.9,548.4 L444.9,547 L444.8,545.6 L444.8,544.2 L444.8,542.8 L444.7,541.4 L444.7,540 L444.7,538.6 L444.6,537.2 L444.6,535.8 L444.6,534.4 L444.5,533 L444.5,531.6 L444.5,530.2 L444.4,528.8 L444.4,527.4 L444.4,526 L444.3,524.6 L444.3,523.3 L444.3,521.9 L444.2,520.5 L444.2,519.1 L444.2,517.8 L444.1,516.4 L444.1,515 L444.1,513.7 L444,512.3 L444,510.9 L444,509.6 L443.9,508.2 L443.9,506.9 M445.4,569.7 L444.5,571.1 L443.6,572.5 L442.7,574 L441.8,575.4 L440.9,576.8 L440,578.2 L439.1,579.6 L438.2,581.1 L437.3,582.5 L436.4,583.9 L435.5,585.3 L434.6,586.7 L433.8,588.1 L432.9,589.5 L432,591 L431.1,592.4 L430.2,593.8 L429.3,595.2 L428.4,596.6 L427.5,598 L426.6,599.4 L425.7,600.8 L424.8,602.2 L423.9,603.6 L423,605 L422.1,606.4 L421.2,607.8 L420.3,609.2 L419.4,610.6 L418.5,612 L417.6,613.4 L416.7,614.8 L415.8,616.1 L414.9,617.5 L414,618.9 L413.1,620.3 L412.2,621.6 L411.4,623 L410.5,624.4 L409.6,625.7 L408.7,627.1 L407.8,628.5 L406.9,629.8 L406,631.2 L405.1,632.5 M445.4,569.7 L445.8,571.1 L446.2,572.5 L446.7,574 L447.1,575.4 L447.5,576.8 L447.9,578.2 L448.3,579.6 L448.7,581 L449.2,582.5 L449.6,583.9 L450,585.3 L450.4,586.7 L450.8,588.1 L451.3,589.5 L451.7,590.9 L452.1,592.3 L452.5,593.6 L452.9,595 L453.3,596.4 L453.8,597.8 L454.2,599.2 L454.6,600.5 L455,601.9 L455.4,603.2 L455.9,604.6 L456.3,605.9 L456.7,607.3 L457.1,608.6 L457.5,609.9 L457.9,611.2 L458.4,612.6 L458.8,613.9 L459.2,615.2 L459.6,616.4 L460,617.7 L460.5,619 L460.9,620.3 L461.3,621.5 L461.7,622.8 L462.1,624 L462.5,625.2 L463,626.5 L463.4,627.7 L463.8,628.9 L464.2,630.1 M445.4,569.7 L444.8,568.3 L444.1,566.9 L443.5,565.4 L442.8,564 L442.2,562.6 L441.5,561.2 L440.9,559.8 L440.2,558.4 L439.6,557 L438.9,555.6 L438.3,554.2 L437.6,552.8 L437,551.5 L436.3,550.1 L435.7,548.7 L435,547.4 L434.4,546 L433.8,544.7 L433.1,543.4 L432.5,542.1 L431.8,540.8 L431.2,539.5 L430.5,538.2 L429.9,537 L429.2,535.7 L428.6,534.5 L427.9,533.3 L427.3,532.1 L426.6,530.9 L426,529.7 L425.3,528.5 L424.7,527.4 L424.1,526.3 L423.4,525.2 L422.8,524.1 L422.1,523 L421.5,522 L420.8,520.9 L420.2,519.9 L419.5,518.9 L418.9,518 L418.2,517 L417.6,516.1 L416.9,515.2 L416.3,514.3 L415.6,513.5 L415,512.7 L414.3,511.8 L413.7,511.1 L413.1,510.3 L412.4,509.6 L411.8,508.9 L411.1,508.2 L410.5,507.5 M445.4,569.7 L445.7,568.3 L446,566.9 L446.3,565.4 L446.6,564 L447,562.6 L447.3,561.2 L447.6,559.8 L447.9,558.4 L448.2,557 L448.5,555.6 L448.8,554.3 L449.1,552.9 L449.5,551.6 L449.8,550.2 L450.1,548.9 L450.4,547.6 L450.7,546.3 L451,545 L451.3,543.7 L451.6,542.4 L452,541.2 L452.3,540 L452.6,538.8 L452.9,537.6 L453.2,536.4 L453.5,535.3 L453.8,534.1 L454.1,533 L454.5,531.9 L454.8,530.9 L455.1,529.9 L455.4,528.8 L455.7,527.9 L456,526.9 L456.3,526 L456.6,525 L456.9,524.2 L457.3,523.3 L457.6,522.5 L457.9,521.7 L458.2,520.9 L458.5,520.2 L458.8,519.5 L459.1,518.8 L459.4,518.2 L459.8,517.5 L460.1,517 M445.4,569.7 L445.5,568.3 L445.5,566.9 L445.6,565.4 L445.7,564 L445.7,562.6 L445.8,561.2 L445.8,559.8 L445.9,558.4 L446,557 L446,555.6 L446.1,554.1 L446.2,552.7 L446.2,551.4 L446.3,550 L446.4,548.6 L446.4,547.2 L446.5,545.8 L446.5,544.4 L446.6,543.1 L446.7,541.7 L446.7,540.3 L446.8,539 L446.9,537.6 L446.9,536.3 L447,535 L447.1,533.7 L447.1,532.3 L447.2,531 L447.2,529.7 L447.3,528.4 L447.4,527.2 L447.4,525.9 L447.5,524.6 L447.6,523.4 L447.6,522.1 L447.7,520.9 L447.7,519.7 L447.8,518.5 L447.9,517.3 L447.9,516.1 L448,514.9 L448.1,513.7 L448.1,512.6 L448.2,511.4 L448.3,510.3 L448.3,509.2 L448.4,508.1 L448.4,507 M445.4,569.7 L445.9,568.3 L446.3,566.9 L446.8,565.4 L447.3,564 L447.7,562.6 L448.2,561.2 L448.7,559.8 L449.1,558.3 L449.6,556.9 L450,555.5 L450.5,554.1 L451,552.7 L451.4,551.2 L451.9,549.8 L452.4,548.4 L452.8,547 L453.3,545.6 L453.8,544.1 L454.2,542.7 L454.7,541.3 L455.2,539.9 L455.6,538.5 L456.1,537 L456.6,535.6 L457,534.2 L457.5,532.8 L457.9,531.4 L458.4,530 L458.9,528.5 L459.3,527.1 L459.8,525.7 L460.3,524.3 L460.7,522.9 L461.2,521.5 L461.7,520 L462.1,518.6 L462.6,517.2 L463.1,515.8 L463.5,514.4 L464,512.9 L464.5,511.5 L464.9,510.1 L465.4,508.7 L465.8,507.3 M445.4,569.7 L444.8,571.1 L444.3,572.5 L443.7,574 L443.2,575.4 L442.6,576.8 L442.1,578.2 L441.5,579.6 L441,581 L440.4,582.4 L439.9,583.7 L439.3,585.1 L438.8,586.5 L438.2,587.8 L437.7,589.2 L437.1,590.5 L436.5,591.8 L436,593.1 L435.4,594.4 L434.9,595.6 L434.3,596.9 L433.8,598.1 L433.2,599.3 L432.7,600.5 L432.1,601.7 L431.6,602.8 L431,604 L430.5,605.1 L429.9,606.2 L429.4,607.2 L428.8,608.3 L428.3,609.3 L427.7,610.2 L427.1,611.2 L426.6,612.1 L426,613 L425.5,613.9 L424.9,614.8 L424.4,615.6 L423.8,616.4 L423.3,617.1 L422.7,617.8 L422.2,618.5 L421.6,619.2 L421.1,619.8 L420.5,620.4 L420,621 L419.4,621.5 L418.8,622 L418.3,622.5 L417.7,622.9 L417.2,623.3 L416.6,623.7 L416.1,624 L415.5,624.3 L415,624.5 L414.4,624.7 L413.9,624.9 L413.3,625.1 L412.8,625.2 L412.2,625.3 L411.7,625.3 L411.1,625.3 L410.6,625.3 L410,625.2 L409.4,625.1 L408.9,624.9 L408.3,624.7 L407.8,624.5 L407.2,624.3 L406.7,624 L406.1,623.7 L405.6,623.3 L405,622.9 L404.5,622.5 L403.9,622 L403.4,621.5 L402.8,621 M445.4,569.7 L445.9,571.1 L446.4,572.5 L446.9,574 L447.4,575.4 L447.9,576.8 L448.4,578.2 L448.9,579.6 L449.4,581 L449.9,582.3 L450.4,583.7 L450.9,585.1 L451.4,586.4 L451.9,587.8 L452.4,589.1 L452.9,590.4 L453.4,591.7 L453.9,592.9 L454.5,594.2 L455,595.4 L455.5,596.6 L456,597.8 L456.5,599 L457,600.2 L457.5,601.3 L458,602.4 L458.5,603.5 L459,604.5 L459.5,605.5 L460,606.5 L460.5,607.5 L461,608.4 L461.5,609.3 L462,610.2 L462.5,611 L463,611.9 L463.5,612.6 L464,613.4 L464.5,614.1 L465,614.8 L465.5,615.4 L466,616 L466.5,616.6 L467,617.1 L467.5,617.6 L468,618.1 L468.5,618.5 L469,618.9 L469.5,619.2 L470,619.5 L470.5,619.8 L471,620 L471.6,620.2 L472.1,620.3 L472.6,620.5 L473.1,620.5 L473.6,620.6 L474.1,620.5 L474.6,620.5 L475.1,620.4 L475.6,620.3 L476.1,620.1 L476.6,619.9 L477.1,619.7 L477.6,619.4 L478.1,619 L478.6,618.7 L479.1,618.3 L479.6,617.8 L480.1,617.4 L480.6,616.9 L481.1,616.3 M445.4,569.7 L445.8,568.3 L446.2,566.9 L446.6,565.4 L447.1,564 L447.5,562.6 L447.9,561.2 L448.3,559.8 L448.7,558.3 L449.1,556.9 L449.5,555.5 L449.9,554.1 L450.4,552.7 L450.8,551.2 L451.2,549.8 L451.6,548.4 L452,547 L452.4,545.6 L452.8,544.2 L453.3,542.7 L453.7,541.3 L454.1,539.9 L454.5,538.5 L454.9,537.1 L455.3,535.7 L455.7,534.2 L456.2,532.8 L456.6,531.4 L457,530 L457.4,528.6 L457.8,527.2 L458.2,525.8 L458.6,524.3 L459,522.9 L459.5,521.5 L459.9,520.1 L460.3,518.7 L460.7,517.3 L461.1,515.9 L461.5,514.5 L461.9,513.1 L462.4,511.7 L462.8,510.3 L463.2,508.9 L463.6,507.4 M445.4,569.7 L445.4,568.3 L445.4,566.9 L445.4,565.4 L445.3,564 L445.3,562.6 L445.3,561.2 L445.3,559.8 L445.3,558.3 L445.3,556.9 L445.3,555.5 L445.2,554.1 L445.2,552.7 L445.2,551.2 L445.2,549.8 L445.2,548.4 L445.2,547 L445.2,545.6 L445.2,544.2 L445.1,542.7 L445.1,541.3 L445.1,539.9 L445.1,538.5 L445.1,537.1 L445.1,535.7 L445.1,534.2 L445,532.8 L445,531.4 L445,530 L445,528.6 L445,527.2 L445,525.8 L445,524.4 L444.9,523 L444.9,521.5 L444.9,520.1 L444.9,518.7 L444.9,517.3 L444.9,515.9 L444.9,514.5 L444.8,513.1 L444.8,511.7 L444.8,510.3 M445.4,569.7 L446.2,571.1 L447,572.5 L447.8,574 L448.6,575.4 L449.4,576.8 L450.1,578.2 L450.9,579.6 L451.7,581.1 L452.5,582.5 L453.3,583.9 L454.1,585.3 L454.9,586.7 L455.7,588.1 L456.5,589.5 L457.3,591 L458,592.4 L458.8,593.8 L459.6,595.2 L460.4,596.6 L461.2,598 L462,599.4 L462.8,600.8 L463.6,602.2 L464.4,603.6 L465.2,605 L465.9,606.4 L466.7,607.8 L467.5,609.2 L468.3,610.6 L469.1,612 L469.9,613.4 L470.7,614.8 L471.5,616.1 L472.3,617.5 L473.1,618.9 L473.9,620.3 L474.6,621.6 L475.4,623 L476.2,624.4 L477,625.7 L477.8,627.1 L478.6,628.5 L479.4,629.8 L480.2,631.2 L481,632.5 M445.4,569.7 L445.2,568.3 L445.1,566.9 L444.9,565.4 L444.7,564 L444.5,562.6 L444.4,561.2 L444.2,559.8 L444,558.4 L443.9,557 L443.7,555.6 L443.5,554.2 L443.4,552.8 L443.2,551.4 L443,550 L442.8,548.6 L442.7,547.2 L442.5,545.8 L442.3,544.5 L442.2,543.1 L442,541.7 L441.8,540.4 L441.6,539 L441.5,537.7 L441.3,536.4 L441.1,535 L441,533.7 L440.8,532.4 L440.6,531.1 L440.5,529.8 L440.3,528.6 L440.1,527.3 L439.9,526 M445.4,569.7 L446,568.3 L446.5,566.9 L447.1,565.4 L447.6,564 L448.2,562.6 L448.7,561.2 L449.3,559.8 L449.8,558.4 L450.4,556.9 L450.9,555.5 L451.5,554.1 L452,552.7 L452.6,551.3 L453.1,549.9 L453.7,548.5 L454.2,547.1 L454.8,545.7 L455.3,544.3 L455.9,542.9 L456.4,541.5 L457,540.1 L457.6,538.7 L458.1,537.3 L458.7,535.9 L459.2,534.5 L459.8,533.1 L460.3,531.8 L460.9,530.4 L461.4,529 L462,527.7 L462.5,526.3 L463.1,524.9 L463.6,523.6 L464.2,522.2 L464.7,520.9 M445.4,569.7 L445.8,568.3 L446.1,566.9 L446.5,565.4 L446.9,564 L447.2,562.6 L447.6,561.2 L448,559.8 L448.3,558.3 L448.7,556.9 L449.1,555.5 L449.4,554.1 L449.8,552.7 L450.2,551.3 L450.5,549.8 L450.9,548.4 L451.3,547 L451.6,545.6 L452,544.2 L452.4,542.8 L452.7,541.4 L453.1,539.9 L453.5,538.5 L453.8,537.1 L454.2,535.7 L454.6,534.3 L454.9,532.9 L455.3,531.5 L455.7,530.1 L456,528.7 L456.4,527.3 L456.8,525.9 L457.1,524.5 L457.5,523.1 L457.9,521.7 L458.2,520.3 L458.6,518.9 L459,517.5 L459.3,516.1 L459.7,514.7 L460.1,513.3 L460.4,511.9 L460.8,510.5 L461.2,509.2 L461.5,507.8 L461.9,506.4 M445.4,569.7 L445,568.3 L444.7,566.9 L444.3,565.4 L444,564 L443.6,562.6 L443.3,561.2 L442.9,559.8 L442.6,558.3 L442.2,556.9 L441.9,555.5 L441.5,554.1 L441.2,552.7 L440.8,551.2 L440.4,549.8 L440.1,548.4 L439.7,547 L439.4,545.6 L439,544.2 L438.7,542.7 L438.3,541.3 L438,539.9 L437.6,538.5 L437.3,537.1 L436.9,535.7 L436.6,534.2 L436.2,532.8 L435.8,531.4 L435.5,530 L435.1,528.6 L434.8,527.2 L434.4,525.8 L434.1,524.3 L433.7,522.9 L433.4,521.5 L433,520.1 L432.7,518.7 L432.3,517.3 L432,515.9 L431.6,514.5 L431.2,513.1 L430.9,511.6 L430.5,510.2 L430.2,508.8 L429.8,507.4 M445.4,569.7 L443.9,568.3 L442.4,566.9 L440.9,565.4 L439.4,564 L437.9,562.6 L436.4,561.2 L434.9,559.8 L433.4,558.4 L431.9,557 L430.4,555.5 L428.9,554.1 L427.4,552.7 L425.9,551.3 L424.4,550 L422.9,548.6 L421.4,547.2 L419.9,545.8 L418.4,544.4 L416.9,543.1 L415.4,541.7 L413.9,540.3 L412.4,539 L410.9,537.6 L409.4,536.3 L407.9,535 L406.4,533.6 L404.9,532.3 L403.4,531 L401.9,529.7 L400.4,528.4 L398.9,527.1 L397.4,525.9 L395.9,524.6 L394.4,523.3 L392.9,522.1 L391.4,520.9 L390,519.6 L388.5,518.4 L387,517.2 L385.5,516 L384,514.8 L382.5,513.7 L381,512.5 L379.5,511.3 L378,510.2 L376.5,509.1 L375,508 L373.5,506.9 M445.4,569.7 L445.3,571.1 L445.2,572.5 L445.1,574 L445,575.4 L444.9,576.8 L444.8,578.2 L444.7,579.6 L444.6,581.1 L444.6,582.5 L444.5,583.9 L444.4,585.3 L444.3,586.7 L444.2,588.1 L444.1,589.6 L444,591 L443.9,592.4 L443.8,593.8 L443.7,595.2 L443.6,596.6 L443.5,598.1 L443.4,599.5 L443.3,600.9 L443.2,602.3 L443.1,603.7 L443.1,605.1 L443,606.5 L442.9,607.9 L442.8,609.3 L442.7,610.8 L442.6,612.2 L442.5,613.6 L442.4,615 L442.3,616.4 L442.2,617.8 L442.1,619.2 L442,620.6 L441.9,622 L441.8,623.4 L441.7,624.8 L441.6,626.2 L441.6,627.6 L441.5,629 L441.4,630.4 L441.3,631.7 L441.2,633.1 M445.4,569.7 L446.9,571.1 L448.4,572.5 L449.9,574 L451.4,575.4 L452.9,576.8 L454.4,578.2 L455.9,579.6 L457.4,581 L458.9,582.4 L460.4,583.8 L461.9,585.2 L463.4,586.6 L464.9,588 L466.4,589.4 L467.9,590.7 L469.4,592.1 L470.9,593.5 L472.4,594.8 L473.9,596.2 L475.4,597.5 L476.9,598.8 L478.4,600.2 L479.9,601.5 L481.4,602.8 L482.9,604 L484.4,605.3 L485.9,606.6 L487.4,607.8 L488.9,609.1 L490.4,610.3 L491.9,611.5 L493.4,612.7 L494.9,613.9 L496.4,615.1 L497.9,616.3 L499.4,617.4 L500.8,618.5 L502.3,619.7 L503.8,620.8 L505.3,621.9 L506.8,622.9 L508.3,624 L509.8,625 L511.3,626 L512.8,627 L514.3,628 L515.8,629 L517.3,629.9 L518.8,630.8 L520.3,631.7 L521.8,632.6 M445.4,569.7 L444.7,571.1 L444,572.5 L443.3,574 L442.6,575.4 L441.8,576.8 L441.1,578.2 L440.4,579.6 L439.7,581.1 L439,582.5 L438.3,583.9 L437.6,585.3 L436.9,586.7 L436.1,588.2 L435.4,589.6 L434.7,591 L434,592.4 L433.3,593.8 L432.6,595.2 L431.9,596.7 L431.2,598.1 L430.5,599.5 L429.7,600.9 L429,602.3 L428.3,603.8 L427.6,605.2 L426.9,606.6 L426.2,608 L425.5,609.4 L424.8,610.8 L424.1,612.3 L423.3,613.7 L422.6,615.1 L421.9,616.5 L421.2,617.9 L420.5,619.3 L419.8,620.7 L419.1,622.2 L418.4,623.6 L417.6,625 L416.9,626.4 L416.2,627.8 L415.5,629.2 L414.8,630.6 L414.1,632 M445.4,569.7 L445.8,571.1 L446.2,572.5 L446.7,574 L447.1,575.4 L447.5,576.8 L447.9,578.2 L448.3,579.6 L448.8,581 L449.2,582.4 L449.6,583.9 L450,585.3 L450.4,586.7 L450.9,588.1 L451.3,589.5 L451.7,590.8 L452.1,592.2 L452.5,593.6 L453,595 L453.4,596.4 L453.8,597.7 L454.2,599.1 L454.6,600.5 L455.1,601.8 L455.5,603.2 L455.9,604.5 L456.3,605.8 L456.7,607.2 L457.2,608.5 L457.6,609.8 L458,611.1 L458.4,612.4 L458.8,613.7 L459.3,615 L459.7,616.2 L460.1,617.5 L460.5,618.7 L460.9,620 L461.4,621.2 L461.8,622.4 L462.2,623.7 L462.6,624.9 L463,626.1 L463.5,627.2 L463.9,628.4 L464.3,629.6 L464.7,630.7 L465.1,631.9 M445.4,569.7 L445.8,568.3 L446.3,566.9 L446.7,565.4 L447.1,564 L447.6,562.6 L448,561.2 L448.4,559.8 L448.8,558.4 L449.3,557 L449.7,555.6 L450.1,554.1 L450.6,552.7 L451,551.4 L451.4,550 L451.9,548.6 L452.3,547.2 L452.7,545.8 L453.1,544.4 L453.6,543.1 L454,541.7 L454.4,540.3 L454.9,539 L455.3,537.7 L455.7,536.3 L456.2,535 L456.6,533.7 L457,532.3 L457.4,531 L457.9,529.7 L458.3,528.5 L458.7,527.2 L459.2,525.9 L459.6,524.6 L460,523.4 L460.5,522.1 L460.9,520.9 L461.3,519.7 L461.7,518.5 L462.2,517.3 L462.6,516.1 L463,514.9 L463.5,513.7 L463.9,512.6 L464.3,511.4 L464.8,510.3 L465.2,509.2 L465.6,508.1 L466,507 M445.4,569.7 L445.6,568.3 L445.8,566.9 L446,565.4 L446.2,564 L446.4,562.6 L446.6,561.2 L446.8,559.8 L447,558.3 L447.2,556.9 L447.4,555.5 L447.6,554.1 L447.8,552.7 L448,551.3 L448.2,549.9 L448.4,548.5 L448.6,547 L448.8,545.6 L448.9,544.2 L449.1,542.8 L449.3,541.4 L449.5,540 L449.7,538.6 L449.9,537.2 L450.1,535.8 L450.3,534.4 L450.5,533 L450.7,531.7 L450.9,530.3 L451.1,528.9 L451.3,527.5 L451.5,526.1 L451.7,524.7 L451.9,523.4 L452.1,522 L452.3,520.6 L452.5,519.3 L452.7,517.9 L452.9,516.6 L453.1,515.2 L453.3,513.9 L453.5,512.5 L453.7,511.2 L453.9,509.8 L454.1,508.5 L454.3,507.2 M445.4,569.7 L445.9,571.1 L446.4,572.5 L447,574 L447.5,575.4 L448,576.8 L448.5,578.2 L449,579.6 L449.5,581 L450.1,582.3 L450.6,583.7 L451.1,585.1 L451.6,586.4 L452.1,587.7 L452.7,589.1 L453.2,590.4 L453.7,591.6 L454.2,592.9 L454.7,594.2 L455.2,595.4 L455.8,596.6 L456.3,597.8 L456.8,598.9 L457.3,600.1 L457.8,601.2 L458.4,602.3 L458.9,603.3 L459.4,604.4 L459.9,605.4 L460.4,606.4 L460.9,607.3 L461.5,608.2 L462,609.1 L462.5,610 L463,610.8 L463.5,611.6 L464.1,612.3 L464.6,613.1 L465.1,613.8 L465.6,614.4 L466.1,615 L466.6,615.6 L467.2,616.1 L467.7,616.6 L468.2,617.1 L468.7,617.5 L469.2,617.9 L469.8,618.3 L470.3,618.6 L470.8,618.8 L471.3,619.1 L471.8,619.3 L472.3,619.4 L472.9,619.5 L473.4,619.6 L473.9,619.6 L474.4,619.6 L474.9,619.6 L475.5,619.5 L476,619.3 L476.5,619.2 L477,619 L477.5,618.7 L478,618.4 L478.6,618.1 L479.1,617.7 L479.6,617.3 L480.1,616.9 L480.6,616.4 L481.2,615.9 L481.7,615.3 M445.4,569.7 L445.6,571.1 L445.8,572.5 L446,574 L446.2,575.4 L446.4,576.8 L446.6,578.2 L446.8,579.6 L447,581 L447.2,582.5 L447.4,583.9 L447.6,585.3 L447.8,586.7 L448,588.1 L448.2,589.5 L448.4,590.9 L448.6,592.3 L448.8,593.7 L449,595 L449.2,596.4 L449.4,597.8 L449.6,599.2 L449.8,600.5 L450,601.9 L450.2,603.3 L450.4,604.6 L450.6,605.9 L450.8,607.3 L451,608.6 L451.2,609.9 L451.4,611.3 L451.6,612.6 L451.8,613.9 L452,615.2 L452.2,616.5 L452.4,617.8 L452.6,619 L452.8,620.3 L453,621.6 L453.2,622.8 L453.4,624.1 L453.6,625.3 L453.8,626.5 L454,627.7 L454.2,629 L454.4,630.2 L454.6,631.3 L454.8,632.5 M445.4,569.7 L445.3,568.3 L445.2,566.9 L445.2,565.4 L445.1,564 L445,562.6 L444.9,561.2 L444.8,559.8 L444.8,558.4 L444.7,557 L444.6,555.6 L444.5,554.2 L444.4,552.8 L444.3,551.4 L444.3,550 L444.2,548.6 L444.1,547.2 L444,545.8 L443.9,544.5 L443.9,543.1 L443.8,541.8 L443.7,540.4 L443.6,539.1 L443.5,537.7 L443.5,536.4 L443.4,535.1 L443.3,533.8 L443.2,532.5 L443.1,531.2 L443.1,529.9 L443,528.6 L442.9,527.4 L442.8,526.1 L442.7,524.9 L442.7,523.6 L442.6,522.4 L442.5,521.2 L442.4,520 L442.3,518.8 L442.2,517.6 L442.2,516.5 L442.1,515.3 L442,514.2 L441.9,513.1 L441.8,512 L441.8,510.9 L441.7,509.8 L441.6,508.7 L441.5,507.7 L441.4,506.6 M445.4,569.7 L445.7,568.3 L446.1,566.9 L446.4,565.4 L446.7,564 L447,562.6 L447.4,561.2 L447.7,559.8 L448,558.4 L448.4,557 L448.7,555.7 L449,554.3 L449.4,552.9 L449.7,551.6 L450,550.2 L450.3,548.9 L450.7,547.6 L451,546.3 L451.3,545 L451.7,543.8 L452,542.5 L452.3,541.3 L452.6,540.1 L453,538.9 L453.3,537.7 L453.6,536.6 L454,535.4 L454.3,534.3 L454.6,533.3 L455,532.2 L455.3,531.2 L455.6,530.2 L455.9,529.2 L456.3,528.2 L456.6,527.3 L456.9,526.4 L457.3,525.5 L457.6,524.7 L457.9,523.9 L458.2,523.1 L458.6,522.3 L458.9,521.6 L459.2,520.9 L459.6,520.3 L459.9,519.6 L460.2,519 L460.6,518.5 L460.9,518 L461.2,517.5 L461.5,517 L461.9,516.6 L462.2,516.2 L462.5,515.8 L462.9,515.5 L463.2,515.2 L463.5,515 L463.8,514.8 L464.2,514.6 L464.5,514.5 L464.8,514.4 L465.2,514.3 L465.5,514.3 L465.8,514.3 L466.2,514.3 L466.5,514.4 L466.8,514.5 L467.1,514.7 L467.5,514.9 L467.8,515.1 L468.1,515.3 L468.5,515.6 L468.8,516 L469.1,516.3 L469.4,516.7 L469.8,517.2 L470.1,517.6 L470.4,518.1 L470.8,518.7 M445.4,569.7 L445.2,568.3 L444.9,566.9 L444.7,565.4 L444.5,564 L444.2,562.6 L444,561.2 L443.7,559.8 L443.5,558.4 L443.3,556.9 L443,555.5 L442.8,554.1 L442.6,552.7 L442.3,551.3 L442.1,549.9 L441.8,548.5 L441.6,547.1 L441.4,545.8 L441.1,544.4 L440.9,543 L440.7,541.6 L440.4,540.2 L440.2,538.9 L439.9,537.5 L439.7,536.2 L439.5,534.8 L439.2,533.5 L439,532.1 L438.8,530.8 L438.5,529.5 L438.3,528.1 L438,526.8 L437.8,525.5 L437.6,524.2 L437.3,522.9 L437.1,521.6 L436.9,520.4 L436.6,519.1 L436.4,517.8 L436.1,516.6 L435.9,515.4 L435.7,514.1 L435.4,512.9 L435.2,511.7 L435,510.5 L434.7,509.3 L434.5,508.1 L434.3,506.9 M445.4,569.7 L446.5,571.1 L447.6,572.5 L448.7,574 L449.9,575.4 L451,576.8 L452.1,578.2 L453.2,579.6 L454.3,581.1 L455.4,582.5 L456.5,583.9 L457.7,585.3 L458.8,586.7 L459.9,588.2 L461,589.6 L462.1,591 L463.2,592.4 L464.3,593.8 L465.5,595.2 L466.6,596.7 L467.7,598.1 L468.8,599.5 L469.9,600.9 L471,602.3 L472.1,603.8 L473.3,605.2 L474.4,606.6 L475.5,608 L476.6,609.4 L477.7,610.8 L478.8,612.3 L479.9,613.7 L481.1,615.1 L482.2,616.5 L483.3,617.9 L484.4,619.3 L485.5,620.7 L486.6,622.2 L487.7,623.6 L488.9,625 L490,626.4 L491.1,627.8 L492.2,629.2 L493.3,630.6 L494.4,632 M445.4,569.7 L445.3,568.3 L445.1,566.9 L445,565.4 L444.8,564 L444.7,562.6 L444.6,561.2 L444.4,559.8 L444.3,558.4 L444.1,557 L444,555.5 L443.9,554.1 L443.7,552.7 L443.6,551.3 L443.4,549.9 L443.3,548.6 L443.2,547.2 L443,545.8 L442.9,544.4 L442.8,543 L442.6,541.7 L442.5,540.3 L442.3,538.9 L442.2,537.6 L442.1,536.2 L441.9,534.9 L441.8,533.6 L441.6,532.2 L441.5,530.9 L441.4,529.6 L441.2,528.3 L441.1,527 L440.9,525.7 L440.8,524.5 L440.7,523.2 L440.5,521.9 L440.4,520.7 L440.2,519.4 L440.1,518.2 L440,517 L439.8,515.8 L439.7,514.6 L439.5,513.4 L439.4,512.2 L439.3,511 L439.1,509.9 L439,508.7 L438.9,507.6 L438.7,506.5 M445.4,569.7 L446.5,571.1 L447.7,572.5 L448.8,574 L449.9,575.4 L451,576.8 L452.2,578.2 L453.3,579.6 L454.4,581 L455.6,582.4 L456.7,583.8 L457.8,585.2 L458.9,586.6 L460.1,588 L461.2,589.4 L462.3,590.8 L463.5,592.1 L464.6,593.5 L465.7,594.9 L466.8,596.2 L468,597.6 L469.1,598.9 L470.2,600.2 L471.3,601.5 L472.5,602.8 L473.6,604.1 L474.7,605.4 L475.9,606.7 L477,608 L478.1,609.2 L479.2,610.5 L480.4,611.7 L481.5,612.9 L482.6,614.1 L483.8,615.3 L484.9,616.5 L486,617.7 L487.1,618.8 L488.3,620 L489.4,621.1 M445.4,569.7 L445,571.1 L444.6,572.5 L444.3,574 L443.9,575.4 L443.5,576.8 L443.1,578.2 L442.7,579.6 L442.4,581 L442,582.4 L441.6,583.7 L441.2,585.1 L440.8,586.4 L440.5,587.8 L440.1,589.1 L439.7,590.4 L439.3,591.7 L438.9,593 L438.6,594.2 L438.2,595.5 L437.8,596.7 L437.4,597.9 L437,599.1 L436.7,600.2 L436.3,601.4 L435.9,602.5 L435.5,603.6 L435.1,604.6 L434.8,605.7 L434.4,606.7 L434,607.6 L433.6,608.6 L433.2,609.5 L432.9,610.4 L432.5,611.3 L432.1,612.1 L431.7,612.9 L431.3,613.6 L431,614.4 L430.6,615.1 L430.2,615.7 L429.8,616.4 L429.4,617 L429.1,617.5 L428.7,618 L428.3,618.5 L427.9,619 L427.5,619.4 L427.2,619.8 L426.8,620.1 L426.4,620.4 L426,620.6 L425.6,620.9 L425.3,621.1 L424.9,621.2 L424.5,621.3 L424.1,621.4 L423.7,621.4 L423.4,621.4 L423,621.3 L422.6,621.2 L422.2,621.1 L421.8,620.9 L421.5,620.7 L421.1,620.5 L420.7,620.2 L420.3,619.9 L419.9,619.5 L419.5,619.1 L419.2,618.7 L418.8,618.2 L418.4,617.7 L418,617.2 M445.4,569.7 L444.4,571.1 L443.4,572.5 L442.4,574 L441.4,575.4 L440.4,576.8 L439.4,578.2 L438.5,579.6 L437.5,581 L436.5,582.4 L435.5,583.8 L434.5,585.2 L433.5,586.6 L432.5,588 L431.5,589.4 L430.5,590.7 L429.5,592.1 L428.5,593.5 L427.5,594.8 L426.6,596.2 L425.6,597.5 L424.6,598.8 L423.6,600.1 L422.6,601.4 L421.6,602.7 L420.6,604 L419.6,605.3 L418.6,606.5 L417.6,607.8 L416.6,609 L415.6,610.2 L414.7,611.5 L413.7,612.6 L412.7,613.8 L411.7,615 L410.7,616.1 L409.7,617.3 L408.7,618.4 L407.7,619.5 L406.7,620.6 L405.7,621.7 L404.7,622.7 L403.7,623.8 L402.8,624.8 L401.8,625.8 L400.8,626.8 L399.8,627.7 L398.8,628.7 L397.8,629.6 L396.8,630.5 L395.8,631.4 L394.8,632.3 M445.4,569.7 L445.1,571.1 L444.8,572.5 L444.6,574 L444.3,575.4 L444,576.8 L443.7,578.2 L443.5,579.6 L443.2,581 L442.9,582.4 L442.6,583.9 L442.3,585.3 L442.1,586.7 L441.8,588.1 L441.5,589.5 L441.2,590.8 L441,592.2 L440.7,593.6 L440.4,595 L440.1,596.4 L439.8,597.7 L439.6,599.1 L439.3,600.4 L439,601.8 L438.7,603.1 L438.4,604.5 L438.2,605.8 L437.9,607.1 L437.6,608.4 L437.3,609.7 L437.1,611 L436.8,612.3 L436.5,613.6 L436.2,614.9 L435.9,616.2 L435.7,617.4 L435.4,618.7 L435.1,619.9 L434.8,621.1 L434.6,622.3 L434.3,623.5 L434,624.7 L433.7,625.9 L433.4,627.1 L433.2,628.2 L432.9,629.4 L432.6,630.5 L432.3,631.7 L432.1,632.8 M445.4,569.7 L444.7,568.3 L444,566.9 L443.3,565.4 L442.6,564 L441.9,562.6 L441.2,561.2 L440.5,559.8 L439.8,558.3 L439.1,556.9 L438.4,555.5 L437.7,554.1 L437,552.7 L436.3,551.3 L435.6,549.9 L434.9,548.5 L434.2,547.1 L433.5,545.7 L432.8,544.3 L432.1,542.9 L431.4,541.5 L430.7,540.1 L430,538.7 L429.3,537.3 L428.6,535.9 L427.9,534.5 L427.2,533.1 L426.5,531.7 L425.8,530.4 L425.1,529 L424.4,527.6 M445.4,569.7 L445.6,571.1 L445.8,572.5 L446,574 L446.2,575.4 L446.4,576.8 L446.6,578.2 L446.8,579.6 L447,581 L447.2,582.4 L447.4,583.9 L447.6,585.3 L447.7,586.7 L447.9,588.1 L448.1,589.5 L448.3,590.9 L448.5,592.2 L448.7,593.6 L448.9,595 L449.1,596.4 L449.3,597.7 L449.5,599.1 L449.7,600.5 L449.9,601.8 L450.1,603.2 L450.3,604.5 L450.5,605.8 L450.7,607.2 L450.9,608.5 L451.1,609.8 L451.3,611.1 L451.5,612.4 L451.7,613.7 L451.9,615 L452.1,616.3 L452.3,617.5 L452.4,618.8 L452.6,620 L452.8,621.3 L453,622.5 L453.2,623.7 L453.4,624.9 L453.6,626.1 L453.8,627.3 L454,628.5 L454.2,629.6 L454.4,630.8 L454.6,631.9 M445.4,569.7 L446.6,571.1 L447.8,572.5 L449,574 L450.2,575.4 L451.4,576.8 L452.6,578.2 L453.8,579.6 L455,581.1 L456.2,582.5 L457.4,583.9 L458.6,585.3 L459.8,586.7 L461,588.1 L462.2,589.6 L463.4,591 L464.6,592.4 L465.9,593.8 L467.1,595.2 L468.3,596.6 L469.5,598 L470.7,599.4 L471.9,600.8 L473.1,602.2 L474.3,603.6 L475.5,605 L476.7,606.4 L477.9,607.8 L479.1,609.2 L480.3,610.6 L481.5,612 L482.7,613.4 L483.9,614.8 L485.1,616.2 L486.3,617.6 L487.5,619 L488.7,620.4 L489.9,621.7 L491.1,623.1 L492.3,624.5 L493.5,625.9 L494.7,627.2 L495.9,628.6 L497.1,630 L498.3,631.3 L499.5,632.7 M445.4,569.7 L445.4,568.3 L445.5,566.9 L445.5,565.4 L445.6,564 L445.6,562.6 L445.7,561.2 L445.7,559.8 L445.7,558.4 L445.8,557 L445.8,555.6 L445.9,554.2 L445.9,552.8 L445.9,551.4 L446,550 L446,548.6 L446.1,547.2 L446.1,545.9 L446.2,544.5 L446.2,543.2 L446.2,541.8 L446.3,540.5 L446.3,539.1 L446.4,537.8 L446.4,536.5 L446.5,535.2 L446.5,533.9 L446.5,532.6 L446.6,531.3 L446.6,530.1 L446.7,528.8 L446.7,527.6 L446.7,526.3 L446.8,525.1 L446.8,523.9 L446.9,522.7 L446.9,521.5 L447,520.4 L447,519.2 L447,518.1 L447.1,516.9 L447.1,515.8 L447.2,514.7 L447.2,513.6 L447.2,512.6 L447.3,511.5 L447.3,510.5 L447.4,509.5 L447.4,508.5 L447.5,507.5 M445.4,569.7 L446.8,568.3 L448.2,566.9 L449.6,565.4 L451,564 L452.4,562.6 L453.8,561.2 L455.2,559.8 L456.6,558.3 L458.1,556.9 L459.5,555.5 L460.9,554.1 L462.3,552.7 L463.7,551.2 L465.1,549.8 L466.5,548.4 L467.9,547 L469.3,545.6 L470.7,544.2 L472.1,542.7 L473.5,541.3 L474.9,539.9 L476.3,538.5 L477.7,537.1 L479.1,535.7 L480.5,534.3 L481.9,532.9 L483.4,531.4 L484.8,530 L486.2,528.6 L487.6,527.2 L489,525.8 L490.4,524.4 L491.8,523 L493.2,521.6 L494.6,520.2 L496,518.8 L497.4,517.4 L498.8,516 L500.2,514.6 L501.6,513.2 L503,511.8 L504.4,510.4 L505.8,509 L507.2,507.6 M445.4,569.7 L444.7,568.3 L443.9,566.9 L443.2,565.4 L442.4,564 L441.7,562.6 L440.9,561.2 L440.2,559.8 L439.4,558.4 L438.7,557 L437.9,555.6 L437.2,554.3 L436.4,552.9 L435.7,551.6 L434.9,550.2 L434.2,548.9 L433.4,547.6 L432.7,546.3 L431.9,545 L431.2,543.7 L430.4,542.4 L429.7,541.2 L428.9,540 L428.2,538.8 L427.4,537.6 L426.7,536.4 L425.9,535.3 L425.2,534.2 L424.4,533.1 L423.7,532 L422.9,530.9 L422.2,529.9 L421.4,528.9 L420.7,527.9 L419.9,526.9 L419.2,526 L418.4,525.1 L417.7,524.2 L416.9,523.4 L416.2,522.6 L415.4,521.8 L414.7,521 L413.9,520.3 L413.2,519.6 L412.4,518.9 L411.7,518.3 L410.9,517.6 L410.2,517.1 L409.4,516.5 L408.7,516 L407.9,515.5 L407.2,515.1 L406.4,514.7 L405.7,514.3 L404.9,514 L404.2,513.7 L403.4,513.4 L402.7,513.1 L401.9,512.9 L401.2,512.8 L400.4,512.6 L399.7,512.5 L398.9,512.5 L398.2,512.4 L397.4,512.4 L396.7,512.5 L395.9,512.6 L395.2,512.7 L394.4,512.8 L393.7,513 L392.9,513.2 L392.2,513.5 L391.4,513.7 L390.7,514.1 L389.9,514.4 L389.2,514.8 L388.4,515.2 L387.7,515.7 L386.9,516.2 L386.2,516.7 L385.4,517.2 M445.4,569.7 L445.4,568.3 L445.4,566.9 L445.4,565.4 L445.4,564 L445.3,562.6 L445.3,561.2 L445.3,559.8 L445.3,558.4 L445.3,557 L445.3,555.6 L445.3,554.2 L445.3,552.8 L445.3,551.5 L445.2,550.1 L445.2,548.7 L445.2,547.4 L445.2,546.1 L445.2,544.7 L445.2,543.4 L445.2,542.1 L445.2,540.8 L445.2,539.5 L445.1,538.3 L445.1,537 L445.1,535.8 L445.1,534.6 L445.1,533.3 L445.1,532.2 L445.1,531 L445.1,529.8 L445,528.7 L445,527.5 L445,526.4 L445,525.4 L445,524.3 L445,523.2 L445,522.2 L445,521.2 L445,520.2 L444.9,519.2 L444.9,518.3 L444.9,517.4 L444.9,516.5 L444.9,515.6 L444.9,514.7 L444.9,513.9 L444.9,513.1 L444.9,512.3 L444.8,511.6 L444.8,510.8 L444.8,510.1 L444.8,509.5 L444.8,508.8 L444.8,508.2 M445.4,569.7 L445.4,568.3 L445.4,566.9 L445.4,565.4 L445.5,564 L445.5,562.6 L445.5,561.2 L445.5,559.8 L445.5,558.3 L445.5,556.9 L445.5,555.5 L445.6,554.1 L445.6,552.7 L445.6,551.2 L445.6,549.8 L445.6,548.4 L445.6,547 L445.6,545.6 L445.7,544.2 L445.7,542.7 L445.7,541.3 L445.7,539.9 L445.7,538.5 L445.7,537.1 L445.7,535.7 L445.8,534.2 L445.8,532.8 L445.8,531.4 L445.8,530 L445.8,528.6 L445.8,527.2 L445.8,525.8 L445.8,524.4 L445.9,522.9 L445.9,521.5 L445.9,520.1 L445.9,518.7 L445.9,517.3 L445.9,515.9 L445.9,514.5 L446,513.1 L446,511.7 L446,510.3 L446,508.9 L446,507.5 M445.4,569.7 L446,571.1 L446.5,572.5 L447.1,574 L447.7,575.4 L448.2,576.8 L448.8,578.2 L449.4,579.6 L450,581.1 L450.5,582.5 L451.1,583.9 L451.7,585.3 L452.2,586.7 L452.8,588.2 L453.4,589.6 L453.9,591 L454.5,592.4 L455.1,593.8 L455.6,595.2 L456.2,596.7 L456.8,598.1 L457.4,599.5 L457.9,600.9 L458.5,602.3 L459.1,603.7 L459.6,605.1 L460.2,606.6 L460.8,608 L461.3,609.4 L461.9,610.8 L462.5,612.2 L463,613.6 L463.6,615 L464.2,616.4 L464.8,617.8 L465.3,619.2 L465.9,620.7 L466.5,622.1 L467,623.5 L467.6,624.9 M445.4,569.7 L446.2,568.3 L446.9,566.9 L447.7,565.4 L448.4,564 L449.2,562.6 L450,561.2 L450.7,559.8 L451.5,558.4 L452.2,557.1 L453,555.7 L453.7,554.3 L454.5,553 L455.3,551.7 L456,550.3 L456.8,549 L457.5,547.8 L458.3,546.5 L459.1,545.2 L459.8,544 L460.6,542.8 L461.3,541.6 L462.1,540.5 L462.9,539.3 L463.6,538.2 L464.4,537.1 L465.1,536.1 L465.9,535 L466.7,534 L467.4,533 L468.2,532.1 L468.9,531.2 L469.7,530.3 L470.4,529.4 L471.2,528.6 L472,527.8 L472.7,527.1 L473.5,526.3 L474.2,525.6 L475,525 L475.8,524.4 L476.5,523.8 L477.3,523.3 L478,522.8 L478.8,522.3 L479.6,521.9 L480.3,521.5 L481.1,521.1 L481.8,520.8 L482.6,520.6 L483.3,520.3 L484.1,520.1 L484.9,520 L485.6,519.9 L486.4,519.8 L487.1,519.8 L487.9,519.8 L488.7,519.8 L489.4,519.9 L490.2,520.1 L490.9,520.2 L491.7,520.4 L492.5,520.7 L493.2,521 L494,521.3 L494.7,521.7 L495.5,522.1 L496.3,522.5 L497,523 L497.8,523.5 L498.5,524.1 M445.4,569.7 L445,568.3 L444.5,566.9 L444.1,565.4 L443.7,564 L443.3,562.6 L442.8,561.2 L442.4,559.8 L442,558.3 L441.6,556.9 L441.1,555.5 L440.7,554.1 L440.3,552.7 L439.9,551.3 L439.4,549.9 L439,548.4 L438.6,547 L438.2,545.6 L437.7,544.2 L437.3,542.8 L436.9,541.4 L436.4,540 L436,538.6 L435.6,537.2 L435.2,535.8 L434.7,534.4 L434.3,533 L433.9,531.6 L433.5,530.2 L433,528.9 L432.6,527.5 L432.2,526.1 L431.8,524.7 L431.3,523.3 L430.9,522 L430.5,520.6 L430.1,519.2 L429.6,517.9 L429.2,516.5 L428.8,515.1 L428.4,513.8 L427.9,512.4 L427.5,511.1 L427.1,509.7 L426.6,508.4 L426.2,507.1" fill="none" stroke="#ff00ff" stroke-width="1.2" shape-rendering="crispEdges"/>
</svg></div><!--/gl2-->
  <!-- vertical splitter 2 -->
  <div class="a" style="left:528.5px;top:495px;width:1px;height:92px;background:repeating-linear-gradient(#8a8a8a 0 1px,transparent 1px 3px)"></div>
  <svg class="a" style="left:526px;top:487px" width="8" height="8" viewBox="0 0 8 8"><path d="M2,1 L5.5,4 L2,7" fill="none" stroke="#000" stroke-width="1.6"/></svg>
  <svg class="a" style="left:526px;top:587px" width="8" height="8" viewBox="0 0 8 8"><path d="M2,1 L5.5,4 L2,7" fill="none" stroke="#000" stroke-width="1.6"/></svg>
  <!-- middle GL frame -->
  <div class="a" style="left:531px;top:420px;width:324px;height:244px;border-top:3px solid #8c8c8c;border-left:2px solid #8c8c8c;border-bottom:4px solid #fff;border-right:2px solid #fff"></div>
  <div class="a" id="gl3" style="left:533px;top:423px;width:320px;height:237px;border:2px solid #22fb22;background:#000;overflow:hidden"><div class="a btn" style="left:10px;top:8px;width:56px;height:17px">Swap</div><div class="a btn" style="left:70px;top:8px;width:56px;height:17px">Undock</div><svg width="316" height="233" viewBox="591 457 316 233" style="position:absolute;left:0;top:0">
<g stroke="#4c4c4c" stroke-width="1" fill="none">
<path d="M594.5,478 V665"/>
<path d="M594.5,664.2 h1.5 M905.5,664.2 h-1.5 M594.5,662.3 h1.5 M905.5,662.3 h-1.5 M594.5,660.4 h1.5 M905.5,660.4 h-1.5 M594.5,658.5 h4.5 M905.5,658.5 h-4.5 M594.5,656.6 h1.5 M905.5,656.6 h-1.5 M594.5,654.7 h1.5 M905.5,654.7 h-1.5 M594.5,652.8 h1.5 M905.5,652.8 h-1.5 M594.5,650.9 h1.5 M905.5,650.9 h-1.5 M594.5,649 h2.5 M905.5,649 h-2.5 M594.5,647 h1.5 M905.5,647 h-1.5 M594.5,645.1 h1.5 M905.5,645.1 h-1.5 M594.5,643.2 h1.5 M905.5,643.2 h-1.5 M594.5,641.3 h1.5 M905.5,641.3 h-1.5 M594.5,639.4 h4.5 M905.5,639.4 h-4.5 M594.5,637.5 h1.5 M905.5,637.5 h-1.5 M594.5,635.6 h1.5 M905.5,635.6 h-1.5 M594.5,633.7 h1.5 M905.5,633.7 h-1.5 M594.5,631.8 h1.5 M905.5,631.8 h-1.5 M594.5,629.9 h2.5 M905.5,629.9 h-2.5 M594.5,627.9 h1.5 M905.5,627.9 h-1.5 M594.5,626 h1.5 M905.5,626 h-1.5 M594.5,624.1 h1.5 M905.5,624.1 h-1.5 M594.5,622.2 h1.5 M905.5,622.2 h-1.5 M594.5,620.3 h4.5 M905.5,620.3 h-4.5 M594.5,618.4 h1.5 M905.5,618.4 h-1.5 M594.5,616.5 h1.5 M905.5,616.5 h-1.5 M594.5,614.6 h1.5 M905.5,614.6 h-1.5 M594.5,612.7 h1.5 M905.5,612.7 h-1.5 M594.5,610.8 h2.5 M905.5,610.8 h-2.5 M594.5,608.8 h1.5 M905.5,608.8 h-1.5 M594.5,606.9 h1.5 M905.5,606.9 h-1.5 M594.5,605 h1.5 M905.5,605 h-1.5 M594.5,603.1 h1.5 M905.5,603.1 h-1.5 M594.5,601.2 h4.5 M905.5,601.2 h-4.5 M594.5,599.3 h1.5 M905.5,599.3 h-1.5 M594.5,597.4 h1.5 M905.5,597.4 h-1.5 M594.5,595.5 h1.5 M905.5,595.5 h-1.5 M594.5,593.6 h1.5 M905.5,593.6 h-1.5 M594.5,591.6 h2.5 M905.5,591.6 h-2.5 M594.5,589.7 h1.5 M905.5,589.7 h-1.5 M594.5,587.8 h1.5 M905.5,587.8 h-1.5 M594.5,585.9 h1.5 M905.5,585.9 h-1.5 M594.5,584 h1.5 M905.5,584 h-1.5 M594.5,582.1 h4.5 M905.5,582.1 h-4.5 M594.5,580.2 h1.5 M905.5,580.2 h-1.5 M594.5,578.3 h1.5 M905.5,578.3 h-1.5 M594.5,576.4 h1.5 M905.5,576.4 h-1.5 M594.5,574.5 h1.5 M905.5,574.5 h-1.5 M594.5,572.5 h2.5 M905.5,572.5 h-2.5 M594.5,570.6 h1.5 M905.5,570.6 h-1.5 M594.5,568.7 h1.5 M905.5,568.7 h-1.5 M594.5,566.8 h1.5 M905.5,566.8 h-1.5 M594.5,564.9 h1.5 M905.5,564.9 h-1.5 M594.5,563 h4.5 M905.5,563 h-4.5 M594.5,561.1 h1.5 M905.5,561.1 h-1.5 M594.5,559.2 h1.5 M905.5,559.2 h-1.5 M594.5,557.3 h1.5 M905.5,557.3 h-1.5 M594.5,555.4 h1.5 M905.5,555.4 h-1.5 M594.5,553.5 h2.5 M905.5,553.5 h-2.5 M594.5,551.5 h1.5 M905.5,551.5 h-1.5 M594.5,549.6 h1.5 M905.5,549.6 h-1.5 M594.5,547.7 h1.5 M905.5,547.7 h-1.5 M594.5,545.8 h1.5 M905.5,545.8 h-1.5 M594.5,543.9 h4.5 M905.5,543.9 h-4.5 M594.5,542 h1.5 M905.5,542 h-1.5 M594.5,540.1 h1.5 M905.5,540.1 h-1.5 M594.5,538.2 h1.5 M905.5,538.2 h-1.5 M594.5,536.3 h1.5 M905.5,536.3 h-1.5 M594.5,534.4 h2.5 M905.5,534.4 h-2.5 M594.5,532.4 h1.5 M905.5,532.4 h-1.5 M594.5,530.5 h1.5 M905.5,530.5 h-1.5 M594.5,528.6 h1.5 M905.5,528.6 h-1.5 M594.5,526.7 h1.5 M905.5,526.7 h-1.5 M594.5,524.8 h4.5 M905.5,524.8 h-4.5 M594.5,522.9 h1.5 M905.5,522.9 h-1.5 M594.5,521 h1.5 M905.5,521 h-1.5 M594.5,519.1 h1.5 M905.5,519.1 h-1.5 M594.5,517.2 h1.5 M905.5,517.2 h-1.5 M594.5,515.2 h2.5 M905.5,515.2 h-2.5 M594.5,513.3 h1.5 M905.5,513.3 h-1.5 M594.5,511.4 h1.5 M905.5,511.4 h-1.5 M594.5,509.5 h1.5 M905.5,509.5 h-1.5 M594.5,507.6 h1.5 M905.5,507.6 h-1.5 M594.5,505.7 h4.5 M905.5,505.7 h-4.5 M594.5,503.8 h1.5 M905.5,503.8 h-1.5 M594.5,501.9 h1.5 M905.5,501.9 h-1.5 M594.5,500 h1.5 M905.5,500 h-1.5 M594.5,498.1 h1.5 M905.5,498.1 h-1.5 M594.5,496.1 h2.5 M905.5,496.1 h-2.5 M594.5,494.2 h1.5 M905.5,494.2 h-1.5 M594.5,492.3 h1.5 M905.5,492.3 h-1.5 M594.5,490.4 h1.5 M905.5,490.4 h-1.5 M594.5,488.5 h1.5 M905.5,488.5 h-1.5 M594.5,486.6 h4.5 M905.5,486.6 h-4.5 M594.5,484.7 h1.5 M905.5,484.7 h-1.5 M594.5,482.8 h1.5 M905.5,482.8 h-1.5 M594.5,480.9 h1.5 M905.5,480.9 h-1.5 M594.5,479 h1.5 M905.5,479 h-1.5 M628.7,687.5 v-4.5 M628.7,457 v4.5 M632.5,687.5 v-2.5 M636.3,687.5 v-2.5 M640.2,687.5 v-2.5 M644,687.5 v-2.5 M647.8,687.5 v-2.5 M651.6,687.5 v-2.5 M655.4,687.5 v-2.5 M659.3,687.5 v-2.5 M663.1,687.5 v-2.5 M666.9,687.5 v-4.5 M666.9,457 v4.5 M670.7,687.5 v-2.5 M674.5,687.5 v-2.5 M678.4,687.5 v-2.5 M682.2,687.5 v-2.5 M686,687.5 v-2.5 M689.8,687.5 v-2.5 M693.6,687.5 v-2.5 M697.5,687.5 v-2.5 M701.3,687.5 v-2.5 M705.1,687.5 v-4.5 M705.1,457 v4.5 M708.9,687.5 v-2.5 M712.7,687.5 v-2.5 M716.6,687.5 v-2.5 M720.4,687.5 v-2.5 M724.2,687.5 v-2.5 M728,687.5 v-2.5 M731.8,687.5 v-2.5 M735.7,687.5 v-2.5 M739.5,687.5 v-2.5 M743.3,687.5 v-4.5 M743.3,457 v4.5 M747.1,687.5 v-2.5 M750.9,687.5 v-2.5 M754.8,687.5 v-2.5 M758.6,687.5 v-2.5 M762.4,687.5 v-2.5 M766.2,687.5 v-2.5 M770,687.5 v-2.5 M773.9,687.5 v-2.5 M777.7,687.5 v-2.5 M781.5,687.5 v-4.5 M781.5,457 v4.5 M785.3,687.5 v-2.5 M789.1,687.5 v-2.5 M793,687.5 v-2.5 M796.8,687.5 v-2.5 M800.6,687.5 v-2.5 M804.4,687.5 v-2.5 M808.2,687.5 v-2.5 M812.1,687.5 v-2.5 M815.9,687.5 v-2.5 M819.7,687.5 v-4.5 M819.7,457 v4.5 M823.5,687.5 v-2.5 M827.3,687.5 v-2.5 M831.2,687.5 v-2.5 M835,687.5 v-2.5 M838.8,687.5 v-2.5 M842.6,687.5 v-2.5 M846.4,687.5 v-2.5 M850.3,687.5 v-2.5 M854.1,687.5 v-2.5 M857.9,687.5 v-4.5 M857.9,457 v4.5 M861.7,687.5 v-2.5 M865.5,687.5 v-2.5 M869.4,687.5 v-2.5 M873.2,687.5 v-2.5 M877,687.5 v-2.5"/>
<path d="M632.5,457 v2.5 M636.3,457 v2.5 M640.2,457 v2.5 M644,457 v2.5 M647.8,457 v2.5 M651.6,457 v2.5 M655.4,457 v2.5 M659.3,457 v2.5 M663.1,457 v2.5 M670.7,457 v2.5 M674.5,457 v2.5 M678.4,457 v2.5 M682.2,457 v2.5 M686,457 v2.5 M689.8,457 v2.5 M693.6,457 v2.5 M697.5,457 v2.5 M701.3,457 v2.5 M708.9,457 v2.5 M712.7,457 v2.5 M716.6,457 v2.5 M720.4,457 v2.5 M724.2,457 v2.5 M728,457 v2.5 M731.8,457 v2.5 M735.7,457 v2.5 M739.5,457 v2.5 M747.1,457 v2.5 M750.9,457 v2.5 M754.8,457 v2.5 M758.6,457 v2.5 M762.4,457 v2.5 M766.2,457 v2.5 M770,457 v2.5 M773.9,457 v2.5 M777.7,457 v2.5 M785.3,457 v2.5 M789.1,457 v2.5 M793,457 v2.5 M796.8,457 v2.5 M800.6,457 v2.5 M804.4,457 v2.5 M808.2,457 v2.5 M812.1,457 v2.5 M815.9,457 v2.5 M823.5,457 v2.5 M827.3,457 v2.5 M831.2,457 v2.5 M835,457 v2.5 M838.8,457 v2.5 M842.6,457 v2.5 M846.4,457 v2.5 M850.3,457 v2.5 M854.1,457 v2.5 M861.7,457 v2.5 M865.5,457 v2.5 M869.4,457 v2.5 M873.2,457 v2.5 M877,457 v2.5" stroke="#2e2e2e"/>
<path d="M626,687.5 H877"/>
</g>
<g font-family="Liberation Sans" font-size="9.7" fill="#525252" stroke="#525252" stroke-width="0.3">
<text x="628.7" y="471.6" text-anchor="middle">-600</text>
<text x="628.7" y="677.4" text-anchor="middle">-600</text>
<text x="666.9" y="471.6" text-anchor="middle">-400</text>
<text x="666.9" y="677.4" text-anchor="middle">-400</text>
<text x="705.1" y="471.6" text-anchor="middle">-200</text>
<text x="705.1" y="677.4" text-anchor="middle">-200</text>
<text x="743.3" y="471.6" text-anchor="middle">0</text>
<text x="743.3" y="677.4" text-anchor="middle">0</text>
<text x="781.5" y="471.6" text-anchor="middle">200</text>
<text x="781.5" y="677.4" text-anchor="middle">200</text>
<text x="819.7" y="471.6" text-anchor="middle">400</text>
<text x="819.7" y="677.4" text-anchor="middle">400</text>
<text x="857.9" y="471.6" text-anchor="middle">600</text>
<text x="857.9" y="677.4" text-anchor="middle">600</text>
<text x="603" y="662">-500</text>
<text x="899.6" y="662" text-anchor="end">-500</text>
<text x="603" y="642.9">-400</text>
<text x="899.6" y="642.9" text-anchor="end">-400</text>
<text x="603" y="623.8">-300</text>
<text x="899.6" y="623.8" text-anchor="end">-300</text>
<text x="603" y="604.7">-200</text>
<text x="899.6" y="604.7" text-anchor="end">-200</text>
<text x="603" y="585.6">-100</text>
<text x="899.6" y="585.6" text-anchor="end">-100</text>
<text x="603" y="566.5">0</text>
<text x="899.6" y="566.5" text-anchor="end">0</text>
<text x="603" y="547.4">100</text>
<text x="899.6" y="547.4" text-anchor="end">100</text>
<text x="603" y="528.3">200</text>
<text x="899.6" y="528.3" text-anchor="end">200</text>
<text x="603" y="509.2">300</text>
<text x="899.6" y="509.2" text-anchor="end">300</text>
<text x="603" y="490.1">400</text>
<text x="899.6" y="490.1" text-anchor="end">400</text>
</g>
<path d="M677.8,618 L667.7,626.4 L693.9,648.5 L700.5,637 Z" fill="#c99c21" stroke="#000" stroke-width="1.2"/>
<path d="M700.5,637 L693.9,648.5 L726.2,660.2 L728.5,647.2 Z" fill="#c99c21" stroke="#000" stroke-width="1.2"/>
<path d="M728.5,647.2 L726.2,660.2 L760.4,660.2 L758.1,647.2 Z" fill="#c99c21" stroke="#000" stroke-width="1.2"/>
<path d="M758.1,647.2 L760.4,660.2 L792.6,648.5 L786,637 Z" fill="#c99c21" stroke="#000" stroke-width="1.2"/>
<path d="M786,637 L792.6,648.5 L818.9,626.4 L808.8,618 Z" fill="#c99c21" stroke="#000" stroke-width="1.2"/>
<path d="M825.3,562 L829.9,561.9 L825,534.4 L820.7,535.9 Z" fill="#4454e0"/>
<path d="M830.5,561.9 L835.1,561.9 L829.9,532.7 L825.6,534.2 Z" fill="#4454e0"/>
<path d="M835.7,561.9 L840.3,561.8 L834.8,530.9 L830.5,532.5 Z" fill="#4454e0"/>
<path d="M820,534 L824.3,532.4 L810.3,508.1 L806.8,511.1 Z" fill="#4454e0"/>
<path d="M824.9,532.2 L829.2,530.6 L814.3,504.9 L810.8,507.8 Z" fill="#4454e0"/>
<path d="M829.7,530.3 L834,528.7 L818.4,501.6 L814.8,504.5 Z" fill="#4454e0"/>
<path d="M805.5,509.5 L809,506.5 L787.5,488.5 L785.2,492.5 Z" fill="#4454e0"/>
<path d="M809.4,506.1 L812.9,503.1 L790.2,484.1 L787.8,488 Z" fill="#4454e0"/>
<path d="M813.4,502.7 L816.8,499.7 L792.8,479.6 L790.5,483.5 Z" fill="#4454e0"/>
<path d="M821.8,563 L817.1,536.2 L803.4,512.5 L782.5,495 L756.9,485.7 L729.7,485.7 L704,495 L683.2,512.5 L669.5,536.2 L664.8,563 L669.5,589.8 L683.2,613.5 L704,631 L729.7,640.3 L756.9,640.3 L782.5,631 L803.4,613.5 L817.1,589.8 Z" fill="none" stroke="#5c1b1f" stroke-width="3.2"/>
<circle cx="743.3" cy="563" r="49" fill="none" stroke="#3c5c60" stroke-width="1"/>
<circle cx="743.3" cy="563" r="31.5" fill="none" stroke="#898d87" stroke-width="31"/>
<path d="M743.3,563 L742.6,561.6 L741.8,560.3 L741,559 L740.2,557.7 L739.3,556.5 L738.4,555.3 L737.4,554.1 L736.4,552.9 L735.4,551.8 L734.3,550.7 L733.2,549.7 L732,548.7 L730.9,547.7 L729.6,546.8 L728.4,545.9 L727.1,545.1 L725.8,544.3 L724.5,543.5 L723.1,542.8 L721.7,542.2 L720.3,541.5 L718.9,541 L717.5,540.5 L716,540 L714.6,539.6 L713.1,539.2 L711.6,538.9 L710.1,538.6 L708.6,538.4 L707.1,538.2 L705.5,538.1 L704,538.1 L702.5,538 L700.9,538.1 L699.4,538.2 L697.9,538.3 L696.4,538.5 L694.9,538.8 L693.4,539.1 L691.9,539.4 L690.4,539.8 L689,540.3 L687.5,540.8 L686.1,541.3 L684.7,541.9 L683.3,542.5 L681.9,543.2 L680.6,543.9 L679.3,544.7 L678,545.5 M757.7,567.6 L759.2,567.7 L760.7,567.6 L762.3,567.5 L763.8,567.3 L765.3,567 L766.8,566.7 L768.2,566.3 L769.7,565.8 L771.1,565.2 L772.5,564.5 L773.8,563.8 L775.1,563 L776.4,562.2 L777.6,561.3 L778.8,560.3 L779.9,559.3 L781,558.2 L782,557 L783,555.8 L783.9,554.6 L784.7,553.3 L785.4,552 L786.1,550.6 L786.7,549.2 L787.3,547.8 L787.7,546.3 L788.1,544.8 L788.5,543.4 L788.7,541.8 L788.9,540.3 L788.9,538.8 L788.9,537.3 L788.9,535.7 L788.7,534.2 L788.5,532.7 L788.2,531.2 L787.8,529.7 L787.3,528.3 L786.8,526.9 L786.2,525.5 L785.5,524.1 L784.8,522.8 L783.9,521.5 L783.1,520.2 L782.1,519 L781.1,517.9 L780.1,516.8 L778.9,515.7 L777.8,514.7 L776.5,513.8 L775.3,513 L774,512.2 L772.6,511.4 L771.2,510.8 L769.8,510.2 L768.4,509.7 L766.9,509.3 L765.4,508.9 L763.9,508.6 L762.4,508.4 L760.9,508.3 L759.4,508.3 L757.9,508.3 L756.3,508.4 L754.8,508.6 L753.3,508.9 L751.8,509.2 M757.5,557.8 L759.1,557.7 L760.6,557.6 L762.1,557.6 L763.6,557.6 L765.2,557.7 L766.7,557.9 L768.2,558.1 L769.7,558.5 L771.2,558.8 L772.6,559.3 L774.1,559.8 L775.5,560.4 L776.9,561 L778.2,561.7 L779.6,562.5 L780.9,563.3 L782.1,564.1 L783.3,565.1 L784.5,566 L785.6,567.1 L786.7,568.2 L787.7,569.3 L788.7,570.5 L789.7,571.7 L790.5,572.9 L791.3,574.2 L792.1,575.5 L792.8,576.9 L793.4,578.3 L794,579.7 L794.5,581.1 L795,582.6 L795.4,584.1 L795.7,585.6 L795.9,587.1 L796.1,588.6 L796.2,590.1 L796.3,591.6 L796.3,593.2 L796.2,594.7 L796,596.2 L795.8,597.7 L795.5,599.2 L795.2,600.7 L794.7,602.2 L794.3,603.6 L793.7,605.1 L793.1,606.5 L792.4,607.8 L791.7,609.2 M731.6,553.2 L730.4,552.2 L729.3,551.1 L728.2,550.1 L727.1,549 L726,547.9 L725,546.9 L723.9,545.8 L722.8,544.7 L721.8,543.5 L720.8,542.4 L719.7,541.3 L718.7,540.1 L717.7,539 L716.7,537.8 L715.7,536.7 L714.8,535.5 L713.8,534.3 L712.9,533.1 L711.9,531.9 L711,530.7 L710.1,529.5 L709.2,528.2 L708.3,527 L707.4,525.7 L706.5,524.5 L705.7,523.2 L704.8,522 L704,520.7 L703.1,519.4 L702.3,518.1 L701.5,516.8 L700.7,515.5 L700,514.2 L699.2,512.9 L698.4,511.5 M743.3,563 L744.2,561.8 L745.2,560.6 L746.2,559.4 L747.1,558.2 L748.1,557.1 L749.1,555.9 L750.1,554.7 L751.1,553.6 L752.1,552.5 L753.1,551.3 L754.2,550.2 L755.2,549.1 L756.3,548 L757.3,546.9 L758.4,545.8 L759.5,544.7 L760.5,543.6 L761.6,542.5 L762.7,541.4 L763.8,540.4 L764.9,539.3 L766,538.3 L767.2,537.3 L768.3,536.2 L769.4,535.2 L770.6,534.2 L771.7,533.2 L772.9,532.2 L774.1,531.2 L775.2,530.2 L776.4,529.3 L777.6,528.3 L778.8,527.4 L780,526.4 L781.2,525.5 L782.4,524.6 L783.7,523.7 L784.9,522.7 L786.1,521.8 L787.4,521 L788.6,520.1 L789.9,519.2 L791.1,518.3 L792.4,517.5 M728.2,563.5 L726.7,563.1 L725.3,562.7 L723.8,562.1 L722.5,561.5 L721.1,560.8 L719.8,560.1 L718.5,559.2 L717.2,558.3 L716.1,557.4 L714.9,556.3 L713.8,555.3 L712.8,554.1 L711.9,552.9 L711,551.7 L710.2,550.4 L709.4,549.1 L708.7,547.7 L708.1,546.3 L707.6,544.9 L707.1,543.4 L706.7,541.9 L706.4,540.4 L706.2,538.9 L706.1,537.4 L706,535.9 L706,534.3 L706.1,532.8 L706.3,531.3 L706.6,529.8 L706.9,528.3 L707.3,526.8 L707.8,525.4 L708.4,524 L709.1,522.6 L709.8,521.3 L710.6,519.9 L711.4,518.7 L712.4,517.5 L713.3,516.3 L714.4,515.2 L715.5,514.1 L716.7,513.1 L717.9,512.2 L719.1,511.3 L720.4,510.5 L721.8,509.8 L723.2,509.2 L724.6,508.6 L726,508.1 L727.5,507.7 L729,507.3 L730.5,507 L732,506.8 L733.5,506.7 L735,506.7 L736.6,506.8 L738.1,506.9 L739.6,507.1 L741.1,507.4 L742.6,507.8 L744,508.2 L745.5,508.8 L746.9,509.4 L748.2,510 M728.2,565.6 L726.7,565.8 L725.2,566 L723.7,566.2 L722.2,566.4 L720.7,566.6 L719.1,566.8 L717.6,566.9 L716.1,567.1 L714.6,567.2 L713.1,567.3 L711.5,567.5 L710,567.6 L708.5,567.7 L707,567.8 L705.4,567.9 L703.9,568 L702.4,568.1 L700.9,568.1 L699.3,568.2 L697.8,568.2 L696.3,568.3 L694.8,568.3 L693.2,568.3 L691.7,568.3 L690.2,568.3 L688.6,568.3 L687.1,568.3 L685.6,568.3 L684.1,568.3 L682.5,568.3 L681,568.2 L679.5,568.2 L678,568.1 L676.4,568 M740.9,578 L741,579.6 L741.1,581.1 L741.2,582.6 L741.4,584.1 L741.6,585.6 L741.9,587.1 L742.2,588.6 L742.6,590.1 L743.1,591.6 L743.5,593 L744.1,594.4 L744.7,595.9 L745.3,597.3 L745.9,598.6 L746.7,600 L747.4,601.3 L748.2,602.6 L749,603.9 L749.9,605.1 L750.9,606.4 L751.8,607.5 L752.8,608.7 L753.9,609.8 L754.9,610.9 L756,611.9 L757.2,613 L758.4,613.9 L759.6,614.9 L760.8,615.8 L762.1,616.6 L763.4,617.4 L764.7,618.2 M743.3,563 L743,561.5 L742.7,560 L742.4,558.5 L742.2,557 L742,555.5 L741.9,553.9 L741.8,552.4 L741.8,550.9 L741.8,549.4 L741.9,547.8 L742,546.3 L742.1,544.8 L742.3,543.3 L742.5,541.8 L742.8,540.3 L743.1,538.8 L743.5,537.3 L743.9,535.8 L744.4,534.4 L744.8,532.9 L745.4,531.5 L745.9,530.1 L746.6,528.7 L747.2,527.3 L747.9,525.9 L748.6,524.6 L749.4,523.3 L750.2,522 L751.1,520.7 L751.9,519.4 L752.9,518.2 L753.8,517 L754.8,515.9 L755.8,514.7 L756.9,513.6 M758.5,564.1 L760,563.9 L761.5,563.7 L763,563.4 L764.5,563.1 L766,562.8 L767.5,562.3 L768.9,561.9 L770.3,561.4 L771.8,560.8 L773.2,560.2 L774.5,559.5 L775.9,558.8 L777.2,558.1 L778.5,557.3 L779.8,556.5 L781.1,555.6 L782.3,554.7 L783.5,553.7 L784.7,552.7 L785.8,551.7 L786.9,550.6 L787.9,549.5 L788.9,548.4 L789.9,547.2 L790.9,546 L791.8,544.7 L792.6,543.5 L793.4,542.2 L794.2,540.9 L794.9,539.5 L795.6,538.2 L796.2,536.8 L796.8,535.4 L797.4,533.9 L797.9,532.5 L798.3,531 L798.7,529.5 L799.1,528.1 L799.3,526.6 M731.6,553.4 L730.2,552.8 L728.8,552.3 L727.3,551.8 L725.8,551.4 L724.3,551.1 L722.8,550.9 L721.3,550.8 L719.8,550.7 L718.3,550.7 L716.7,550.8 L715.2,550.9 L713.7,551.2 L712.2,551.5 L710.7,551.9 L709.3,552.3 L707.8,552.9 L706.4,553.5 L705.1,554.2 L703.7,554.9 L702.4,555.7 L701.2,556.6 L700,557.5 L698.8,558.5 L697.7,559.6 L696.7,560.7 L695.7,561.9 L694.8,563.1 L693.9,564.4 L693.1,565.7 L692.4,567 L691.7,568.4 L691.2,569.8 L690.6,571.2 L690.2,572.7 L689.8,574.2 L689.5,575.7 L689.3,577.2 L689.2,578.7 L689.1,580.2 L689.1,581.8 L689.2,583.3 L689.4,584.8 L689.7,586.3 L690,587.8 L690.4,589.3 L690.9,590.7 L691.4,592.2 L692.1,593.6 L692.8,594.9 L693.5,596.2 M737.5,577.1 L737.2,578.6 L736.9,580.1 L736.6,581.6 L736.4,583.1 L736.3,584.6 L736.2,586.1 L736.1,587.7 L736.1,589.2 L736.1,590.7 L736.2,592.2 L736.3,593.8 L736.5,595.3 L736.7,596.8 L736.9,598.3 L737.2,599.8 L737.6,601.3 L737.9,602.8 L738.4,604.2 L738.9,605.7 L739.4,607.1 L739.9,608.6 L740.5,610 L741.2,611.3 L741.9,612.7 L742.6,614 L743.4,615.4 L744.2,616.7 L745,617.9 L745.9,619.2 L746.8,620.4 L747.8,621.6 L748.8,622.8 L749.8,623.9 L750.9,625 L752,626 L753.1,627.1 L754.2,628.1 L755.4,629 M743.3,563 L742.2,562 L741.1,560.9 L740.1,559.8 L739.1,558.6 L738.2,557.3 L737.3,556.1 L736.5,554.8 L735.8,553.4 L735.1,552.1 L734.5,550.7 L734,549.2 L733.5,547.8 L733.1,546.3 L732.8,544.8 L732.5,543.3 L732.3,541.8 L732.2,540.3 L732.2,538.7 L732.2,537.2 L732.3,535.7 L732.5,534.2 L732.7,532.7 L733,531.2 L733.4,529.7 L733.8,528.2 L734.3,526.8 L734.9,525.4 L735.6,524 L736.3,522.6 L737.1,521.3 L737.9,520 L738.8,518.8 L739.8,517.6 L740.8,516.5 L741.8,515.4 L742.9,514.3 L744.1,513.3 L745.3,512.4 L746.6,511.5 L747.8,510.7 L749.2,509.9 L750.5,509.2 L751.9,508.6 L753.3,508 L754.8,507.5 L756.2,507.1 L757.7,506.7 L759.2,506.4 L760.7,506.2 L762.3,506.1 L763.8,506 L765.3,506 L766.8,506.1 L768.4,506.2 L769.9,506.4 L771.4,506.7 L772.9,507 L774.3,507.5 L775.8,507.9 L777.2,508.5 L778.6,509.1 L780,509.8 L781.3,510.6 L782.6,511.4 L783.8,512.2 L785.1,513.2 L786.2,514.1 L787.4,515.2 L788.4,516.3 L789.4,517.4 L790.4,518.6 L791.3,519.8 L792.2,521.1 L792.9,522.4 L793.7,523.8 L794.3,525.1 L794.9,526.5 L795.5,528 L795.9,529.4 L796.3,530.9 L796.6,532.4 L796.9,533.9 L797.1,535.4 L797.2,537 M744.1,547.8 L743.9,546.3 L743.7,544.8 L743.5,543.3 L743.2,541.8 L742.8,540.3 L742.5,538.8 L742,537.3 L741.6,535.9 L741,534.4 L740.5,533 L739.9,531.6 L739.3,530.2 L738.6,528.8 L737.9,527.5 L737.1,526.2 L736.3,524.9 L735.5,523.6 L734.6,522.3 L733.7,521.1 L732.8,519.9 L731.8,518.7 L730.8,517.6 L729.7,516.5 L728.6,515.4 L727.5,514.3 L726.4,513.3 L725.2,512.3 L724,511.4 L722.8,510.5 L721.6,509.6 L720.3,508.7 L719,507.9 L717.7,507.2 L716.3,506.4 L715,505.8 L713.6,505.1 L712.2,504.5 L710.7,503.9 M754.4,573.5 L755.6,574.4 L756.8,575.4 L758,576.4 L759.2,577.3 L760.4,578.2 L761.6,579.1 L762.9,580 L764.1,580.9 L765.4,581.8 L766.6,582.7 L767.9,583.5 L769.2,584.3 L770.5,585.2 L771.8,586 L773.1,586.8 L774.4,587.5 L775.7,588.3 L777,589 L778.4,589.8 L779.7,590.5 L781.1,591.2 M731.3,553.6 L730.3,552.5 L729.2,551.3 L728.3,550.2 L727.3,549 L726.4,547.8 L725.5,546.5 L724.6,545.3 L723.8,544 L723,542.7 L722.3,541.3 L721.5,540 L720.9,538.6 L720.2,537.2 L719.6,535.8 L719,534.4 L718.5,533 L718,531.6 L717.5,530.1 L717.1,528.6 L716.7,527.1 L716.4,525.7 L716.1,524.2 L715.9,522.6 L715.6,521.1 L715.5,519.6 L715.3,518.1 L715.2,516.6 L715.2,515 L715.2,513.5 L715.2,512 L715.3,510.5 L715.4,508.9 L715.5,507.4 L715.7,505.9 L715.9,504.4 L716.2,502.9 L716.5,501.4 M743.3,563 L744,561.6 L744.6,560.2 L745.1,558.8 L745.7,557.4 L746.1,555.9 L746.6,554.5 L747,553 L747.3,551.5 L747.6,550 L747.8,548.5 L748,547 L748.1,545.4 L748.2,543.9 L748.3,542.4 L748.2,540.9 L748.2,539.3 L748.1,537.8 L747.9,536.3 L747.7,534.8 L747.4,533.3 L747.1,531.8 L746.8,530.3 L746.4,528.8 L745.9,527.3 L745.4,525.9 L744.9,524.5 L744.3,523.1 L743.6,521.7 L743,520.3 L742.2,519 L741.5,517.6 L740.7,516.4 L739.8,515.1 L738.9,513.8 L738,512.6 L737,511.5 L736,510.3 L734.9,509.2 L733.9,508.1 L732.7,507.1 L731.6,506.1 L730.4,505.1 L729.2,504.2 L727.9,503.3 L726.7,502.5 L725.4,501.6 L724.1,500.9 L722.7,500.2 L721.3,499.5 M751.8,550.3 L752.6,549 L753.3,547.6 L754,546.3 L754.7,544.9 L755.4,543.6 L756.1,542.2 L756.7,540.8 L757.4,539.4 L758,538 L758.6,536.6 L759.1,535.2 L759.7,533.8 L760.2,532.4 L760.8,530.9 L761.3,529.5 L761.8,528 L762.2,526.6 L762.7,525.1 L763.1,523.7 L763.5,522.2 L763.9,520.7 L764.3,519.2 L764.6,517.7 L764.9,516.2 L765.3,514.7 L765.5,513.2 L765.8,511.7 L766.1,510.2 L766.3,508.7 M728.5,566.5 L727,567 L725.6,567.6 L724.2,568.3 L722.9,568.9 L721.5,569.6 L720.2,570.4 L718.9,571.2 L717.6,572 L716.3,572.8 L715.1,573.7 L713.8,574.6 L712.6,575.6 L711.5,576.5 L710.3,577.5 L709.2,578.6 L708.1,579.7 L707,580.7 L706,581.9 L705,583 L704,584.2 L703.1,585.4 L702.2,586.6 L701.3,587.9 L700.4,589.2 L699.6,590.4 L698.8,591.8 L698.1,593.1 L697.4,594.5 L696.7,595.8 L696.1,597.2 L695.5,598.6 L694.9,600 L694.4,601.5 L693.9,602.9 L693.5,604.4 L693.1,605.9 L692.7,607.4 M733.3,551.5 L732.6,550.2 L731.9,548.9 L731.2,547.5 L730.6,546.1 L730.1,544.6 L729.6,543.2 L729.2,541.7 L728.8,540.2 L728.5,538.7 L728.3,537.2 L728.1,535.7 L727.9,534.2 L727.8,532.7 L727.8,531.1 L727.8,529.6 L727.9,528.1 L728.1,526.6 L728.3,525.1 L728.5,523.5 L728.8,522 L729.2,520.6 L729.6,519.1 L730.1,517.6 L730.6,516.2 L731.2,514.8 L731.9,513.4 L732.6,512.1 L733.3,510.7 L734.1,509.4 L734.9,508.1 L735.8,506.9 L736.8,505.7 L737.8,504.5 L738.8,503.4 L739.8,502.3 L741,501.2 L742.1,500.2 L743.3,499.3 L744.5,498.4 L745.8,497.5 L747,496.7 L748.4,495.9 M743.3,563 L743.7,561.5 L744.2,560.1 L744.8,558.7 L745.5,557.3 L746.3,556 L747.1,554.7 L748,553.5 L749,552.3 L750,551.2 L751.1,550.1 L752.3,549.1 L753.5,548.2 L754.7,547.3 L756.1,546.5 L757.4,545.8 L758.8,545.2 L760.2,544.6 L761.7,544.2 L763.2,543.8 L764.7,543.5 L766.2,543.3 L767.7,543.1 L769.2,543.1 L770.7,543.2 L772.3,543.3 L773.8,543.5 L775.3,543.8 L776.7,544.2 L778.2,544.7 L779.6,545.2 L781,545.9 L782.4,546.6 L783.7,547.4 L784.9,548.2 L786.1,549.2 L787.3,550.2 L788.4,551.3 L789.4,552.4 L790.4,553.6 L791.3,554.8 L792.1,556.1 L792.8,557.4 L793.5,558.8 L794.1,560.2 L794.6,561.6 L795,563.1 L795.4,564.6 L795.6,566.1 L795.8,567.6 L795.9,569.2 L795.9,570.7 L795.8,572.2 L795.6,573.7 L795.4,575.2 L795,576.7 L794.6,578.2 L794.1,579.6 L793.5,581 L792.8,582.4 L792,583.7 L791.2,585 L790.3,586.2 L789.3,587.4 L788.3,588.5 L787.2,589.6 L786,590.6 L784.8,591.5 L783.6,592.4 L782.3,593.2 M757.1,569.4 L758.4,570.2 L759.7,571.1 L761,571.9 L762.2,572.8 L763.4,573.7 L764.6,574.7 L765.8,575.7 L766.9,576.7 L768.1,577.7 L769.2,578.8 L770.3,579.8 L771.3,580.9 L772.4,582.1 L773.4,583.2 L774.3,584.4 L775.3,585.6 L776.2,586.8 L777.1,588 L778,589.3 L778.8,590.6 L779.6,591.9 L780.4,593.2 L781.2,594.5 L781.9,595.9 L782.6,597.2 L783.2,598.6 L783.9,600 L784.5,601.4 L785,602.8 L785.6,604.2 L786.1,605.7 L786.5,607.1 L787,608.6 L787.4,610.1 L787.7,611.6 L788.1,613.1 M749.1,549 L749.2,547.5 L749.3,546 L749.4,544.4 L749.3,542.9 L749.2,541.4 L749,539.9 L748.8,538.4 L748.4,536.9 L748,535.4 L747.5,534 L746.9,532.5 L746.3,531.2 L745.6,529.8 L744.9,528.5 L744,527.2 L743.1,525.9 L742.2,524.7 L741.2,523.6 L740.1,522.5 L739,521.5 L737.8,520.5 L736.6,519.5 L735.4,518.7 L734.1,517.9 L732.7,517.1 L731.4,516.4 L730,515.8 L728.5,515.3 L727.1,514.8 L725.6,514.5 M728.4,565.3 L727,565.9 L725.6,566.6 L724.3,567.4 L723,568.2 L721.8,569.1 L720.6,570.1 L719.5,571.1 L718.4,572.2 L717.3,573.3 L716.4,574.5 L715.5,575.7 L714.6,577 L713.8,578.3 L713.1,579.7 L712.5,581 L711.9,582.5 L711.4,583.9 L711,585.4 L710.6,586.9 L710.4,588.4 L710.2,589.9 L710,591.4 L710,592.9 L710,594.5 L710.1,596 L710.3,597.5 L710.6,599 L710.9,600.5 L711.3,602 L711.8,603.4 L712.3,604.8 L713,606.2 L713.7,607.6 L714.4,608.9 L715.3,610.2 L716.2,611.4 L717.1,612.6 L718.1,613.8 L719.2,614.9 L720.3,615.9 L721.5,616.9 L722.7,617.8 L724,618.6 L725.3,619.4 L726.7,620.1 L728,620.8 L729.5,621.4 L730.9,621.9 L732.4,622.3 L733.8,622.7 L735.3,623 L736.9,623.2 L738.4,623.3 L739.9,623.3 L741.4,623.3 L743,623.2 L744.5,623.1 L746,622.8 L747.5,622.5 L749,622.1 L750.4,621.6 L751.8,621 L753.2,620.4 L754.6,619.7 L755.9,619 L757.2,618.1 L758.4,617.3 L759.6,616.3 M743.3,563 L741.8,562.8 L740.3,562.7 L738.7,562.6 L737.2,562.5 L735.7,562.5 L734.2,562.5 L732.6,562.5 L731.1,562.6 L729.6,562.7 L728.1,562.9 L726.5,563.1 L725,563.4 L723.5,563.6 L722,564 L720.6,564.3 L719.1,564.7 L717.6,565.2 L716.2,565.6 L714.7,566.1 L713.3,566.7 L711.9,567.3 L710.5,567.9 L709.1,568.6 L707.8,569.2 L706.4,570 L705.1,570.7 L703.8,571.5 L702.5,572.4 L701.2,573.2 L700,574.1 L698.8,575 L697.6,576 L696.4,577 L695.3,578 L694.2,579 L693.1,580.1 L692,581.2 L691,582.3 L690,583.5 L689,584.7 L688.1,585.9 L687.1,587.1 L686.3,588.3 L685.4,589.6 L684.6,590.9 L683.8,592.2 L683.1,593.6 M728.2,564.5 L726.6,564.4 L725.1,564.2 L723.6,564 L722.1,563.7 L720.6,563.4 L719.2,563 L717.7,562.5 L716.2,562.1 L714.8,561.5 L713.4,560.9 L712,560.3 L710.6,559.6 L709.3,558.9 L708,558.1 L706.7,557.3 L705.4,556.5 L704.2,555.6 L703,554.6 L701.8,553.6 L700.7,552.6 L699.6,551.5 L698.5,550.4 L697.5,549.3 L696.5,548.1 L695.6,546.9 L694.6,545.7 L693.8,544.5 L693,543.2 L692.2,541.8 L691.5,540.5 L690.8,539.1 L690.1,537.7 L689.6,536.3 L689,534.9 L688.5,533.5 L688.1,532 L687.7,530.5 L687.3,529 L687.1,527.5 L686.8,526 M741.2,547.9 L740.9,546.4 L740.5,544.9 L740.1,543.4 L739.7,541.9 L739.3,540.5 L738.9,539 L738.5,537.5 L738,536.1 L737.5,534.6 L737,533.2 L736.5,531.8 L735.9,530.3 L735.3,528.9 L734.7,527.5 L734.1,526.1 L733.5,524.7 L732.9,523.3 L732.2,522 L731.5,520.6 L730.8,519.2 L730.1,517.9 L729.3,516.6 L728.6,515.2 L727.8,513.9 L727,512.6 L726.2,511.3 L725.3,510 L724.5,508.8 L723.6,507.5 L722.7,506.3 L721.8,505 L720.9,503.8 L720,502.6 L719,501.4 L718.1,500.2 M731.2,572.3 L729.9,573.1 L728.6,574 L727.3,574.8 L726,575.6 L724.7,576.4 L723.4,577.1 L722.1,577.9 L720.7,578.6 L719.4,579.4 L718,580.1 L716.7,580.8 L715.3,581.4 L713.9,582.1 L712.5,582.8 L711.2,583.4 L709.8,584 L708.4,584.6 L706.9,585.2 L705.5,585.7 L704.1,586.3 L702.7,586.8 L701.2,587.3 L699.8,587.8 L698.3,588.3 L696.9,588.8 L695.4,589.2 L693.9,589.7 L692.5,590.1 L691,590.5 L689.5,590.8 L688,591.2 M743.3,563 L743.2,564.5 L742.9,566 L742.6,567.5 L742.2,569 L741.8,570.5 L741.2,571.9 L740.6,573.3 L739.9,574.6 L739.1,576 L738.3,577.2 L737.4,578.5 L736.4,579.6 L735.3,580.7 L734.2,581.8 L733.1,582.8 L731.9,583.7 L730.6,584.6 L729.3,585.4 L727.9,586.1 L726.6,586.7 L725.1,587.3 L723.7,587.8 L722.2,588.2 L720.7,588.5 L719.2,588.7 L717.7,588.9 L716.2,589 L714.6,589 L713.1,588.9 L711.6,588.7 L710.1,588.4 L708.6,588.1 L707.1,587.6 L705.7,587.1 L704.3,586.6 L702.9,585.9 L701.6,585.2 L700.3,584.3 L699,583.5 L697.8,582.5 L696.7,581.5 L695.6,580.4 L694.6,579.3 L693.6,578.1 L692.7,576.9 L691.9,575.6 L691.1,574.3 L690.5,572.9 L689.8,571.5 L689.3,570.1 L688.9,568.6 L688.5,567.1 L688.2,565.6 L688,564.1 L687.9,562.6 L687.9,561 L687.9,559.5 L688.1,558 L688.3,556.5 L688.6,555 L689,553.5 L689.4,552 L690,550.6 L690.6,549.2 L691.3,547.9 L692.1,546.6 L692.9,545.3 L693.8,544.1 L694.8,542.9 L695.9,541.8 L697,540.7 L698.1,539.7 M728.1,562.8 L726.6,563 L725.1,563.3 L723.6,563.7 L722.1,564.1 L720.7,564.5 L719.2,565 L717.8,565.5 L716.4,566.1 L715,566.7 L713.6,567.4 L712.2,568.1 L710.9,568.9 L709.6,569.7 L708.3,570.5 L707.1,571.4 L705.9,572.3 L704.7,573.3 L703.5,574.3 L702.4,575.3 L701.3,576.3 L700.2,577.5 L699.2,578.6 L698.2,579.8 L697.3,581 L696.4,582.2 L695.5,583.4 L694.7,584.7 L693.9,586 L693.1,587.4 L692.4,588.7 L691.8,590.1 L691.2,591.5 L690.6,592.9 L690.1,594.4 L689.6,595.8 L689.2,597.3 L688.8,598.8 L688.5,600.3 L688.2,601.8 M755.6,571.8 L756.6,572.9 L757.6,574.1 L758.5,575.4 L759.3,576.7 L760.1,578 L760.8,579.3 L761.4,580.7 L762,582.1 L762.5,583.6 L763,585 L763.4,586.5 L763.7,588 L764,589.5 L764.2,591 L764.3,592.5 L764.4,594.1 L764.4,595.6 L764.3,597.1 L764.2,598.6 L763.9,600.2 L763.7,601.7 L763.3,603.1 L762.9,604.6 L762.4,606.1 L761.9,607.5 L761.3,608.9 L760.6,610.3 L759.9,611.6 L759.1,612.9 L758.3,614.2 L757.4,615.4 L756.4,616.6 L755.4,617.8 L754.4,618.9 L753.3,620 L752.1,621 L750.9,621.9 L749.7,622.8 L748.4,623.7 L747.1,624.5 L745.8,625.2 L744.4,625.9 L743,626.5 L741.6,627 M737,549.1 L736.6,547.7 L736.2,546.2 L735.8,544.7 L735.5,543.2 L735.2,541.7 L735,540.2 L734.8,538.7 L734.6,537.2 L734.5,535.6 L734.4,534.1 L734.3,532.6 L734.3,531.1 L734.3,529.5 L734.4,528 L734.5,526.5 L734.6,525 L734.8,523.4 L735,521.9 L735.3,520.4 L735.6,518.9 L735.9,517.4 L736.3,515.9 L736.7,514.5 L737.1,513 L737.6,511.6 L738.1,510.1 L738.7,508.7 L739.3,507.3 L739.9,505.9 L740.5,504.5 L741.2,503.1 L742,501.8 L742.7,500.5 L743.5,499.2 L744.3,497.9 L745.2,496.6 L746.1,495.4 M743.3,563 L742.4,564.2 L741.5,565.5 L740.6,566.7 L739.7,567.9 L738.8,569.1 L737.8,570.3 L736.9,571.5 L735.9,572.7 L734.9,573.9 L733.9,575 L732.9,576.2 L731.9,577.3 L730.8,578.5 L729.8,579.6 L728.7,580.7 L727.7,581.8 L726.6,582.8 L725.5,583.9 L724.4,585 L723.3,586 L722.2,587.1 L721,588.1 L719.9,589.1 L718.7,590.1 L717.6,591.1 L716.4,592.1 L715.2,593 L714,594 L712.8,594.9 L711.6,595.8 L710.4,596.7 L709.1,597.6 L707.9,598.5 L706.6,599.4 L705.4,600.3 L704.1,601.1 L702.8,601.9 L701.5,602.7 L700.2,603.6 L698.9,604.3 L697.6,605.1 L696.3,605.9 L694.9,606.6 L693.6,607.4 L692.2,608.1 M748.8,548.7 L749.2,547.3 L749.6,545.8 L749.9,544.3 L750.3,542.8 L750.6,541.3 L750.9,539.8 L751.1,538.3 L751.4,536.8 L751.6,535.3 L751.8,533.8 L751.9,532.3 L752.1,530.7 L752.2,529.2 L752.3,527.7 L752.3,526.2 L752.4,524.6 L752.4,523.1 L752.4,521.6 L752.3,520.1 L752.3,518.5 L752.2,517 L752.1,515.5 L751.9,514 L751.7,512.4 L751.6,510.9 L751.3,509.4 L751.1,507.9 L750.8,506.4 L750.5,504.9 L750.2,503.4 L749.9,501.9 L749.5,500.4 L749.1,499 L748.7,497.5 L748.3,496 M743.4,578.3 L743.5,579.8 L743.6,581.3 L743.7,582.8 L743.8,584.4 L744,585.9 L744.1,587.4 L744.3,588.9 L744.5,590.4 L744.7,592 L744.9,593.5 L745.1,595 L745.4,596.5 L745.6,598 L745.9,599.5 L746.2,601 L746.5,602.5 L746.8,604 L747.2,605.5 M750.6,576.4 L751.4,577.7 L752.2,579 L753,580.4 L753.7,581.7 L754.5,583 L755.3,584.3 L756.1,585.6 L756.9,586.9 L757.7,588.2 L758.5,589.5 L759.4,590.8 L760.2,592.1 L761,593.3 L761.9,594.6 L762.7,595.9 L763.5,597.2 L764.4,598.4 L765.3,599.7 L766.1,601 L767,602.2 L767.9,603.5 L768.7,604.7 L769.6,606 L770.5,607.2 L771.4,608.4 L772.3,609.7 L773.2,610.9 L774.1,612.1 L775,613.4 L775.9,614.6 L776.9,615.8 L777.8,617 L778.7,618.2 L779.7,619.4 M743.3,563 L741.8,563.4 L740.4,563.8 L738.9,564.2 L737.4,564.6 L735.9,564.9 L734.4,565.2 L732.9,565.4 L731.4,565.6 L729.9,565.8 L728.3,566 L726.8,566.1 L725.3,566.2 L723.8,566.2 L722.2,566.2 L720.7,566.2 L719.2,566.2 L717.7,566.1 L716.1,566 L714.6,565.8 L713.1,565.6 L711.6,565.4 L710.1,565.2 L708.6,564.9 L707.1,564.6 L705.6,564.2 L704.1,563.9 L702.6,563.4 L701.2,563 L699.7,562.5 L698.3,562 L696.8,561.5 L695.4,560.9 L694,560.3 L692.6,559.7 L691.2,559.1 L689.9,558.4 L688.5,557.7 L687.2,556.9 L685.9,556.1 L684.6,555.3 L683.3,554.5 L682,553.6 L680.8,552.8 L679.6,551.9 L678.3,550.9 L677.2,549.9 M754.3,573.6 L755.4,574.7 L756.5,575.7 L757.7,576.7 L758.8,577.7 L760,578.7 L761.2,579.7 L762.3,580.6 L763.5,581.6 L764.7,582.6 L765.9,583.5 L767.1,584.5 L768.3,585.4 L769.5,586.3 L770.8,587.2 L772,588.1 L773.2,589 L774.5,589.9 L775.7,590.8 L777,591.7 L778.2,592.6 L779.5,593.4 L780.8,594.3 L782,595.1 L783.3,595.9 L784.6,596.8 L785.9,597.6 L787.2,598.4 L788.5,599.2 L789.8,600 L791.1,600.7 L792.5,601.5 L793.8,602.3 L795.1,603 L796.5,603.7 M728,562.3 L726.5,562.1 L725,561.9 L723.5,561.7 L722,561.5 L720.5,561.3 L719,561 L717.5,560.7 L716,560.5 L714.5,560.2 L713,559.8 L711.5,559.5 L710,559.2 L708.5,558.8 L707,558.4 L705.6,558 L704.1,557.6 L702.6,557.2 L701.2,556.7 L699.7,556.2 L698.2,555.8 L696.8,555.3 L695.4,554.8 M728.4,559.8 L726.9,559.6 L725.3,559.4 L723.8,559.2 L722.3,559 L720.8,558.8 L719.3,558.7 L717.7,558.5 L716.2,558.4 L714.7,558.3 L713.2,558.2 L711.6,558.2 L710.1,558.1 L708.6,558.1 L707.1,558.1 L705.5,558.1 L704,558.1 L702.5,558.1 L701,558.1 L699.4,558.2 L697.9,558.3 L696.4,558.4 L694.8,558.5 L693.3,558.6 L691.8,558.7 L690.3,558.9 L688.8,559.1 L687.3,559.3 L685.7,559.5 L684.2,559.7 L682.7,559.9 L681.2,560.2 L679.7,560.4 M743.3,563 L744.3,561.9 L745.4,560.8 L746.4,559.7 L747.5,558.6 L748.6,557.5 L749.6,556.4 L750.7,555.3 L751.8,554.2 L752.8,553.1 L753.9,552 L755,550.9 L756.1,549.9 L757.2,548.8 L758.3,547.7 L759.4,546.7 L760.5,545.6 L761.6,544.6 L762.7,543.5 L763.8,542.5 L764.9,541.4 L766.1,540.4 L767.2,539.4 L768.3,538.3 L769.5,537.3 L770.6,536.3 L771.7,535.3 L772.9,534.3 L774,533.3 L775.2,532.3 L776.4,531.3 L777.5,530.3 L778.7,529.3 L779.8,528.3 L781,527.3 L782.2,526.4 L783.4,525.4 L784.6,524.4 L785.8,523.5 L786.9,522.5 L788.1,521.6 L789.3,520.6 L790.5,519.7 L791.7,518.7 L793,517.8 M754.1,552.3 L755.3,551.4 L756.6,550.6 L757.9,549.8 L759.3,549 L760.6,548.3 L762,547.7 L763.4,547 L764.8,546.5 L766.3,545.9 L767.7,545.5 L769.2,545 L770.6,544.6 L772.1,544.3 L773.6,544 L775.1,543.8 L776.7,543.6 L778.2,543.4 L779.7,543.3 L781.2,543.3 L782.8,543.3 L784.3,543.3 L785.8,543.4 L787.3,543.5 L788.8,543.7 L790.4,544 L791.9,544.2 L793.3,544.6 L794.8,545 L796.3,545.4 L797.7,545.9 L799.2,546.4 L800.6,547 L802,547.6 L803.4,548.2 L804.7,548.9 L806.1,549.7 L807.4,550.4 L808.7,551.3 L809.9,552.1 M737.8,548.8 L737.4,547.3 L737.1,545.8 L736.7,544.3 L736.5,542.8 L736.2,541.3 L736,539.8 L735.8,538.3 L735.7,536.8 L735.5,535.2 L735.5,533.7 L735.4,532.2 L735.4,530.7 L735.4,529.1 L735.4,527.6 L735.5,526.1 L735.6,524.5 L735.8,523 L735.9,521.5 L736.2,520 L736.4,518.5 L736.7,517 L737,515.5 L737.3,514 L737.7,512.5 L738.1,511 L738.5,509.6 L739,508.1 L739.5,506.7 L740,505.2 L740.6,503.8 L741.2,502.4 L741.8,501 L742.4,499.6 L743.1,498.3 L743.8,496.9 L744.6,495.6 M741.8,547.8 L741.8,546.3 L741.8,544.8 L741.8,543.2 L741.8,541.7 L741.9,540.2 L741.9,538.6 L742,537.1 L742.2,535.6 L742.3,534.1 L742.5,532.6 L742.7,531 L742.9,529.5 L743.1,528 L743.3,526.5 L743.6,525 L743.9,523.5 L744.2,522 L744.6,520.5 L744.9,519 L745.3,517.5 L745.7,516.1 L746.1,514.6 L746.5,513.1 L747,511.7 L747.5,510.2 L748,508.8 L748.5,507.4 L749.1,505.9 L749.6,504.5 L750.2,503.1 L750.8,501.7 L751.4,500.3 L752.1,498.9 L752.7,497.5 L753.4,496.2 M743.3,563 L744.6,563.8 L745.9,564.6 L747.3,565.3 L748.6,566 L749.9,566.8 L751.3,567.5 L752.7,568.1 L754.1,568.8 L755.4,569.4 L756.8,570 L758.3,570.6 L759.7,571.2 L761.1,571.8 L762.5,572.3 L764,572.8 L765.4,573.3 L766.9,573.8 L768.3,574.3 L769.8,574.7 L771.3,575.1 L772.7,575.5 L774.2,575.9 L775.7,576.2 L777.2,576.5 L778.7,576.9 L780.2,577.1 L781.7,577.4 L783.2,577.7 L784.7,577.9 L786.2,578.1 L787.7,578.3 L789.3,578.4 L790.8,578.6 L792.3,578.7 L793.8,578.8 L795.4,578.8 L796.9,578.9 L798.4,578.9 L799.9,578.9 L801.5,578.9 L803,578.9 L804.5,578.8 L806.1,578.7 L807.6,578.6 L809.1,578.5 M728.9,568.1 L727.6,568.8 L726.2,569.5 L724.9,570.3 L723.6,571.1 L722.3,571.9 L721.1,572.8 L719.9,573.7 L718.7,574.7 L717.5,575.6 L716.3,576.6 L715.2,577.7 L714.1,578.7 L713,579.8 L712,580.9 L711,582.1 L710,583.2 L709,584.4 L708.1,585.6 L707.2,586.9 L706.3,588.1 L705.5,589.4 L704.7,590.7 L703.9,592 L703.2,593.4 L702.5,594.7 L701.9,596.1 L701.2,597.5 L700.7,598.9 L700.1,600.4 L699.6,601.8 L699.1,603.3 L698.7,604.7 L698.3,606.2 L697.9,607.7 L697.6,609.2 M750.6,549.7 L751.6,548.5 L752.7,547.4 L753.8,546.4 L754.9,545.4 L756.1,544.4 L757.3,543.5 L758.6,542.6 L759.9,541.8 L761.2,541.1 L762.5,540.3 L763.9,539.7 L765.3,539.1 L766.8,538.6 L768.2,538.1 L769.7,537.7 L771.2,537.3 L772.7,537 L774.2,536.8 L775.7,536.6 L777.2,536.5 L778.7,536.4 L780.3,536.4 L781.8,536.5 L783.3,536.7 L784.8,536.9 L786.3,537.1 L787.8,537.4 L789.3,537.8 L790.8,538.2 L792.2,538.7 L793.7,539.3 L795.1,539.9 L796.4,540.6 L797.8,541.3 L799.1,542.1 L800.4,542.9 L801.6,543.8 L802.8,544.7 L804,545.7 L805.1,546.8 L806.2,547.8 L807.3,548.9 L808.2,550.1 L809.2,551.3 M750.3,549.6 L751.3,548.5 L752.4,547.4 L753.6,546.4 L754.8,545.5 L756,544.6 L757.3,543.7 L758.6,543 L760,542.3 L761.4,541.7 L762.8,541.1 L764.3,540.6 L765.7,540.2 L767.2,539.9 L768.7,539.6 L770.2,539.4 L771.8,539.3 L773.3,539.2 L774.8,539.3 L776.4,539.4 L777.9,539.6 L779.4,539.8 L780.9,540.2 L782.3,540.6 L783.8,541 L785.2,541.6 L786.6,542.2 L788,542.9 L789.3,543.6 L790.6,544.5 L791.8,545.3 L793.1,546.3 L794.2,547.3 L795.3,548.3 L796.4,549.4 L797.4,550.6 L798.3,551.8 L799.2,553.1 M743.3,563 L742.3,561.8 L741.3,560.7 L740.4,559.5 L739.5,558.2 L738.6,557 L737.8,555.7 L737,554.4 L736.3,553 L735.6,551.7 L734.9,550.3 L734.3,548.9 L733.7,547.5 L733.1,546.1 L732.6,544.6 L732.2,543.2 L731.8,541.7 L731.4,540.2 L731,538.7 L730.8,537.2 L730.5,535.7 L730.3,534.2 L730.1,532.7 L730,531.2 L730,529.6 L729.9,528.1 L730,526.6 L730,525.1 L730.1,523.5 L730.3,522 L730.5,520.5 L730.7,519 L731,517.5 L731.3,516 L731.7,514.5 L732.1,513 L732.6,511.6 L733.1,510.1 L733.6,508.7 L734.2,507.3 L734.9,505.9 L735.5,504.5 L736.2,503.2 L737,501.8 L737.8,500.5 L738.6,499.2 L739.4,498 L740.3,496.7 L741.3,495.5 M728.1,561.5 L726.6,561.3 L725.1,561.1 L723.5,560.9 L722,560.8 L720.5,560.5 L719,560.3 L717.5,560.1 L716,559.9 L714.5,559.7 L713,559.5 L711.4,559.2 L709.9,559 L708.4,558.7 L706.9,558.5 L705.4,558.2 L703.9,558 L702.4,557.7 L700.9,557.4 L699.4,557.2 L697.9,556.9 L696.4,556.6 L694.9,556.3 L693.4,556 L691.9,555.7 L690.4,555.4 L688.9,555.1 L687.4,554.7 L685.9,554.4 L684.4,554.1 L682.9,553.7 L681.5,553.4 L680,553 L678.5,552.7 L677,552.3 M758.1,559.7 L759.4,559 L760.7,558.2 L762,557.3 L763.2,556.4 L764.3,555.4 L765.5,554.4 L766.5,553.3 L767.5,552.1 L768.5,550.9 L769.3,549.7 L770.1,548.4 L770.9,547 L771.6,545.7 L772.2,544.3 L772.7,542.8 L773.2,541.4 L773.5,539.9 L773.9,538.4 L774.1,536.9 L774.2,535.4 L774.3,533.8 L774.3,532.3 L774.2,530.8 L774.1,529.3 L773.8,527.8 L773.5,526.3 L773.1,524.8 L772.7,523.3 L772.1,521.9 L771.5,520.5 L770.9,519.1 L770.1,517.8 L769.3,516.5 L768.4,515.3 L767.5,514.1 L766.5,512.9 L765.4,511.8 L764.3,510.8 L763.1,509.8 L761.9,508.8 L760.6,508 L759.3,507.2 L758,506.5 L756.6,505.8 L755.2,505.2 L753.8,504.7 L752.3,504.3 L750.8,503.9 L749.3,503.6 L747.8,503.4 L746.3,503.3 L744.8,503.2 L743.2,503.2 L741.7,503.3 L740.2,503.5 L738.7,503.8 L737.2,504.1 L735.7,504.5 L734.3,505 L732.8,505.5 L731.4,506.2 L730.1,506.9 L728.8,507.6 L727.5,508.5 L726.2,509.3 L725.1,510.3 L723.9,511.3 M731,571.7 L730.1,573 L729.2,574.2 L728.5,575.6 L727.8,576.9 L727.1,578.3 L726.6,579.7 L726.1,581.2 L725.7,582.7 L725.4,584.2 L725.2,585.7 L725.1,587.2 L725.1,588.7 L725.1,590.3 L725.2,591.8 L725.4,593.3 L725.7,594.8 L726.1,596.3 L726.6,597.7 L727.1,599.2 L727.7,600.6 L728.4,601.9 L729.2,603.2 L730,604.5 L730.9,605.7 L731.9,606.9 L732.9,608 L734.1,609.1 L735.2,610.1 L736.4,611 L737.7,611.9 L739,612.6 L740.4,613.4 L741.7,614 L743.2,614.5 L744.6,615 L746.1,615.4 L747.6,615.7 L749.1,616 L750.6,616.1 L752.1,616.2 L753.7,616.1 L755.2,616 L756.7,615.8 L758.2,615.5 L759.7,615.2 L761.2,614.7 L762.6,614.2 L764,613.6 L765.4,612.9 L766.7,612.1 L768,611.3 L769.2,610.4 L770.4,609.4 L771.5,608.4 L772.6,607.3 L773.6,606.2 L774.5,604.9 L775.4,603.7 L776.2,602.4 L776.9,601 L777.5,599.7 M743.3,563 L742.9,561.5 L742.5,560.1 L742.1,558.6 L741.7,557.1 L741.3,555.6 L740.9,554.2 L740.5,552.7 L740.2,551.2 L739.8,549.7 L739.5,548.2 L739.2,546.7 L738.8,545.2 L738.5,543.7 L738.2,542.2 L738,540.7 L737.7,539.2 L737.4,537.7 L737.2,536.2 L736.9,534.7 L736.7,533.2 L736.5,531.7 L736.2,530.2 L736,528.6 L735.8,527.1 L735.7,525.6 L735.5,524.1 L735.3,522.6 L735.2,521.1 L735,519.5 L734.9,518 L734.8,516.5 L734.7,515 L734.6,513.4 L734.5,511.9 L734.4,510.4 L734.3,508.9 L734.3,507.3 L734.2,505.8 L734.2,504.3 L734.1,502.8 L734.1,501.2 L734.1,499.7 L734.1,498.2 L734.1,496.6 M741.7,547.8 L741.7,546.3 L741.6,544.8 L741.5,543.2 L741.4,541.7 L741.4,540.2 L741.3,538.6 L741.3,537.1 L741.3,535.6 L741.3,534.1 L741.3,532.5 L741.3,531 L741.3,529.5 L741.4,527.9 L741.4,526.4 L741.5,524.9 L741.6,523.4 L741.6,521.8 L741.7,520.3 L741.8,518.8 L742,517.3 L742.1,515.7 L742.2,514.2 L742.4,512.7 L742.5,511.2 L742.7,509.7 L742.9,508.1 L743.1,506.6 L743.3,505.1 L743.5,503.6 L743.7,502.1 L743.9,500.6 L744.2,499.1 M737.4,577.1 L737,578.5 L736.5,580 L736.1,581.5 L735.6,582.9 L735.3,584.4 L734.9,585.9 L734.5,587.4 L734.2,588.9 L733.9,590.4 L733.6,591.9 L733.3,593.4 L733.1,594.9 L732.9,596.4 L732.7,597.9 L732.5,599.4 L732.3,600.9 L732.2,602.5 L732.1,604 L732,605.5 L731.9,607 L731.8,608.6 L731.8,610.1 L731.8,611.6 L731.8,613.2 L731.8,614.7 L731.9,616.2 L732,617.7 L732.1,619.3 L732.2,620.8 L732.3,622.3 L732.5,623.8 L732.7,625.3 L732.9,626.9 L733.1,628.4 L733.3,629.9 M754.8,553 L755.8,551.9 L756.7,550.7 L757.6,549.4 L758.5,548.2 L759.3,546.9 L760.1,545.6 L760.8,544.2 L761.5,542.9 L762.2,541.5 L762.8,540.1 L763.4,538.7 L763.9,537.2 L764.4,535.8 L764.9,534.3 L765.3,532.9 L765.6,531.4 L765.9,529.9 L766.2,528.4 L766.4,526.9 L766.6,525.3 L766.7,523.8 L766.8,522.3 M743.3,563 L744.8,562.8 L746.3,562.6 L747.8,562.4 L749.3,562.1 L750.8,561.8 L752.3,561.5 L753.8,561.2 L755.3,560.8 L756.8,560.4 L758.3,560 L759.7,559.5 L761.2,559 L762.6,558.5 L764,558 L765.5,557.4 L766.9,556.8 L768.3,556.2 L769.6,555.6 L771,554.9 L772.4,554.2 L773.7,553.5 L775.1,552.8 L776.4,552 L777.7,551.2 L779,550.4 L780.3,549.5 L781.5,548.7 L782.8,547.8 L784,546.9 L785.2,545.9 L786.4,545 L787.6,544 L788.7,543 L789.8,542 L791,540.9 M734.5,550.5 L733.6,549.3 L732.6,548.1 L731.6,546.9 L730.6,545.8 L729.7,544.6 L728.6,543.5 L727.6,542.3 L726.6,541.2 L725.5,540.1 L724.5,539 L723.4,537.9 L722.3,536.8 L721.2,535.7 L720.1,534.7 L719,533.6 L717.9,532.6 L716.8,531.6 L715.6,530.6 L714.5,529.6 L713.3,528.6 L712.1,527.6 L710.9,526.7 L709.7,525.7 L708.5,524.8 L707.3,523.8 L706.1,522.9 L704.9,522 L703.6,521.1 L702.4,520.3 L701.1,519.4 L699.8,518.6 L698.5,517.7 L697.2,516.9 L695.9,516.1 L694.6,515.3 M758.1,559.4 L759.6,559.1 L761.1,558.8 L762.6,558.5 L764.1,558.2 L765.6,557.9 L767.1,557.7 L768.7,557.4 L770.2,557.2 L771.7,556.9 L773.2,556.7 L774.7,556.5 L776.2,556.3 L777.7,556.1 L779.2,555.9 L780.8,555.7 L782.3,555.6 L783.8,555.4 L785.3,555.3 L786.8,555.2 L788.4,555 L789.9,554.9 L791.4,554.8 L792.9,554.7 L794.5,554.6 L796,554.5 L797.5,554.5 L799,554.4 L800.6,554.4 L802.1,554.3 L803.6,554.3 L805.2,554.3 L806.7,554.3 L808.2,554.3 L809.7,554.3 M735.5,549.9 L734.6,548.7 L733.6,547.6 L732.5,546.5 L731.4,545.4 L730.3,544.3 L729.2,543.3 L728,542.3 L726.8,541.3 L725.6,540.4 L724.4,539.5 L723.1,538.7 L721.8,537.9 L720.5,537.1 L719.2,536.4 L717.8,535.7 L716.4,535 L715,534.4 L713.6,533.8 L712.2,533.3 L710.7,532.8 L709.3,532.4 L707.8,531.9 L706.3,531.6 L704.8,531.3 L703.3,531 L701.8,530.7 L700.3,530.5 L698.8,530.4 L697.2,530.3 L695.7,530.2 L694.2,530.2 L692.7,530.2 L691.1,530.3 L689.6,530.4 L688.1,530.6 L686.6,530.8 L685.1,531 L683.6,531.3 M743.3,563 L742.6,564.3 L741.8,565.7 L741.1,567 L740.3,568.3 L739.6,569.7 L738.8,571 L738,572.3 L737.2,573.6 L736.3,574.9 L735.5,576.1 L734.7,577.4 L733.8,578.7 L732.9,579.9 L732.1,581.2 L731.2,582.4 L730.3,583.7 L729.3,584.9 L728.4,586.1 L727.5,587.3 L726.5,588.5 L725.6,589.7 L724.6,590.9 L723.6,592 L722.6,593.2 L721.6,594.3 L720.6,595.5 L719.6,596.6 L718.5,597.8 L717.5,598.9 L716.4,600 L715.4,601.1 L714.3,602.1 L713.2,603.2 L712.1,604.3 L711,605.3 L709.9,606.4 L708.8,607.4 L707.6,608.4 L706.5,609.5 L705.3,610.5 L704.2,611.5 L703,612.4 L701.8,613.4 L700.6,614.4 L699.4,615.3 M729.9,570.3 L728.8,571.2 L727.6,572.3 L726.5,573.3 L725.5,574.4 L724.4,575.5 L723.5,576.7 L722.5,577.9 L721.6,579.1 L720.8,580.4 L720,581.7 L719.2,583 L718.5,584.4 L717.8,585.8 L717.2,587.2 L716.6,588.6 L716.1,590 L715.6,591.5 L715.2,592.9 L714.9,594.4 L714.6,595.9 L714.3,597.4 L714.1,598.9 L713.9,600.5 L713.9,602 L713.8,603.5 L713.8,605 L713.9,606.6 L714,608.1 L714.2,609.6 L714.4,611.1 L714.7,612.6 L715.1,614.1 L715.4,615.6 L715.9,617.1 L716.4,618.5 L716.9,619.9 L717.5,621.3 L718.2,622.7 L718.9,624.1 L719.6,625.4 L720.4,626.7 M750.1,576.7 L750.8,578 L751.5,579.4 L752.3,580.7 L753,582.1 L753.8,583.4 L754.5,584.7 L755.3,586 L756,587.4 L756.8,588.7 L757.6,590 L758.4,591.3 L759.2,592.6 L760,593.9 L760.8,595.2 L761.6,596.5 L762.5,597.8 L763.3,599 L764.1,600.3 L765,601.6 L765.8,602.9 L766.7,604.1 L767.6,605.4 L768.4,606.6 L769.3,607.9 L770.2,609.1 L771.1,610.4 L772,611.6 L772.9,612.8 L773.8,614 L774.8,615.3 L775.7,616.5 L776.6,617.7 L777.6,618.9 L778.5,620.1 M758.1,566.7 L759.5,567.3 L760.9,568 L762.2,568.6 L763.6,569.4 L764.9,570.1 L766.2,570.9 L767.5,571.7 L768.8,572.6 L770,573.4 L771.2,574.4 L772.4,575.3 L773.6,576.3 L774.7,577.3 L775.9,578.4 L776.9,579.5 L778,580.6 L779,581.7 L780,582.9 L780.9,584.1 L781.9,585.3 L782.7,586.5 L783.6,587.8 L784.4,589.1 L785.2,590.4 L785.9,591.8 L786.6,593.1 L787.3,594.5 L787.9,595.9 L788.5,597.3 L789.1,598.7 L789.6,600.1 L790.1,601.6 L790.5,603.1 L790.9,604.5 L791.2,606 L791.6,607.5 L791.8,609 M743.3,563 L742.4,561.8 L741.5,560.6 L740.5,559.4 L739.5,558.2 L738.5,557.1 L737.4,556 L736.3,554.9 L735.2,553.9 L734,552.9 L732.8,552 L731.6,551 L730.4,550.1 L729.1,549.3 L727.8,548.5 L726.5,547.7 L725.1,547 L723.8,546.3 L722.4,545.6 L721,545 L719.6,544.4 L718.2,543.9 L716.7,543.4 L715.3,542.9 L713.8,542.5 L712.3,542.2 L710.8,541.8 L709.3,541.6 L707.8,541.3 L706.3,541.1 L704.8,541 L703.2,540.9 L701.7,540.8 L700.2,540.8 L698.7,540.9 L697.1,540.9 L695.6,541.1 L694.1,541.2 L692.6,541.4 L691.1,541.7 L689.6,542 L688.1,542.3 L686.6,542.7 L685.1,543.2 L683.7,543.6 L682.2,544.2 L680.8,544.7 L679.4,545.3 L678,546 M757.2,556.7 L758.5,555.9 L759.8,555.1 L761.1,554.3 L762.4,553.5 L763.7,552.7 L765,551.8 L766.2,551 L767.5,550.1 L768.7,549.2 L769.9,548.2 L771.1,547.3 L772.3,546.3 L773.4,545.3 L774.6,544.3 L775.7,543.3 L776.8,542.2 L777.9,541.2 L779,540.1 L780.1,539 L781.1,537.9 L782.1,536.7 L783.1,535.6 L784.1,534.4 L785.1,533.2 L786.1,532 L787,530.8 L787.9,529.6 L788.8,528.4 L789.7,527.1 L790.5,525.9 L791.4,524.6 L792.2,523.3 L793,522 L793.8,520.7 L794.5,519.3 M742.2,578 L742.5,579.5 L743,581 L743.5,582.4 L744.1,583.8 L744.8,585.2 L745.5,586.5 L746.4,587.8 L747.3,589 L748.3,590.2 L749.3,591.3 L750.4,592.4 L751.6,593.4 L752.8,594.3 L754,595.1 L755.4,595.9 L756.7,596.6 L758.1,597.3 L759.5,597.8 L761,598.3 L762.5,598.7 L764,599 L765.5,599.2 L767,599.3 L768.5,599.3 L770,599.3 L771.6,599.1 L773.1,598.9 L774.6,598.6 L776.1,598.2 L777.5,597.8 L778.9,597.2 L780.3,596.6 L781.7,595.8 L783,595.1 L784.2,594.2 L785.4,593.3 L786.6,592.3 L787.7,591.2 L788.7,590.1 L789.7,588.9 L790.6,587.7 L791.4,586.4 L792.2,585 L792.9,583.7 L793.5,582.3 L794,580.8 L794.4,579.4 L794.8,577.9 L795,576.4 L795.2,574.9 L795.3,573.3 L795.3,571.8 L795.2,570.3 L795,568.8 L794.8,567.3 L794.5,565.8 L794,564.3 L793.5,562.9 L792.9,561.4 L792.3,560.1 M729.4,569.3 L728.1,570.1 L726.8,570.9 L725.6,571.8 L724.4,572.7 L723.2,573.7 L722,574.6 L720.8,575.6 L719.7,576.7 L718.6,577.7 L717.5,578.8 L716.5,579.9 L715.5,581.1 L714.5,582.2 L713.5,583.4 L712.6,584.7 L711.7,585.9 L710.9,587.2 L710,588.4 L709.2,589.7 L708.5,591.1 L707.7,592.4 L707,593.8 L706.4,595.1 L705.8,596.5 L705.2,597.9 L704.6,599.4 L704.1,600.8 L703.6,602.3 L703.2,603.7 L702.8,605.2 L702.4,606.7 L702.1,608.2 L701.8,609.7 L701.5,611.2 L701.3,612.7 L701.1,614.2 L701,615.7 M743.3,563 L743.9,561.6 L744.6,560.3 L745.4,558.9 L746.1,557.6 L747,556.3 L747.8,555 L748.7,553.8 L749.6,552.6 L750.6,551.4 L751.6,550.2 L752.6,549.1 L753.7,548 L754.8,547 L755.9,546 L757.1,545 L758.3,544 L759.5,543.1 L760.8,542.2 L762.1,541.4 L763.4,540.6 L764.7,539.9 L766.1,539.2 L767.4,538.5 L768.8,537.9 L770.2,537.3 L771.7,536.7 L773.1,536.3 L774.6,535.8 L776.1,535.4 L777.5,535 L779,534.7 L780.5,534.5 L782.1,534.3 L783.6,534.1 L785.1,534 L786.6,533.9 L788.2,533.9 L789.7,533.9 L791.2,533.9 L792.7,534.1 L794.3,534.2 L795.8,534.4 L797.3,534.7 L798.8,535 L800.3,535.3 L801.7,535.7 L803.2,536.2 L804.6,536.7 L806.1,537.2 M757.8,558.7 L759.1,557.9 L760.3,557 L761.5,556.1 L762.7,555 L763.8,554 L764.8,552.9 L765.8,551.7 L766.7,550.5 L767.5,549.2 L768.3,547.9 L769,546.5 L769.7,545.1 L770.3,543.7 L770.8,542.3 L771.2,540.8 L771.6,539.3 L771.8,537.8 L772,536.3 L772.2,534.8 L772.2,533.3 L772.2,531.7 L772.1,530.2 L771.9,528.7 L771.6,527.2 L771.2,525.7 L770.8,524.2 L770.3,522.8 L769.8,521.4 L769.1,520 L768.4,518.6 L767.6,517.3 L766.8,516.1 L765.9,514.8 L764.9,513.6 L763.9,512.5 L762.8,511.4 L761.6,510.4 L760.5,509.5 L759.2,508.6 L757.9,507.7 L756.6,507 L755.3,506.3 L753.9,505.7 L752.4,505.1 L751,504.6 L749.5,504.2 L748,503.9 L746.5,503.7 L745,503.5 L743.5,503.4 L741.9,503.4 L740.4,503.4 L738.9,503.6 L737.4,503.8 L735.9,504.1 L734.4,504.4 L732.9,504.9 L731.5,505.4 L730.1,506 L728.7,506.7 L727.4,507.4 L726.1,508.2 L724.8,509.1 L723.6,510 L722.4,511 L721.3,512 L720.3,513.2 M732.6,552.1 L731.7,550.9 L730.8,549.6 L730,548.4 L729.2,547.1 L728.4,545.8 L727.7,544.4 L727,543.1 L726.3,541.7 L725.6,540.3 L725,538.9 L724.5,537.5 L723.9,536.1 L723.5,534.6 L723,533.2 L722.6,531.7 L722.2,530.2 L721.9,528.7 L721.6,527.2 L721.3,525.7 L721.1,524.2 L720.9,522.7 L720.7,521.2 L720.6,519.6 L720.5,518.1 L720.5,516.6 L720.5,515.1 L720.6,513.5 L720.6,512 L720.8,510.5 L720.9,509 L721.1,507.4 L721.4,505.9 L721.7,504.4 L722,502.9 L722.3,501.5 L722.7,500 L723.2,498.5 M740.5,578 L740.2,579.5 L740,581 L739.8,582.5 L739.6,584.1 L739.4,585.6 L739.2,587.1 L739,588.6 L738.8,590.1 L738.6,591.6 L738.5,593.2 L738.3,594.7 L738.2,596.2 L738,597.7 L737.9,599.2 L737.8,600.8 L737.7,602.3 L737.6,603.8 L737.5,605.3 L737.4,606.9 L737.3,608.4 L737.2,609.9 L737.2,611.4 L737.1,613 L737.1,614.5 L737,616 L737,617.6 L737,619.1 L737,620.6 L736.9,622.1 L737,623.7 L737,625.2 L737,626.7 L737,628.3 L737.1,629.8 M743.3,563 L741.8,563 L740.2,563 L738.7,563 L737.2,563.1 L735.7,563.3 L734.2,563.4 L732.6,563.6 L731.1,563.9 L729.6,564.2 L728.1,564.6 L726.7,564.9 L725.2,565.4 L723.7,565.8 L722.3,566.3 L720.9,566.9 L719.5,567.5 L718.1,568.1 L716.7,568.8 L715.3,569.5 L714,570.2 L712.7,571 L711.4,571.8 L710.1,572.6 L708.9,573.5 L707.6,574.4 L706.4,575.4 L705.3,576.4 L704.1,577.4 L703,578.4 L701.9,579.5 L700.9,580.6 L699.9,581.7 L698.9,582.9 L697.9,584.1 L697,585.3 L696.1,586.5 L695.2,587.8 L694.4,589.1 L693.6,590.4 L692.9,591.7 L692.2,593.1 L691.5,594.5 L690.9,595.9 L690.3,597.3 L689.7,598.7 L689.2,600.1 L688.7,601.6 L688.3,603 M746.6,577.8 L746.7,579.4 L746.7,580.9 L746.6,582.4 L746.5,583.9 L746.3,585.5 L746.1,587 L745.9,588.5 L745.6,590 L745.2,591.5 L744.8,592.9 L744.3,594.4 L743.8,595.8 L743.2,597.2 L742.6,598.6 L742,600 L741.3,601.4 L740.5,602.7 L739.7,604 L738.9,605.3 L738,606.5 L737.1,607.8 L736.1,608.9 L735.1,610.1 L734.1,611.2 L733,612.3 L731.8,613.3 L730.7,614.3 L729.5,615.3 L728.3,616.2 M752.1,575.3 L752.6,576.7 L753,578.2 L753.3,579.7 L753.5,581.2 L753.7,582.7 L753.8,584.2 L753.7,585.8 L753.7,587.3 L753.5,588.8 L753.2,590.3 L752.9,591.8 L752.4,593.3 L751.9,594.7 L751.3,596.1 L750.7,597.5 L749.9,598.8 L749.1,600.1 L748.2,601.4 L747.3,602.6 L746.3,603.7 L745.2,604.8 L744.1,605.8 L742.9,606.8 L741.7,607.7 L740.4,608.5 L739.1,609.3 L737.7,610 L736.3,610.6 L734.8,611.1 L733.4,611.5 L731.9,611.9 L730.4,612.2 L728.9,612.4 L727.4,612.5 L725.8,612.6 L724.3,612.5 L722.8,612.4 L721.3,612.2 L719.8,611.9 L718.3,611.5 L716.8,611 L715.4,610.5 L714,609.9 L712.7,609.2 L711.3,608.4 L710.1,607.6 L708.8,606.7 L707.7,605.7 L706.5,604.6 L705.5,603.5 L704.5,602.4 L703.5,601.2 L702.7,599.9 L701.9,598.6 L701.1,597.3 L700.5,595.9 L699.9,594.5 L699.4,593 L699,591.6 L698.7,590.1 L698.4,588.6 L698.2,587.1 M757.1,569.4 L758.3,570.3 L759.5,571.3 L760.7,572.3 L761.8,573.3 L762.9,574.4 L763.9,575.5 L764.9,576.6 L765.9,577.8 L766.8,579 L767.7,580.3 L768.5,581.6 L769.3,582.9 L770.1,584.2 L770.7,585.6 L771.4,587 L772,588.4 L772.5,589.8 L773,591.2 L773.4,592.7 L773.8,594.2 L774.1,595.7 L774.4,597.2 L774.6,598.7 L774.8,600.2 L774.9,601.7 L774.9,603.3 L774.9,604.8 L774.9,606.3 L774.7,607.9 L774.6,609.4 L774.3,610.9 L774.1,612.4 L773.7,613.9 L773.3,615.4 L772.9,616.8 L772.4,618.3 L771.9,619.7 L771.3,621.1 L770.6,622.5 L769.9,623.8 L769.2,625.2 M743.3,563 L742.2,564.1 L741.1,565.1 L739.9,566.1 L738.8,567.1 L737.6,568 L736.3,569 L735.1,569.8 L733.8,570.7 L732.5,571.5 L731.2,572.2 L729.9,573 L728.5,573.7 L727.1,574.3 L725.7,574.9 L724.3,575.5 L722.9,576 L721.4,576.5 L720,577 L718.5,577.4 L717,577.7 L715.5,578.1 L714,578.4 L712.5,578.6 L711,578.8 L709.5,579 L707.9,579.1 L706.4,579.1 L704.9,579.2 L703.4,579.1 L701.8,579.1 L700.3,579 L698.8,578.8 L697.3,578.6 L695.8,578.4 L694.3,578.1 L692.8,577.8 L691.3,577.5 L689.8,577.1 L688.3,576.6 L686.9,576.1 L685.4,575.6 L684,575.1 L682.6,574.5 L681.2,573.8 L679.9,573.1 L678.5,572.4 L677.2,571.7 L675.9,570.9 M757.8,558.1 L759.3,557.8 L760.7,557.5 L762.2,557.2 L763.8,556.9 L765.3,556.7 L766.8,556.5 L768.3,556.3 L769.8,556.2 L771.3,556.1 L772.9,556 L774.4,555.9 L775.9,555.9 L777.4,555.8 L779,555.9 L780.5,555.9 L782,556 L783.6,556.1 L785.1,556.2 L786.6,556.4 L788.1,556.6 M741.8,578.2 L741.5,579.6 L741,581.1 L740.6,582.6 L740.1,584 L739.6,585.5 L739,586.9 L738.4,588.3 L737.7,589.7 L737,591 L736.3,592.4 L735.6,593.7 L734.8,595 L733.9,596.3 L733.1,597.5 L732.2,598.8 L731.2,600 L730.3,601.2 L729.3,602.3 L728.2,603.4 L727.2,604.5 L726.1,605.6 L725,606.7 L723.8,607.7 L722.6,608.6 L721.4,609.6 L720.2,610.5 L719,611.4 L717.7,612.2 L716.4,613 L715.1,613.8 L713.7,614.5 L712.4,615.2 L711,615.9 L709.6,616.5 L708.2,617.1 L706.8,617.6 L705.3,618.2 M736.2,576.5 L735.4,577.8 L734.6,579.1 L733.8,580.4 L732.9,581.7 L732,582.9 L731.2,584.2 L730.3,585.4 L729.3,586.6 L728.4,587.8 L727.5,589 L726.5,590.2 L725.5,591.4 L724.5,592.6 L723.5,593.7 L722.5,594.8 L721.5,596 L720.4,597.1 L719.3,598.2 L718.3,599.2 L717.2,600.3 L716,601.4 L714.9,602.4 L713.8,603.4 L712.6,604.4 L711.5,605.4 L710.3,606.4 L709.1,607.3 L707.9,608.3 L706.7,609.2 L705.5,610.1 L704.2,611 L703,611.9 L701.7,612.8 L700.5,613.6 L699.2,614.5 M743.3,563 L744.2,561.8 L745.2,560.6 L746.2,559.5 L747.3,558.4 L748.4,557.3 L749.5,556.3 L750.7,555.3 L751.8,554.3 L753.1,553.4 L754.3,552.5 L755.6,551.7 L756.9,550.9 L758.2,550.1 L759.6,549.4 L761,548.8 L762.4,548.1 L763.8,547.6 L765.2,547.1 L766.7,546.6 L768.1,546.2 L769.6,545.8 L771.1,545.5 L772.6,545.2 L774.1,544.9 L775.6,544.8 L777.2,544.6 L778.7,544.6 L780.2,544.5 L781.7,544.6 L783.3,544.6 L784.8,544.8 L786.3,544.9 L787.8,545.2 L789.3,545.4 L790.8,545.7 L792.3,546.1 L793.8,546.5 L795.2,547 L796.7,547.5 L798.1,548.1 L799.5,548.7 L800.9,549.4 L802.2,550.1 L803.5,550.8 L804.9,551.6 L806.1,552.4 L807.4,553.3 L808.6,554.2 L809.8,555.2 M728.2,561 L726.6,560.7 L725.1,560.5 L723.6,560.2 L722.2,559.9 L720.7,559.6 L719.2,559.2 L717.7,558.9 L716.2,558.5 L714.7,558.2 L713.2,557.8 L711.7,557.4 L710.3,557 L708.8,556.6 L707.3,556.1 L705.9,555.7 L704.4,555.3 L703,554.8 L701.5,554.3 L700.1,553.8 L698.6,553.3 L697.2,552.8 L695.7,552.3 L694.3,551.8 L692.9,551.2 L691.5,550.7 L690,550.1 L688.6,549.5 L687.2,548.9 L685.8,548.3 L684.4,547.7 L683,547.1 L681.6,546.4 L680.3,545.8 L678.9,545.1 M743.2,547.9 L743.6,546.4 L744,544.9 L744.6,543.5 L745.2,542.1 L745.9,540.8 L746.6,539.4 L747.4,538.1 L748.3,536.9 L749.3,535.7 L750.2,534.5 L751.3,533.4 L752.4,532.4 L753.6,531.4 L754.8,530.4 L756,529.5 L757.3,528.7 L758.6,528 L760,527.3 L761.4,526.7 L762.8,526.1 L764.3,525.7 L765.8,525.3 L767.3,524.9 L768.8,524.7 L770.3,524.5 L771.8,524.4 L773.3,524.4 L774.9,524.4 L776.4,524.5 L777.9,524.7 L779.4,525 L780.9,525.4 L782.4,525.8 L783.8,526.3 L785.2,526.8 L786.6,527.5 L788,528.2 L789.3,529 L790.6,529.8 L791.8,530.7 L793,531.6 L794.1,532.7 L795.2,533.7 L796.3,534.8 L797.2,536 L798.2,537.2 L799,538.5 L799.8,539.8 L800.5,541.1 L801.2,542.5 L801.8,543.9 L802.3,545.4 L802.8,546.8 L803.1,548.3 L803.4,549.8 L803.7,551.3 L803.8,552.8 L803.9,554.4 L803.9,555.9 L803.8,557.4 L803.7,558.9 L803.5,560.5 L803.2,561.9 L802.8,563.4 L802.3,564.9 L801.8,566.3 L801.2,567.7 L800.6,569.1 L799.9,570.5 L799.1,571.8 M757.6,558.1 L759.2,557.9 L760.7,557.8 L762.2,557.8 L763.7,557.8 L765.3,557.9 L766.8,558.1 L768.3,558.3 L769.8,558.6 L771.3,558.9 L772.8,559.4 L774.2,559.8 L775.6,560.4 L777.1,561 L778.4,561.6 L779.8,562.3 L781.1,563.1 L782.4,563.9 L783.7,564.8 L784.9,565.7 L786.1,566.7 L787.2,567.7 L788.3,568.7 L789.3,569.8 L790.3,571 L791.3,572.2 L792.2,573.4 L793.1,574.7 L793.8,576 L794.6,577.3 L795.3,578.7 L795.9,580.1 L796.5,581.5 L797,583 L797.4,584.4 L797.8,585.9 L798.2,587.4 L798.4,588.9 L798.6,590.4 L798.8,591.9 L798.8,593.4 L798.8,595 L798.8,596.5 L798.7,598 L798.5,599.5 M743.3,563 L741.9,562.5 L740.4,562 L739,561.5 L737.5,561 L736.1,560.5 L734.7,560 L733.2,559.4 L731.8,558.9 L730.4,558.3 L729,557.7 L727.5,557.1 L726.1,556.6 L724.7,556 L723.3,555.3 L721.9,554.7 L720.5,554.1 L719.2,553.5 L717.8,552.8 L716.4,552.2 L715,551.5 L713.6,550.8 L712.3,550.1 L710.9,549.4 L709.6,548.7 L708.2,548 L706.9,547.3 L705.5,546.5 L704.2,545.8 L702.9,545.1 L701.5,544.3 L700.2,543.5 L698.9,542.7 L697.6,542 L696.3,541.2 L695,540.3 L693.7,539.5 L692.4,538.7 L691.1,537.9 L689.9,537 L688.6,536.2 L687.3,535.3 L686.1,534.5 L684.8,533.6 L683.6,532.7 M728.3,565.9 L726.8,566.2 L725.3,566.6 L723.8,567 L722.4,567.4 L720.9,567.8 L719.4,568.2 L718,568.6 L716.5,569 L715,569.5 L713.6,569.9 L712.1,570.4 L710.7,570.9 L709.2,571.4 L707.8,571.9 L706.3,572.4 L704.9,572.9 L703.5,573.4 L702,574 L700.6,574.6 L699.2,575.1 L697.8,575.7 L696.4,576.3 L695,576.9 L693.6,577.5 L692.2,578.1 L690.8,578.8 L689.4,579.4 L688,580.1 L686.6,580.7 M740.8,548.1 L740.1,546.8 L739.3,545.5 L738.4,544.2 L737.5,543 L736.5,541.8 L735.5,540.7 L734.3,539.7 L733.2,538.7 L731.9,537.8 L730.7,537 L729.3,536.2 L728,535.5 L726.6,534.9 L725.1,534.4 L723.7,533.9 L722.2,533.6 L720.7,533.3 L719.2,533.1 L717.6,533 L716.1,533 L714.6,533.1 L713.1,533.2 L711.6,533.5 L710.1,533.8 L708.6,534.2 L707.2,534.7 L705.7,535.3 L704.4,536 L703,536.7 L701.7,537.5 L700.5,538.4 L699.3,539.3 L698.2,540.4 L697.1,541.4 L696.1,542.6 L695.1,543.8 L694.2,545 L693.4,546.3 L692.7,547.7 L692,549 L691.5,550.5 L691,551.9 L690.6,553.4 L690.2,554.9 L690,556.4 L689.8,557.9 L689.8,559.4 L689.8,561 L689.9,562.5 L690.1,564 L690.4,565.5 L690.7,567 L691.2,568.4 L691.7,569.9 L692.3,571.3 L693,572.6 L693.8,574 L694.6,575.2 L695.5,576.5 L696.5,577.6 M730,555.5 L728.6,554.8 L727.2,554.2 L725.8,553.6 L724.4,553 L723,552.5 L721.6,551.9 L720.1,551.4 L718.7,550.9 L717.2,550.5 L715.8,550 L714.3,549.6 L712.8,549.2 L711.3,548.8 L709.9,548.5 L708.4,548.2 L706.9,547.8 L705.4,547.6 L703.9,547.3 L702.3,547.1 L700.8,546.9 L699.3,546.7 L697.8,546.5 L696.3,546.3 L694.8,546.2 L693.2,546.1 L691.7,546.1 L690.2,546 L688.6,546 L687.1,546 L685.6,546 L684.1,546 L682.5,546.1 L681,546.2 L679.5,546.3 L678,546.5" fill="none" stroke="#ff00ff" stroke-width="1.2" shape-rendering="crispEdges"/>
</svg></div><!--/gl3-->
  <!-- vertical splitter 3 -->
  <div class="a" style="left:856px;top:422px;width:1px;height:240px;background:#fff"></div>
  <div class="a" style="left:855.5px;top:495px;width:1px;height:92px;background:repeating-linear-gradient(#8a8a8a 0 1px,transparent 1px 3px)"></div>
  <svg class="a" style="left:853px;top:487px" width="8" height="8" viewBox="0 0 8 8"><path d="M2,1 L5.5,4 L2,7" fill="none" stroke="#000" stroke-width="1.6"/></svg>
  <svg class="a" style="left:853px;top:587px" width="8" height="8" viewBox="0 0 8 8"><path d="M2,1 L5.5,4 L2,7" fill="none" stroke="#000" stroke-width="1.6"/></svg>
  <!-- horizontal splitter 2 -->
  <div class="a" style="left:597px;top:668px;width:88px;height:1px;background:repeating-linear-gradient(90deg,#8a8a8a 0 1px,transparent 1px 3px)"></div>
  <svg class="a" style="left:586px;top:665px" width="8" height="6" viewBox="0 0 8 6"><path d="M1,1 L4,4.5 L7,1" fill="none" stroke="#000" stroke-width="1.6"/></svg>
  <svg class="a" style="left:686px;top:665px" width="8" height="6" viewBox="0 0 8 6"><path d="M1,1 L4,4.5 L7,1" fill="none" stroke="#000" stroke-width="1.6"/></svg>

  <!-- table pane -->
  <div class="a" style="left:858px;top:421px;width:163px;height:241px;border-top:2px solid #8c8c8c;border-left:1px solid #8c8c8c"></div>
  <div class="a" style="left:859px;top:422px;width:1px;height:240px;background:#fff"></div>
  <div class="a" style="left:861px;top:432px;width:1px;height:226px;background:#8a8a8a"></div>
  <div class="a" style="left:862px;top:432px;width:1px;height:226px;background:#fff"></div>
  <div class="a" style="left:865px;top:432px;width:1px;height:226px;background:#8a8a8a"></div>
  <svg class="a" style="left:860px;top:423px" width="8" height="8" viewBox="0 0 8 8"><path d="M5,1.5 L1.5,4 L5,6.5" fill="none" stroke="#fff" stroke-width="1"/><path d="M6.5,1 L6.5,7" stroke="#000" stroke-width="1.2"/></svg>
  <div class="a" style="left:871px;top:423px;width:17px;height:16px;background:#ececec;border-bottom:1px solid #8c8c8c;border-right:1px solid #8c8c8c"></div>
  <svg class="a" style="left:874px;top:425px" width="12" height="12" viewBox="0 0 12 12"><rect x="0.5" y="0.5" width="10.5" height="7" fill="#000"/><rect x="0.5" y="8.5" width="4" height="2.5" fill="#000"/><rect x="6.5" y="8.5" width="4.5" height="2.5" fill="#000"/><path d="M2.5,10.5 L5.5,5.5" stroke="#f00" stroke-width="1.2"/></svg>
  <div class="a" style="left:888px;top:423px;width:1px;height:236px;background:#8c8c8c"></div>
  <div class="a" style="left:889px;top:423px;width:110px;height:219px;background:#fff;overflow:hidden">
    <div class="a" style="left:0;top:12px;width:110px;text-align:center;color:#2a2ae6;font-size:12.5px;letter-spacing:0.6px;line-height:17px;white-space:pre">Alice Event
Display
Summary
Table</div>
    <div class="a" style="left:10px;top:95px;width:110px;height:200px;background:#888"></div>
    <div class="a" style="left:11px;top:96px;width:110px;height:22px;background:#6b6b9e"></div>
    <div class="a t" style="left:13px;top:103.3px;color:#f4f4f4;letter-spacing:0.3px">ESD Tracks</div>
    <div class="a" style="left:11px;top:118px;width:110px;height:19px;background:#bcbcf8"></div>
    <div class="a" style="left:27px;top:118px;width:2px;height:200px;background:#8a8a9a"></div>
    <div class="a" style="left:100px;top:118px;width:2px;height:200px;background:#8a8a9a"></div>
    <div class="a t" style="left:28.8px;top:122.4px;font-size:13px;letter-spacing:0.9px">Momentum</div>
    <div class="a" style="left:11px;top:137px;width:16px;height:22px;background:#c4c4f8"></div>
    <div class="a" style="left:29px;top:137px;width:71px;height:22px;background:#fff"></div>
    <div class="a" style="left:102px;top:137px;width:20px;height:22px;background:#fff"></div>
    <div class="a" style="left:11px;top:160px;width:16px;height:22px;background:#c4c4f8"></div>
    <div class="a" style="left:29px;top:160px;width:71px;height:22px;background:#dedefc"></div>
    <div class="a" style="left:102px;top:160px;width:20px;height:22px;background:#dedefc"></div>
    <div class="a" style="left:11px;top:183px;width:16px;height:22px;background:#c4c4f8"></div>
    <div class="a" style="left:29px;top:183px;width:71px;height:22px;background:#fff"></div>
    <div class="a" style="left:102px;top:183px;width:20px;height:22px;background:#fff"></div>
    <div class="a" style="left:11px;top:206px;width:16px;height:22px;background:#c4c4f8"></div>
    <div class="a" style="left:29px;top:206px;width:71px;height:22px;background:#dedefc"></div>
    <div class="a" style="left:102px;top:206px;width:20px;height:22px;background:#dedefc"></div>
    <div class="a t" style="left:29px;width:71px;text-align:center;top:144px;font-size:13px;letter-spacing:0.9px">0.6911</div>
    <div class="a t" style="left:29px;width:71px;text-align:center;top:167px;font-size:13px;letter-spacing:0.9px">1.4723</div>
    <div class="a t" style="left:29px;width:71px;text-align:center;top:190px;font-size:13px;letter-spacing:0.9px">1.7102</div>
    <div class="a t" style="left:29px;width:71px;text-align:center;top:213px;font-size:13px;letter-spacing:0.9px">1.0188</div>
    <div class="a t" style="left:103px;top:144px;font-size:13px">0</div>
    <div class="a t" style="left:103px;top:167px;font-size:13px">1</div>
    <div class="a t" style="left:103px;top:190px;font-size:13px">1</div>
    <div class="a t" style="left:103px;top:213px;font-size:13px">0</div>
    <div class="a" style="left:12px;top:142.5px;width:12px;height:12px;background:#fff;border-top:2px solid #111;border-left:2px solid #111;border-right:1px solid #bbb;border-bottom:1px solid #bbb"></div>
    <div class="a" style="left:12px;top:165.5px;width:12px;height:12px;background:#fff;border-top:2px solid #111;border-left:2px solid #111;border-right:1px solid #bbb;border-bottom:1px solid #bbb"></div>
    <div class="a" style="left:12px;top:188.5px;width:12px;height:12px;background:#fff;border-top:2px solid #111;border-left:2px solid #111;border-right:1px solid #bbb;border-bottom:1px solid #bbb"></div>
    <div class="a" style="left:12px;top:211.5px;width:12px;height:12px;background:#fff;border-top:2px solid #111;border-left:2px solid #111;border-right:1px solid #bbb;border-bottom:1px solid #bbb"></div>
  </div>
  <!-- vscroll -->
  <div class="a" style="left:999px;top:423px;width:17px;height:219px;background:#e6e6e6"></div>
  <svg class="a" style="left:1002px;top:429px" width="10" height="6" viewBox="0 0 10 6"><path d="M1,5.5 L5,1 L9,5.5 Z" fill="#000"/></svg>
  <svg class="a" style="left:1002px;top:631px" width="10" height="6" viewBox="0 0 10 6"><path d="M1,0.5 L5,5 L9,0.5 Z" fill="#000"/></svg>
  <div class="a" style="left:999px;top:440px;width:16px;height:16px;background:#e6e6e6;border:1px solid #8c8c8c;border-top-color:#9a9a9a"></div>
  <!-- hscroll -->
  <div class="a" style="left:889px;top:642px;width:127px;height:16px;background:#e6e6e6"></div>
  <svg class="a" style="left:892px;top:645px" width="8" height="10" viewBox="0 0 8 10"><path d="M6,1 L1.5,5 L6,9 Z" fill="#000"/></svg>
  <svg class="a" style="left:987px;top:645px" width="8" height="10" viewBox="0 0 8 10"><path d="M2,1 L6.5,5 L2,9 Z" fill="#000"/></svg>
  <div class="a" style="left:905px;top:642.5px;width:28px;height:14px;background:#e6e6e6;border:1px solid #8c8c8c"></div>
  <div class="a" style="left:916px;top:646px;width:1px;height:7px;background:#777"></div>
  <div class="a" style="left:919px;top:646px;width:1px;height:7px;background:#777"></div>
  <div class="a" style="left:922px;top:646px;width:1px;height:7px;background:#777"></div>
  <div class="a" style="left:1016px;top:422px;width:4px;height:240px;background:#fff"></div>
  <!-- command area -->
  <div class="a" style="left:258px;top:693px;width:764px;height:76px;border-top:1px solid #fff;border-left:1px solid #fff;border-right:1px solid #8c8c8c;border-bottom:1px solid #8c8c8c"></div>
  <div class="a tab" style="left:258px;top:674px;width:71px;height:20px;border-radius:2px 2px 0 0"></div>
  <div class="a t" style="left:263.8px;top:676.5px">Command</div>
  <div class="a t" style="left:268px;top:703.2px">Command (local):</div>
  <div class="a" style="left:377px;top:699px;width:634px;height:21px;background:#fff;border-top:1px solid #8c8c8c;border-left:1px solid #8c8c8c;border-right:1px solid #ececec;border-bottom:1px solid #ececec"></div>
  <div class="a" style="left:994px;top:699.5px;width:17px;height:19px;background:#e6e6e6;border:1px solid #8c8c8c;border-top:2px solid #8c8c8c"></div>
  <svg class="a" style="left:998px;top:706px" width="10" height="6" viewBox="0 0 10 6"><path d="M1,0.5 L5,5 L9,0.5 Z" fill="#000"/></svg>
  <div class="a" style="left:263px;top:727px;width:754px;height:37px;background:#fff;border-top:1px solid #8c8c8c;border-left:1px solid #8c8c8c;border-right:1px solid #ececec;border-bottom:1px solid #ececec"></div>
  <!-- status bar -->
  <div class="a" style="left:0;top:771px;width:1024px;height:1px;background:#8c8c8c"></div>
  <div class="a" style="left:1px;top:771px;width:334px;height:19px;border-left:1px solid #fff;border-right:1px solid #fff"></div>
  <div class="a" style="left:337px;top:771px;width:100px;height:19px;border-left:1px solid #8c8c8c;border-right:1px solid #fff"></div>
  <div class="a" style="left:439px;top:771px;width:100px;height:19px;border-left:1px solid #8c8c8c;border-right:1px solid #fff"></div>
  <div class="a" style="left:541px;top:771px;width:482px;height:19px;border-left:1px solid #8c8c8c"></div>
  <svg class="a" style="left:1008px;top:774px" width="16" height="16" viewBox="0 0 16 16"><path d="M4,15 L15,4 M8,15 L15,8 M12,15 L15,12" stroke="#8a8a8a" stroke-width="1.2"/><path d="M5,15 L15,5 M9,15 L15,9 M13,15 L15,13" stroke="#fff" stroke-width="0.8"/></svg>
</div>
</body></html>
